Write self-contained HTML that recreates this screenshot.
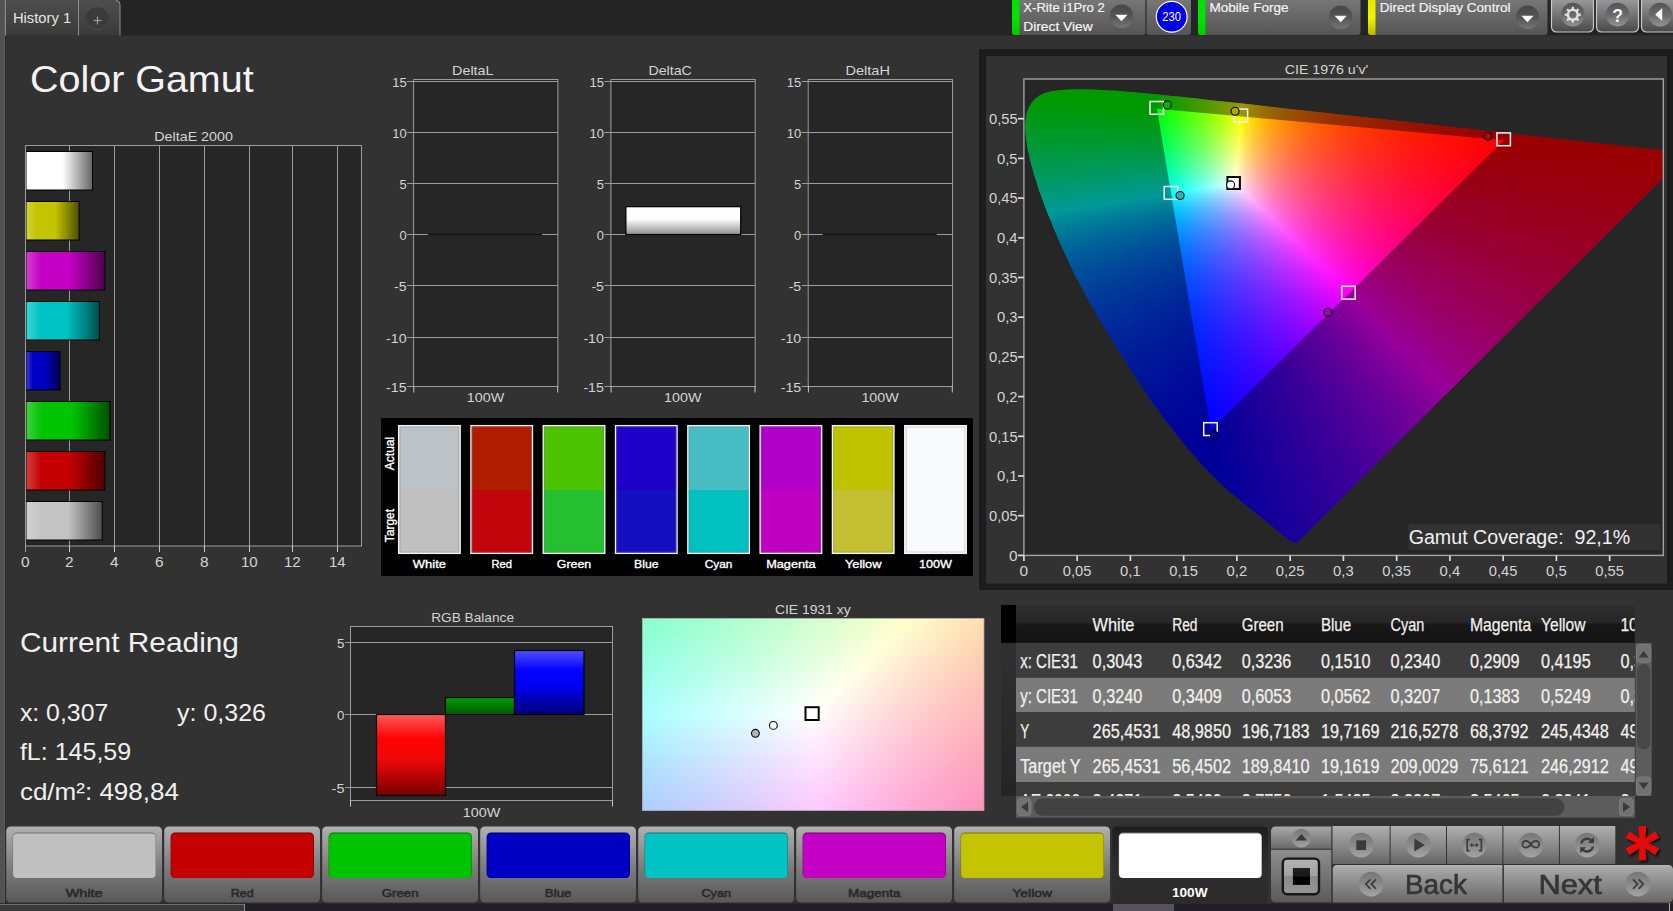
<!DOCTYPE html><html><head><meta charset="utf-8"><title>Color Gamut</title><style>html,body{margin:0;padding:0;background:#323232;overflow:hidden}svg{display:block}text{white-space:pre}</style></head><body><svg width="1673" height="911" viewBox="0 0 1673 911" font-family="'Liberation Sans', sans-serif"><defs><linearGradient id="gTab" x1="0" y1="0" x2="0" y2="1"><stop offset="0" stop-color="#4e4e4e"/><stop offset="1" stop-color="#3a3a3a"/></linearGradient><radialGradient id="gPlus" cx="0.5" cy="0.4" r="0.55"><stop offset="0" stop-color="#3c3c3c"/><stop offset="0.8" stop-color="#3a3a3a"/><stop offset="1" stop-color="#444"/></radialGradient><linearGradient id="gPan" x1="0" y1="0" x2="0" y2="1"><stop offset="0" stop-color="#767676"/><stop offset="1" stop-color="#555"/></linearGradient><linearGradient id="gGreen" x1="0" y1="0" x2="0" y2="1"><stop offset="0" stop-color="#04e004"/><stop offset="0.5" stop-color="#00e600"/><stop offset="1" stop-color="#00cc00"/></linearGradient><linearGradient id="gYel" x1="0" y1="0" x2="0" y2="1"><stop offset="0" stop-color="#e6e600"/><stop offset="0.5" stop-color="#f4f400"/><stop offset="1" stop-color="#b8b800"/></linearGradient><linearGradient id="gDD" x1="0" y1="0" x2="0" y2="1"><stop offset="0" stop-color="#464646"/><stop offset="0.5" stop-color="#555"/><stop offset="1" stop-color="#767676"/></linearGradient><linearGradient id="gBtn" x1="0" y1="0" x2="0" y2="1"><stop offset="0" stop-color="#9c9c9c"/><stop offset="0.5" stop-color="#747474"/><stop offset="1" stop-color="#484848"/></linearGradient><linearGradient id="gIc" x1="0" y1="0" x2="0" y2="1"><stop offset="0" stop-color="#545454"/><stop offset="0.5" stop-color="#6a6a6a"/><stop offset="1" stop-color="#929292"/></linearGradient><linearGradient id="gE0" x1="0" y1="0" x2="1" y2="0"><stop offset="0" stop-color="#ffffff"/><stop offset="0.2" stop-color="#ffffff"/><stop offset="0.55" stop-color="#ffffff"/><stop offset="1" stop-color="#666666"/></linearGradient><linearGradient id="gE1" x1="0" y1="0" x2="1" y2="0"><stop offset="0" stop-color="#d2d23f"/><stop offset="0.2" stop-color="#c4c400"/><stop offset="0.55" stop-color="#c4c400"/><stop offset="1" stop-color="#4e4e00"/></linearGradient><linearGradient id="gE2" x1="0" y1="0" x2="1" y2="0"><stop offset="0" stop-color="#d23fd2"/><stop offset="0.2" stop-color="#c400c4"/><stop offset="0.55" stop-color="#c400c4"/><stop offset="1" stop-color="#4e004e"/></linearGradient><linearGradient id="gE3" x1="0" y1="0" x2="1" y2="0"><stop offset="0" stop-color="#3fd2d2"/><stop offset="0.2" stop-color="#00c4c4"/><stop offset="0.55" stop-color="#00c4c4"/><stop offset="1" stop-color="#004e4e"/></linearGradient><linearGradient id="gE4" x1="0" y1="0" x2="1" y2="0"><stop offset="0" stop-color="#3f3fd2"/><stop offset="0.2" stop-color="#0000c4"/><stop offset="0.55" stop-color="#0000c4"/><stop offset="1" stop-color="#00004e"/></linearGradient><linearGradient id="gE5" x1="0" y1="0" x2="1" y2="0"><stop offset="0" stop-color="#3fd23f"/><stop offset="0.2" stop-color="#00c400"/><stop offset="0.55" stop-color="#00c400"/><stop offset="1" stop-color="#004e00"/></linearGradient><linearGradient id="gE6" x1="0" y1="0" x2="1" y2="0"><stop offset="0" stop-color="#d23f3f"/><stop offset="0.2" stop-color="#c40000"/><stop offset="0.55" stop-color="#c40000"/><stop offset="1" stop-color="#4e0000"/></linearGradient><linearGradient id="gE7" x1="0" y1="0" x2="1" y2="0"><stop offset="0" stop-color="#d2d2d2"/><stop offset="0.2" stop-color="#c4c4c4"/><stop offset="0.55" stop-color="#c4c4c4"/><stop offset="1" stop-color="#4e4e4e"/></linearGradient><linearGradient id="gDC" x1="0" y1="0" x2="0" y2="1"><stop offset="0" stop-color="#ffffff"/><stop offset="0.45" stop-color="#fdfdfd"/><stop offset="1" stop-color="#8e8e8e"/></linearGradient><linearGradient id="u0" gradientUnits="userSpaceOnUse" x1="1052" x2="1119"><stop offset="0" stop-color="#0f0"/><stop offset="1" stop-color="#0f0"/></linearGradient><linearGradient id="u1" gradientUnits="userSpaceOnUse" x1="1044" x2="1143"><stop offset="0" stop-color="#0f0"/><stop offset="1" stop-color="#0f0"/></linearGradient><linearGradient id="u2" gradientUnits="userSpaceOnUse" x1="1039" x2="1164"><stop offset="0" stop-color="#0f0"/><stop offset="0.92" stop-color="#0f0"/><stop offset="1" stop-color="#16ff00"/></linearGradient><linearGradient id="u3" gradientUnits="userSpaceOnUse" x1="1036" x2="1183"><stop offset="0" stop-color="#0f0"/><stop offset="0.8095" stop-color="#0f0"/><stop offset="1" stop-color="#4f0"/></linearGradient><linearGradient id="u4" gradientUnits="userSpaceOnUse" x1="1033" x2="1202"><stop offset="0" stop-color="#00ff01"/><stop offset="0.7219" stop-color="#0f0"/><stop offset="0.858" stop-color="#37ff00"/><stop offset="1" stop-color="#78ff00"/></linearGradient><linearGradient id="u5" gradientUnits="userSpaceOnUse" x1="1032" x2="1220"><stop offset="0" stop-color="#00ff04"/><stop offset="0.1543" stop-color="#0f0"/><stop offset="0.6543" stop-color="#0f0"/><stop offset="0.8298" stop-color="#50ff00"/><stop offset="1" stop-color="#afff00"/></linearGradient><linearGradient id="u6" gradientUnits="userSpaceOnUse" x1="1030" x2="1238"><stop offset="0" stop-color="#00ff08"/><stop offset="0.25" stop-color="#0f0"/><stop offset="0.6058" stop-color="#0f0"/><stop offset="0.7115" stop-color="#36ff00"/><stop offset="0.8125" stop-color="#6fff00"/><stop offset="0.9087" stop-color="#acff00"/><stop offset="1" stop-color="#ef0"/></linearGradient><linearGradient id="u7" gradientUnits="userSpaceOnUse" x1="1029" x2="1256"><stop offset="0" stop-color="#00ff0b"/><stop offset="0.3304" stop-color="#0f0"/><stop offset="0.5595" stop-color="#0f0"/><stop offset="0.6564" stop-color="#35ff00"/><stop offset="0.7577" stop-color="#75ff00"/><stop offset="0.8502" stop-color="#b6ff00"/><stop offset="0.9383" stop-color="#feff00"/><stop offset="1" stop-color="#ffd200"/></linearGradient><linearGradient id="u8" gradientUnits="userSpaceOnUse" x1="1028" x2="1274"><stop offset="0" stop-color="#00ff0f"/><stop offset="0.3984" stop-color="#0f0"/><stop offset="0.5244" stop-color="#01ff00"/><stop offset="0.6179" stop-color="#3aff00"/><stop offset="0.7073" stop-color="#7f0"/><stop offset="0.7927" stop-color="#baff00"/><stop offset="0.8699" stop-color="#ff0"/><stop offset="0.9309" stop-color="#ffce00"/><stop offset="1" stop-color="#ffa600"/></linearGradient><linearGradient id="u9" gradientUnits="userSpaceOnUse" x1="1027" x2="1292"><stop offset="0" stop-color="#00ff12"/><stop offset="0.4906" stop-color="#0f0"/><stop offset="0.5774" stop-color="#39ff00"/><stop offset="0.6604" stop-color="#7f0"/><stop offset="0.7358" stop-color="#b7ff00"/><stop offset="0.8113" stop-color="#ff0"/><stop offset="0.8491" stop-color="#ffdc00"/><stop offset="0.8943" stop-color="#fb0"/><stop offset="0.9434" stop-color="#ff9f00"/><stop offset="1" stop-color="#ff8500"/></linearGradient><linearGradient id="u10" gradientUnits="userSpaceOnUse" x1="1026" x2="1310"><stop offset="0" stop-color="#00ff16"/><stop offset="0.4613" stop-color="#00ff03"/><stop offset="0.5387" stop-color="#36ff00"/><stop offset="0.6162" stop-color="#74ff00"/><stop offset="0.6866" stop-color="#b4ff00"/><stop offset="0.7606" stop-color="#fffe00"/><stop offset="0.8063" stop-color="#ffd200"/><stop offset="0.8627" stop-color="#fa0"/><stop offset="0.9261" stop-color="#ff8900"/><stop offset="1" stop-color="#ff6c00"/></linearGradient><linearGradient id="u11" gradientUnits="userSpaceOnUse" x1="1025" x2="1328"><stop offset="0" stop-color="#00ff19"/><stop offset="0.4389" stop-color="#01ff07"/><stop offset="0.5149" stop-color="#3bff03"/><stop offset="0.5842" stop-color="#7f0"/><stop offset="0.6502" stop-color="#b7ff00"/><stop offset="0.7129" stop-color="#fdff00"/><stop offset="0.7723" stop-color="#ffc600"/><stop offset="0.835" stop-color="#ff9b00"/><stop offset="0.9109" stop-color="#f70"/><stop offset="1" stop-color="#ff5800"/></linearGradient><linearGradient id="u12" gradientUnits="userSpaceOnUse" x1="1025" x2="1346"><stop offset="0" stop-color="#00ff1d"/><stop offset="0.4143" stop-color="#00ff0c"/><stop offset="0.486" stop-color="#3aff07"/><stop offset="0.5514" stop-color="#77ff03"/><stop offset="0.6137" stop-color="#b8ff00"/><stop offset="0.6729" stop-color="#feff00"/><stop offset="0.704" stop-color="#fd0"/><stop offset="0.7321" stop-color="#ffc300"/><stop offset="0.7664" stop-color="#ffa900"/><stop offset="0.8037" stop-color="#ff9200"/><stop offset="0.891" stop-color="#ff6900"/><stop offset="1" stop-color="#ff4800"/></linearGradient><linearGradient id="u13" gradientUnits="userSpaceOnUse" x1="1025" x2="1364"><stop offset="0" stop-color="#00ff20"/><stop offset="0.3923" stop-color="#00ff10"/><stop offset="0.4572" stop-color="#37ff0d"/><stop offset="0.5221" stop-color="#76ff08"/><stop offset="0.5811" stop-color="#b8ff04"/><stop offset="0.6372" stop-color="#feff00"/><stop offset="0.6696" stop-color="#ffd900"/><stop offset="0.7021" stop-color="#ffba00"/><stop offset="0.7375" stop-color="#ffa000"/><stop offset="0.7788" stop-color="#ff8700"/><stop offset="0.8761" stop-color="#ff5d00"/><stop offset="1" stop-color="#ff3b00"/></linearGradient><linearGradient id="u14" gradientUnits="userSpaceOnUse" x1="1024" x2="1382"><stop offset="0" stop-color="#00ff24"/><stop offset="0.3771" stop-color="#01ff15"/><stop offset="0.4385" stop-color="#39ff11"/><stop offset="0.4972" stop-color="#76ff0d"/><stop offset="0.5531" stop-color="#b8ff09"/><stop offset="0.6061" stop-color="#ffff05"/><stop offset="0.6369" stop-color="#ffd802"/><stop offset="0.6704" stop-color="#ffb700"/><stop offset="0.7095" stop-color="#f90"/><stop offset="0.7542" stop-color="#ff7e00"/><stop offset="0.8045" stop-color="#ff6700"/><stop offset="0.8631" stop-color="#ff5200"/><stop offset="1" stop-color="#ff3000"/></linearGradient><linearGradient id="u15" gradientUnits="userSpaceOnUse" x1="1024" x2="1400"><stop offset="0" stop-color="#00ff28"/><stop offset="0.359" stop-color="#00ff1a"/><stop offset="0.4176" stop-color="#39ff16"/><stop offset="0.4734" stop-color="#76ff13"/><stop offset="0.5266" stop-color="#b8ff0f"/><stop offset="0.5745" stop-color="#fcff0b"/><stop offset="0.5771" stop-color="#fffe0b"/><stop offset="0.6117" stop-color="#ffd106"/><stop offset="0.6463" stop-color="#ffaf03"/><stop offset="0.6862" stop-color="#ff9100"/><stop offset="0.734" stop-color="#ff7500"/><stop offset="0.7872" stop-color="#ff5d00"/><stop offset="0.8484" stop-color="#ff4800"/><stop offset="1" stop-color="#ff2600"/></linearGradient><linearGradient id="u16" gradientUnits="userSpaceOnUse" x1="1024" x2="1418"><stop offset="0" stop-color="#00ff2b"/><stop offset="0.3426" stop-color="#00ff1e"/><stop offset="0.3959" stop-color="#36ff1c"/><stop offset="0.4518" stop-color="#76ff18"/><stop offset="0.5025" stop-color="#b9ff15"/><stop offset="0.5482" stop-color="#fdff11"/><stop offset="0.5863" stop-color="#ffcd0b"/><stop offset="0.6218" stop-color="#ffaa07"/><stop offset="0.665" stop-color="#ff8903"/><stop offset="0.7132" stop-color="#ff6e00"/><stop offset="0.769" stop-color="#ff5600"/><stop offset="0.835" stop-color="#ff4000"/><stop offset="0.9112" stop-color="#ff2e00"/><stop offset="1" stop-color="#ff1e00"/></linearGradient><linearGradient id="u17" gradientUnits="userSpaceOnUse" x1="1024" x2="1436"><stop offset="0" stop-color="#00ff2f"/><stop offset="0.3301" stop-color="#01ff23"/><stop offset="0.3835" stop-color="#3bff21"/><stop offset="0.4345" stop-color="#79ff1e"/><stop offset="0.4806" stop-color="#b9ff1b"/><stop offset="0.5243" stop-color="#feff17"/><stop offset="0.5607" stop-color="#ffcd10"/><stop offset="0.5971" stop-color="#ffa70b"/><stop offset="0.6408" stop-color="#ff8506"/><stop offset="0.6917" stop-color="#ff6802"/><stop offset="0.7524" stop-color="#ff4f00"/><stop offset="0.8228" stop-color="#ff3900"/><stop offset="0.9053" stop-color="#ff2600"/><stop offset="1" stop-color="#ff1600"/></linearGradient><linearGradient id="u18" gradientUnits="userSpaceOnUse" x1="1024" x2="1454"><stop offset="0" stop-color="#00ff32"/><stop offset="0.3163" stop-color="#00ff28"/><stop offset="0.3651" stop-color="#37ff26"/><stop offset="0.4116" stop-color="#72ff23"/><stop offset="0.4581" stop-color="#b6ff21"/><stop offset="0.5023" stop-color="#feff1e"/><stop offset="0.5047" stop-color="#fffc1d"/><stop offset="0.5372" stop-color="#ffcc15"/><stop offset="0.5767" stop-color="#ffa20f"/><stop offset="0.6209" stop-color="#ff8009"/><stop offset="0.6744" stop-color="#ff6205"/><stop offset="0.7372" stop-color="#ff4801"/><stop offset="0.8116" stop-color="#ff3200"/><stop offset="0.8977" stop-color="#ff2000"/><stop offset="1" stop-color="#ff1000"/></linearGradient><linearGradient id="u19" gradientUnits="userSpaceOnUse" x1="1024" x2="1472"><stop offset="0" stop-color="#00ff36"/><stop offset="0.3036" stop-color="#00ff2d"/><stop offset="0.3504" stop-color="#37ff2b"/><stop offset="0.3973" stop-color="#75ff29"/><stop offset="0.442" stop-color="#b9ff26"/><stop offset="0.4821" stop-color="#ffff24"/><stop offset="0.5156" stop-color="#ffcb1b"/><stop offset="0.5536" stop-color="#ffa113"/><stop offset="0.6004" stop-color="#ff7c0d"/><stop offset="0.6562" stop-color="#ff5c07"/><stop offset="0.721" stop-color="#ff4303"/><stop offset="0.7991" stop-color="#ff2d00"/><stop offset="0.8906" stop-color="#ff1a00"/><stop offset="1" stop-color="#ff0a00"/></linearGradient><linearGradient id="u20" gradientUnits="userSpaceOnUse" x1="1024" x2="1490"><stop offset="0" stop-color="#00ff3a"/><stop offset="0.294" stop-color="#01ff32"/><stop offset="0.3391" stop-color="#39ff30"/><stop offset="0.382" stop-color="#75ff2f"/><stop offset="0.4227" stop-color="#b6ff2d"/><stop offset="0.4635" stop-color="#fffe2a"/><stop offset="0.4957" stop-color="#ffca20"/><stop offset="0.5365" stop-color="#ff9c17"/><stop offset="0.5837" stop-color="#ff7710"/><stop offset="0.6395" stop-color="#ff580a"/><stop offset="0.706" stop-color="#ff3e04"/><stop offset="0.7876" stop-color="#ff2700"/><stop offset="0.8841" stop-color="#ff1500"/><stop offset="1" stop-color="#ff0500"/></linearGradient><linearGradient id="u21" gradientUnits="userSpaceOnUse" x1="1024" x2="1508"><stop offset="0" stop-color="#00ff3d"/><stop offset="0.2831" stop-color="#00ff37"/><stop offset="0.3264" stop-color="#38ff36"/><stop offset="0.3678" stop-color="#75ff34"/><stop offset="0.405" stop-color="#b3ff33"/><stop offset="0.4463" stop-color="#fffd31"/><stop offset="0.4628" stop-color="#ffdf2a"/><stop offset="0.4793" stop-color="#ffc625"/><stop offset="0.5207" stop-color="#ff971a"/><stop offset="0.5682" stop-color="#ff7212"/><stop offset="0.626" stop-color="#ff520c"/><stop offset="0.6963" stop-color="#ff3806"/><stop offset="0.7789" stop-color="#ff2201"/><stop offset="0.8802" stop-color="#ff1000"/><stop offset="1" stop-color="#ff0100"/></linearGradient><linearGradient id="u22" gradientUnits="userSpaceOnUse" x1="1024" x2="1526"><stop offset="0" stop-color="#00ff41"/><stop offset="0.2729" stop-color="#00ff3c"/><stop offset="0.3127" stop-color="#35ff3b"/><stop offset="0.3526" stop-color="#72ff3a"/><stop offset="0.3884" stop-color="#afff39"/><stop offset="0.4303" stop-color="#fffc37"/><stop offset="0.4462" stop-color="#ffde30"/><stop offset="0.4641" stop-color="#ffc329"/><stop offset="0.504" stop-color="#ff941e"/><stop offset="0.5538" stop-color="#ff6d15"/><stop offset="0.6135" stop-color="#ff4d0d"/><stop offset="0.6892" stop-color="#ff3107"/><stop offset="0.7809" stop-color="#ff1b02"/><stop offset="0.9143" stop-color="#ff0600"/><stop offset="1" stop-color="#f00"/></linearGradient><linearGradient id="u23" gradientUnits="userSpaceOnUse" x1="1024" x2="1544"><stop offset="0" stop-color="#00ff45"/><stop offset="0.2654" stop-color="#01ff42"/><stop offset="0.3038" stop-color="#37ff41"/><stop offset="0.3404" stop-color="#71ff40"/><stop offset="0.3731" stop-color="#acff3f"/><stop offset="0.4135" stop-color="#feff3e"/><stop offset="0.4154" stop-color="#fffc3e"/><stop offset="0.4327" stop-color="#ffda35"/><stop offset="0.45" stop-color="#ffbf2e"/><stop offset="0.4904" stop-color="#ff9022"/><stop offset="0.5404" stop-color="#ff6818"/><stop offset="0.6019" stop-color="#ff480f"/><stop offset="0.6846" stop-color="#ff2b08"/><stop offset="0.7865" stop-color="#ff1402"/><stop offset="0.9308" stop-color="#f00"/><stop offset="1" stop-color="#f00"/></linearGradient><linearGradient id="u24" gradientUnits="userSpaceOnUse" x1="1024" x2="1562"><stop offset="0" stop-color="#00ff49"/><stop offset="0.2565" stop-color="#00ff47"/><stop offset="0.2955" stop-color="#3aff47"/><stop offset="0.3327" stop-color="#78ff46"/><stop offset="0.368" stop-color="#bbff46"/><stop offset="0.3996" stop-color="#ffff45"/><stop offset="0.4164" stop-color="#ffdd3c"/><stop offset="0.4331" stop-color="#ffc134"/><stop offset="0.4517" stop-color="#ffa72d"/><stop offset="0.474" stop-color="#ff8f26"/><stop offset="0.526" stop-color="#ff651a"/><stop offset="0.5892" stop-color="#f41"/><stop offset="0.6784" stop-color="#ff2609"/><stop offset="0.79" stop-color="#ff0f02"/><stop offset="0.8959" stop-color="#f00"/><stop offset="1" stop-color="#f00"/></linearGradient><linearGradient id="u25" gradientUnits="userSpaceOnUse" x1="1025" x2="1579"><stop offset="0" stop-color="#00ff4d"/><stop offset="0.2473" stop-color="#00ff4c"/><stop offset="0.2834" stop-color="#36ff4c"/><stop offset="0.3195" stop-color="#74ff4c"/><stop offset="0.352" stop-color="#b4ff4c"/><stop offset="0.3863" stop-color="#fffe4c"/><stop offset="0.4025" stop-color="#ffdc42"/><stop offset="0.4206" stop-color="#ffbd38"/><stop offset="0.4404" stop-color="#ffa230"/><stop offset="0.4621" stop-color="#ff8a29"/><stop offset="0.5144" stop-color="#ff611d"/><stop offset="0.5794" stop-color="#ff3f13"/><stop offset="0.6751" stop-color="#ff210a"/><stop offset="0.796" stop-color="#ff0903"/><stop offset="0.8646" stop-color="#f00"/><stop offset="1" stop-color="#f00"/></linearGradient><linearGradient id="u26" gradientUnits="userSpaceOnUse" x1="1025" x2="1597"><stop offset="0" stop-color="#00ff50"/><stop offset="0.2413" stop-color="#01ff52"/><stop offset="0.2762" stop-color="#39ff52"/><stop offset="0.3094" stop-color="#74ff52"/><stop offset="0.3392" stop-color="#b0ff53"/><stop offset="0.3741" stop-color="#fffd53"/><stop offset="0.3899" stop-color="#ffdb48"/><stop offset="0.4073" stop-color="#ffbc3e"/><stop offset="0.4266" stop-color="#ffa135"/><stop offset="0.4493" stop-color="#ff882d"/><stop offset="0.5017" stop-color="#ff5e1f"/><stop offset="0.5682" stop-color="#ff3c15"/><stop offset="0.6696" stop-color="#ff1c0a"/><stop offset="0.8024" stop-color="#ff0403"/><stop offset="0.8339" stop-color="#ff0001"/><stop offset="1" stop-color="#f00"/></linearGradient><linearGradient id="u27" gradientUnits="userSpaceOnUse" x1="1025" x2="1615"><stop offset="0" stop-color="#00ff54"/><stop offset="0.2339" stop-color="#00ff57"/><stop offset="0.2678" stop-color="#38ff58"/><stop offset="0.3" stop-color="#74ff59"/><stop offset="0.3288" stop-color="#b0ff59"/><stop offset="0.3627" stop-color="#fffd59"/><stop offset="0.378" stop-color="#ffda4e"/><stop offset="0.3966" stop-color="#ffb942"/><stop offset="0.4169" stop-color="#ff9c38"/><stop offset="0.439" stop-color="#ff8330"/><stop offset="0.4915" stop-color="#ff5a22"/><stop offset="0.5593" stop-color="#ff3816"/><stop offset="0.6644" stop-color="#ff180b"/><stop offset="0.8051" stop-color="#ff0003"/><stop offset="1" stop-color="#f00"/></linearGradient><linearGradient id="u28" gradientUnits="userSpaceOnUse" x1="1026" x2="1633"><stop offset="0" stop-color="#00ff58"/><stop offset="0.2257" stop-color="#00ff5d"/><stop offset="0.257" stop-color="#34ff5e"/><stop offset="0.2883" stop-color="#70ff5f"/><stop offset="0.3147" stop-color="#a9ff60"/><stop offset="0.3493" stop-color="#feff62"/><stop offset="0.3509" stop-color="#fffc60"/><stop offset="0.3657" stop-color="#ffd954"/><stop offset="0.3839" stop-color="#ffb848"/><stop offset="0.4036" stop-color="#ff9b3d"/><stop offset="0.4267" stop-color="#ff8134"/><stop offset="0.453" stop-color="#ff692b"/><stop offset="0.4811" stop-color="#ff5624"/><stop offset="0.5502" stop-color="#ff3417"/><stop offset="0.6491" stop-color="#ff160d"/><stop offset="0.7776" stop-color="#ff0005"/><stop offset="1" stop-color="#f00"/></linearGradient><linearGradient id="u29" gradientUnits="userSpaceOnUse" x1="1026" x2="1651"><stop offset="0" stop-color="#00ff5c"/><stop offset="0.2208" stop-color="#01ff63"/><stop offset="0.2528" stop-color="#3aff64"/><stop offset="0.2832" stop-color="#7f6"/><stop offset="0.312" stop-color="#b8ff67"/><stop offset="0.3392" stop-color="#ffff69"/><stop offset="0.3552" stop-color="#ffd85a"/><stop offset="0.3728" stop-color="#ffb74d"/><stop offset="0.392" stop-color="#ff9a42"/><stop offset="0.4144" stop-color="#ff8038"/><stop offset="0.44" stop-color="#ff682f"/><stop offset="0.4688" stop-color="#ff5427"/><stop offset="0.5392" stop-color="#ff3119"/><stop offset="0.632" stop-color="#ff150f"/><stop offset="0.752" stop-color="#ff0006"/><stop offset="1" stop-color="#f00"/></linearGradient><linearGradient id="u30" gradientUnits="userSpaceOnUse" x1="1026" x2="1663"><stop offset="0" stop-color="#00ff60"/><stop offset="0.2166" stop-color="#00ff68"/><stop offset="0.248" stop-color="#39ff6a"/><stop offset="0.2779" stop-color="#77ff6c"/><stop offset="0.3046" stop-color="#b5ff6e"/><stop offset="0.3328" stop-color="#fffe70"/><stop offset="0.3485" stop-color="#ffd760"/><stop offset="0.3658" stop-color="#ffb652"/><stop offset="0.3862" stop-color="#ff9746"/><stop offset="0.4082" stop-color="#ff7d3b"/><stop offset="0.4333" stop-color="#ff6632"/><stop offset="0.4631" stop-color="#ff5129"/><stop offset="0.5322" stop-color="#ff2f1b"/><stop offset="0.6217" stop-color="#ff1510"/><stop offset="0.7347" stop-color="#ff0008"/><stop offset="1" stop-color="#f00"/></linearGradient><linearGradient id="u31" gradientUnits="userSpaceOnUse" x1="1027" x2="1663"><stop offset="0" stop-color="#00ff64"/><stop offset="0.2154" stop-color="#00ff6e"/><stop offset="0.2453" stop-color="#36ff70"/><stop offset="0.2752" stop-color="#73ff73"/><stop offset="0.3019" stop-color="#b1ff75"/><stop offset="0.3318" stop-color="#fffd77"/><stop offset="0.3475" stop-color="#ffd666"/><stop offset="0.3648" stop-color="#ffb558"/><stop offset="0.3852" stop-color="#ff964b"/><stop offset="0.4072" stop-color="#ff7d3f"/><stop offset="0.4324" stop-color="#ff6635"/><stop offset="0.4623" stop-color="#ff502c"/><stop offset="0.5314" stop-color="#ff2f1e"/><stop offset="0.6195" stop-color="#ff1412"/><stop offset="0.7311" stop-color="#ff000a"/><stop offset="1" stop-color="#f00"/></linearGradient><linearGradient id="u32" gradientUnits="userSpaceOnUse" x1="1027" x2="1663"><stop offset="0" stop-color="#00ff69"/><stop offset="0.217" stop-color="#01ff74"/><stop offset="0.2469" stop-color="#38ff77"/><stop offset="0.2752" stop-color="#73ff79"/><stop offset="0.3003" stop-color="#aeff7c"/><stop offset="0.3318" stop-color="#fffd7e"/><stop offset="0.3475" stop-color="#ffd56d"/><stop offset="0.3648" stop-color="#ffb45d"/><stop offset="0.3852" stop-color="#ff954f"/><stop offset="0.4072" stop-color="#ff7c44"/><stop offset="0.4324" stop-color="#ff6539"/><stop offset="0.4623" stop-color="#ff4f30"/><stop offset="0.5314" stop-color="#ff2e20"/><stop offset="0.6179" stop-color="#ff1415"/><stop offset="0.728" stop-color="#ff000b"/><stop offset="1" stop-color="#f00"/></linearGradient><linearGradient id="u33" gradientUnits="userSpaceOnUse" x1="1028" x2="1663"><stop offset="0" stop-color="#00ff6d"/><stop offset="0.2157" stop-color="#00ff7a"/><stop offset="0.2457" stop-color="#37ff7d"/><stop offset="0.274" stop-color="#73ff80"/><stop offset="0.2976" stop-color="#aaff83"/><stop offset="0.3291" stop-color="#feff87"/><stop offset="0.3307" stop-color="#fffc86"/><stop offset="0.3465" stop-color="#ffd573"/><stop offset="0.3638" stop-color="#ffb363"/><stop offset="0.3843" stop-color="#ff9454"/><stop offset="0.4063" stop-color="#ff7b48"/><stop offset="0.4315" stop-color="#ff643d"/><stop offset="0.4614" stop-color="#ff4f33"/><stop offset="0.5307" stop-color="#ff2d23"/><stop offset="0.6157" stop-color="#ff1417"/><stop offset="0.7244" stop-color="#ff000d"/><stop offset="1" stop-color="#ff0001"/></linearGradient><linearGradient id="u34" gradientUnits="userSpaceOnUse" x1="1028" x2="1663"><stop offset="0" stop-color="#00ff71"/><stop offset="0.2157" stop-color="#00ff80"/><stop offset="0.2457" stop-color="#37ff84"/><stop offset="0.2756" stop-color="#76ff87"/><stop offset="0.3039" stop-color="#baff8b"/><stop offset="0.3291" stop-color="#ffff8f"/><stop offset="0.3449" stop-color="#ffd77b"/><stop offset="0.3622" stop-color="#ffb56a"/><stop offset="0.3827" stop-color="#ff965a"/><stop offset="0.4047" stop-color="#ff7b4d"/><stop offset="0.4299" stop-color="#ff6441"/><stop offset="0.4598" stop-color="#ff4f37"/><stop offset="0.5291" stop-color="#ff2d26"/><stop offset="0.6142" stop-color="#ff1419"/><stop offset="0.7213" stop-color="#ff000f"/><stop offset="1" stop-color="#ff0002"/></linearGradient><linearGradient id="u35" gradientUnits="userSpaceOnUse" x1="1028" x2="1663"><stop offset="0" stop-color="#00ff75"/><stop offset="0.2173" stop-color="#01ff87"/><stop offset="0.2472" stop-color="#39ff8a"/><stop offset="0.2756" stop-color="#76ff8e"/><stop offset="0.3024" stop-color="#b6ff92"/><stop offset="0.3291" stop-color="#fffe97"/><stop offset="0.3449" stop-color="#ffd682"/><stop offset="0.3622" stop-color="#ffb470"/><stop offset="0.3827" stop-color="#ff955f"/><stop offset="0.4047" stop-color="#ff7b51"/><stop offset="0.4299" stop-color="#ff6345"/><stop offset="0.4598" stop-color="#ff4e3a"/><stop offset="0.5291" stop-color="#ff2c28"/><stop offset="0.6126" stop-color="#ff141b"/><stop offset="0.7181" stop-color="#f01"/><stop offset="1" stop-color="#ff0003"/></linearGradient><linearGradient id="u36" gradientUnits="userSpaceOnUse" x1="1029" x2="1663"><stop offset="0" stop-color="#00ff7a"/><stop offset="0.2161" stop-color="#00ff8d"/><stop offset="0.2461" stop-color="#39ff91"/><stop offset="0.2744" stop-color="#75ff95"/><stop offset="0.2997" stop-color="#b2ff9a"/><stop offset="0.3281" stop-color="#fffe9e"/><stop offset="0.3438" stop-color="#ffd588"/><stop offset="0.3612" stop-color="#ffb375"/><stop offset="0.3817" stop-color="#ff9464"/><stop offset="0.4038" stop-color="#ff7a56"/><stop offset="0.429" stop-color="#ff6349"/><stop offset="0.459" stop-color="#ff4d3d"/><stop offset="0.5284" stop-color="#ff2c2b"/><stop offset="0.6104" stop-color="#ff131d"/><stop offset="0.7145" stop-color="#ff0012"/><stop offset="1" stop-color="#ff0004"/></linearGradient><linearGradient id="u37" gradientUnits="userSpaceOnUse" x1="1029" x2="1663"><stop offset="0" stop-color="#00ff7e"/><stop offset="0.2161" stop-color="#00ff93"/><stop offset="0.2445" stop-color="#35ff97"/><stop offset="0.2729" stop-color="#72ff9c"/><stop offset="0.2981" stop-color="#afffa1"/><stop offset="0.3281" stop-color="#fffda6"/><stop offset="0.3438" stop-color="#ffd48f"/><stop offset="0.3612" stop-color="#ffb27b"/><stop offset="0.3817" stop-color="#ff9369"/><stop offset="0.4038" stop-color="#ff795a"/><stop offset="0.429" stop-color="#ff624d"/><stop offset="0.4574" stop-color="#ff4d41"/><stop offset="0.5284" stop-color="#ff2b2d"/><stop offset="0.6088" stop-color="#ff131f"/><stop offset="0.7114" stop-color="#ff0014"/><stop offset="1" stop-color="#ff0005"/></linearGradient><linearGradient id="u38" gradientUnits="userSpaceOnUse" x1="1030" x2="1663"><stop offset="0" stop-color="#00ff82"/><stop offset="0.2164" stop-color="#01ff9a"/><stop offset="0.2449" stop-color="#38ff9f"/><stop offset="0.2717" stop-color="#71ffa4"/><stop offset="0.2954" stop-color="#abffa9"/><stop offset="0.3254" stop-color="#feffb0"/><stop offset="0.327" stop-color="#fffcae"/><stop offset="0.3428" stop-color="#ffd396"/><stop offset="0.3602" stop-color="#ffb181"/><stop offset="0.3791" stop-color="#ff946f"/><stop offset="0.4013" stop-color="#ff795f"/><stop offset="0.4265" stop-color="#ff6251"/><stop offset="0.455" stop-color="#ff4e45"/><stop offset="0.5261" stop-color="#ff2b30"/><stop offset="0.6066" stop-color="#ff1322"/><stop offset="0.7077" stop-color="#ff0016"/><stop offset="1" stop-color="#ff0006"/></linearGradient><linearGradient id="u39" gradientUnits="userSpaceOnUse" x1="1030" x2="1663"><stop offset="0" stop-color="#00ff87"/><stop offset="0.2164" stop-color="#00ffa0"/><stop offset="0.2449" stop-color="#37ffa5"/><stop offset="0.2717" stop-color="#71ffab"/><stop offset="0.3002" stop-color="#b7ffb2"/><stop offset="0.3254" stop-color="#ffffb8"/><stop offset="0.327" stop-color="#fffbb6"/><stop offset="0.3428" stop-color="#ffd29c"/><stop offset="0.3602" stop-color="#ffb087"/><stop offset="0.3791" stop-color="#ff9374"/><stop offset="0.4013" stop-color="#ff7964"/><stop offset="0.4265" stop-color="#ff6155"/><stop offset="0.455" stop-color="#ff4d48"/><stop offset="0.5261" stop-color="#ff2a33"/><stop offset="0.6051" stop-color="#ff1324"/><stop offset="0.7046" stop-color="#ff0018"/><stop offset="1" stop-color="#ff0007"/></linearGradient><linearGradient id="u40" gradientUnits="userSpaceOnUse" x1="1031" x2="1663"><stop offset="0" stop-color="#00ff8b"/><stop offset="0.1171" stop-color="#00ff98"/><stop offset="0.2152" stop-color="#00ffa7"/><stop offset="0.2437" stop-color="#36ffad"/><stop offset="0.2722" stop-color="#75ffb3"/><stop offset="0.2991" stop-color="#b8ffba"/><stop offset="0.3244" stop-color="#ffffc1"/><stop offset="0.3386" stop-color="#ffd9a8"/><stop offset="0.356" stop-color="#ffb590"/><stop offset="0.3766" stop-color="#ff947b"/><stop offset="0.3987" stop-color="#ff7969"/><stop offset="0.4241" stop-color="#ff625a"/><stop offset="0.4525" stop-color="#ff4d4c"/><stop offset="0.5237" stop-color="#ff2a36"/><stop offset="0.6028" stop-color="#ff1326"/><stop offset="0.7009" stop-color="#ff001a"/><stop offset="1" stop-color="#ff0008"/></linearGradient><linearGradient id="u41" gradientUnits="userSpaceOnUse" x1="1032" x2="1663"><stop offset="0" stop-color="#00ff90"/><stop offset="0.1173" stop-color="#00ff9d"/><stop offset="0.2155" stop-color="#01ffae"/><stop offset="0.2441" stop-color="#39ffb4"/><stop offset="0.271" stop-color="#74ffbb"/><stop offset="0.2964" stop-color="#b4ffc1"/><stop offset="0.3233" stop-color="#fffec9"/><stop offset="0.3376" stop-color="#ffd8af"/><stop offset="0.355" stop-color="#ffb496"/><stop offset="0.3756" stop-color="#ff9380"/><stop offset="0.3978" stop-color="#ff786e"/><stop offset="0.4231" stop-color="#ff615e"/><stop offset="0.4517" stop-color="#ff4c50"/><stop offset="0.523" stop-color="#ff2a38"/><stop offset="0.6006" stop-color="#ff1228"/><stop offset="0.6973" stop-color="#ff001c"/><stop offset="1" stop-color="#ff0009"/></linearGradient><linearGradient id="u42" gradientUnits="userSpaceOnUse" x1="1032" x2="1663"><stop offset="0" stop-color="#00ff94"/><stop offset="0.1173" stop-color="#00ffa3"/><stop offset="0.2155" stop-color="#00ffb5"/><stop offset="0.2441" stop-color="#38ffbb"/><stop offset="0.271" stop-color="#74ffc2"/><stop offset="0.2948" stop-color="#b0ffc9"/><stop offset="0.3233" stop-color="#fffdd1"/><stop offset="0.3376" stop-color="#ffd7b6"/><stop offset="0.355" stop-color="#ffb39c"/><stop offset="0.3756" stop-color="#ff9285"/><stop offset="0.3978" stop-color="#ff7773"/><stop offset="0.4231" stop-color="#ff6062"/><stop offset="0.4517" stop-color="#ff4b53"/><stop offset="0.523" stop-color="#ff293b"/><stop offset="0.599" stop-color="#ff122b"/><stop offset="0.6941" stop-color="#ff001e"/><stop offset="1" stop-color="#ff000a"/></linearGradient><linearGradient id="u43" gradientUnits="userSpaceOnUse" x1="1033" x2="1663"><stop offset="0" stop-color="#0f9"/><stop offset="0.1175" stop-color="#00ffa9"/><stop offset="0.2143" stop-color="#00ffbc"/><stop offset="0.2413" stop-color="#34ffc2"/><stop offset="0.2683" stop-color="#70ffca"/><stop offset="0.2921" stop-color="#acffd1"/><stop offset="0.3206" stop-color="#fdffdb"/><stop offset="0.3222" stop-color="#fffcd9"/><stop offset="0.3365" stop-color="#ffd6bd"/><stop offset="0.354" stop-color="#ffb2a3"/><stop offset="0.3746" stop-color="#ff918b"/><stop offset="0.3968" stop-color="#ff7677"/><stop offset="0.4222" stop-color="#ff5f66"/><stop offset="0.4508" stop-color="#ff4b57"/><stop offset="0.5222" stop-color="#ff283e"/><stop offset="0.5968" stop-color="#ff122d"/><stop offset="0.6905" stop-color="#ff0020"/><stop offset="0.8254" stop-color="#ff0014"/><stop offset="1" stop-color="#ff000b"/></linearGradient><linearGradient id="u44" gradientUnits="userSpaceOnUse" x1="1033" x2="1663"><stop offset="0" stop-color="#00ff9e"/><stop offset="0.1175" stop-color="#00ffaf"/><stop offset="0.2159" stop-color="#01ffc3"/><stop offset="0.2429" stop-color="#37ffca"/><stop offset="0.2683" stop-color="#70ffd2"/><stop offset="0.2952" stop-color="#b5ffdb"/><stop offset="0.3206" stop-color="#feffe5"/><stop offset="0.3222" stop-color="#fffbe2"/><stop offset="0.3365" stop-color="#ffd5c4"/><stop offset="0.354" stop-color="#ffb1a9"/><stop offset="0.3746" stop-color="#ff9090"/><stop offset="0.3968" stop-color="#ff767c"/><stop offset="0.4222" stop-color="#ff5e6a"/><stop offset="0.4508" stop-color="#ff4a5a"/><stop offset="0.5222" stop-color="#ff2740"/><stop offset="0.5968" stop-color="#ff112f"/><stop offset="0.6873" stop-color="#f02"/><stop offset="0.8238" stop-color="#ff0015"/><stop offset="1" stop-color="#ff000c"/></linearGradient><linearGradient id="u45" gradientUnits="userSpaceOnUse" x1="1034" x2="1663"><stop offset="0" stop-color="#00ffa3"/><stop offset="0.1176" stop-color="#00ffb5"/><stop offset="0.2146" stop-color="#00ffca"/><stop offset="0.2432" stop-color="#3affd2"/><stop offset="0.2703" stop-color="#77ffdb"/><stop offset="0.2957" stop-color="#b9ffe4"/><stop offset="0.3196" stop-color="#ffe"/><stop offset="0.3339" stop-color="#ffd7cf"/><stop offset="0.3514" stop-color="#ffb2b1"/><stop offset="0.3704" stop-color="#ff9499"/><stop offset="0.3927" stop-color="#ff7883"/><stop offset="0.4181" stop-color="#ff6070"/><stop offset="0.4467" stop-color="#ff4b5f"/><stop offset="0.5183" stop-color="#ff2844"/><stop offset="0.593" stop-color="#ff1232"/><stop offset="0.6836" stop-color="#ff0024"/><stop offset="0.8219" stop-color="#ff0017"/><stop offset="1" stop-color="#ff000d"/></linearGradient><linearGradient id="u46" gradientUnits="userSpaceOnUse" x1="1035" x2="1661"><stop offset="0" stop-color="#00ffa8"/><stop offset="0.1166" stop-color="#00ffba"/><stop offset="0.2141" stop-color="#00ffd1"/><stop offset="0.2412" stop-color="#36ffd9"/><stop offset="0.2684" stop-color="#73ffe3"/><stop offset="0.2923" stop-color="#b1ffec"/><stop offset="0.3195" stop-color="#fffef7"/><stop offset="0.3339" stop-color="#ffd6d6"/><stop offset="0.3514" stop-color="#ffb1b8"/><stop offset="0.3706" stop-color="#ff939f"/><stop offset="0.393" stop-color="#f78"/><stop offset="0.4185" stop-color="#ff5f74"/><stop offset="0.4473" stop-color="#ff4a63"/><stop offset="0.5176" stop-color="#ff2847"/><stop offset="0.5911" stop-color="#ff1235"/><stop offset="0.6821" stop-color="#ff0026"/><stop offset="0.8211" stop-color="#ff0018"/><stop offset="1" stop-color="#ff000e"/></linearGradient><linearGradient id="u47" gradientUnits="userSpaceOnUse" x1="1035" x2="1659"><stop offset="0" stop-color="#00ffad"/><stop offset="0.1186" stop-color="#00ffc1"/><stop offset="0.2163" stop-color="#01ffd9"/><stop offset="0.2436" stop-color="#38ffe2"/><stop offset="0.2692" stop-color="#73ffeb"/><stop offset="0.2917" stop-color="#adfff4"/><stop offset="0.3205" stop-color="#fffcff"/><stop offset="0.3349" stop-color="#ffd5de"/><stop offset="0.3526" stop-color="#ffb0be"/><stop offset="0.3718" stop-color="#ff92a4"/><stop offset="0.3942" stop-color="#ff768d"/><stop offset="0.4199" stop-color="#ff5e78"/><stop offset="0.4487" stop-color="#ff4967"/><stop offset="0.5192" stop-color="#ff274a"/><stop offset="0.5913" stop-color="#ff1137"/><stop offset="0.6811" stop-color="#ff0028"/><stop offset="0.8205" stop-color="#ff001a"/><stop offset="1" stop-color="#ff000f"/></linearGradient><linearGradient id="u48" gradientUnits="userSpaceOnUse" x1="1036" x2="1657"><stop offset="0" stop-color="#00ffb2"/><stop offset="0.1176" stop-color="#00ffc7"/><stop offset="0.2158" stop-color="#00ffe0"/><stop offset="0.2576" stop-color="#58ffef"/><stop offset="0.2947" stop-color="#b6ffff"/><stop offset="0.3237" stop-color="#fef1ff"/><stop offset="0.3253" stop-color="#ffedfc"/><stop offset="0.3398" stop-color="#ffc9dc"/><stop offset="0.3575" stop-color="#ffa7bd"/><stop offset="0.3784" stop-color="#ff88a2"/><stop offset="0.401" stop-color="#ff6e8c"/><stop offset="0.4267" stop-color="#ff5878"/><stop offset="0.4557" stop-color="#ff4467"/><stop offset="0.5266" stop-color="#ff244a"/><stop offset="0.5958" stop-color="#ff1039"/><stop offset="0.6795" stop-color="#ff002a"/><stop offset="0.8196" stop-color="#ff001b"/><stop offset="1" stop-color="#ff0010"/></linearGradient><linearGradient id="u49" gradientUnits="userSpaceOnUse" x1="1037" x2="1655"><stop offset="0" stop-color="#00ffb7"/><stop offset="0.1181" stop-color="#00ffcd"/><stop offset="0.2152" stop-color="#00ffe8"/><stop offset="0.2443" stop-color="#3bfff2"/><stop offset="0.2751" stop-color="#83ffff"/><stop offset="0.3269" stop-color="#fee7ff"/><stop offset="0.3285" stop-color="#ffe4fc"/><stop offset="0.343" stop-color="#ffc1dd"/><stop offset="0.3608" stop-color="#ffa0bf"/><stop offset="0.3819" stop-color="#ff83a4"/><stop offset="0.4045" stop-color="#ff6a8e"/><stop offset="0.4304" stop-color="#ff557a"/><stop offset="0.4595" stop-color="#ff4269"/><stop offset="0.5324" stop-color="#ff224b"/><stop offset="0.5987" stop-color="#ff0f3b"/><stop offset="0.678" stop-color="#ff002d"/><stop offset="0.8172" stop-color="#ff001d"/><stop offset="1" stop-color="#f01"/></linearGradient><linearGradient id="u50" gradientUnits="userSpaceOnUse" x1="1037" x2="1653"><stop offset="0" stop-color="#00ffbc"/><stop offset="0.1185" stop-color="#00ffd3"/><stop offset="0.2175" stop-color="#01fff0"/><stop offset="0.2565" stop-color="#53ffff"/><stop offset="0.3312" stop-color="#feddff"/><stop offset="0.3328" stop-color="#ffdafc"/><stop offset="0.349" stop-color="#ffb6db"/><stop offset="0.3669" stop-color="#ff98be"/><stop offset="0.388" stop-color="#ff7ca4"/><stop offset="0.4107" stop-color="#ff658e"/><stop offset="0.4367" stop-color="#ff507b"/><stop offset="0.4675" stop-color="#ff3d69"/><stop offset="0.539" stop-color="#ff1f4d"/><stop offset="0.6023" stop-color="#ff0e3c"/><stop offset="0.6769" stop-color="#ff002f"/><stop offset="0.8166" stop-color="#ff001f"/><stop offset="1" stop-color="#ff0012"/></linearGradient><linearGradient id="u51" gradientUnits="userSpaceOnUse" x1="1038" x2="1651"><stop offset="0" stop-color="#00ffc1"/><stop offset="0.1191" stop-color="#00ffda"/><stop offset="0.217" stop-color="#00fff8"/><stop offset="0.2349" stop-color="#24ffff"/><stop offset="0.279" stop-color="#81edff"/><stop offset="0.3361" stop-color="#ffd1fd"/><stop offset="0.3524" stop-color="#ffafdc"/><stop offset="0.3703" stop-color="#ff92bf"/><stop offset="0.3915" stop-color="#ff77a5"/><stop offset="0.4144" stop-color="#ff6190"/><stop offset="0.4715" stop-color="#ff3b6a"/><stop offset="0.5432" stop-color="#ff1e4e"/><stop offset="0.6052" stop-color="#ff0d3e"/><stop offset="0.6754" stop-color="#ff0031"/><stop offset="0.8157" stop-color="#ff0020"/><stop offset="1" stop-color="#ff0014"/></linearGradient><linearGradient id="u52" gradientUnits="userSpaceOnUse" x1="1039" x2="1649"><stop offset="0" stop-color="#00ffc6"/><stop offset="0.1148" stop-color="#00ffdf"/><stop offset="0.2164" stop-color="#00feff"/><stop offset="0.2705" stop-color="#6be8ff"/><stop offset="0.3393" stop-color="#ffc8fd"/><stop offset="0.3557" stop-color="#ffa8dc"/><stop offset="0.3738" stop-color="#ff8cc1"/><stop offset="0.3951" stop-color="#ff73a7"/><stop offset="0.418" stop-color="#ff5d91"/><stop offset="0.4754" stop-color="#ff386c"/><stop offset="0.5492" stop-color="#ff1b4f"/><stop offset="0.6738" stop-color="#ff0034"/><stop offset="0.8148" stop-color="#f02"/><stop offset="1" stop-color="#ff0015"/></linearGradient><linearGradient id="u53" gradientUnits="userSpaceOnUse" x1="1039" x2="1647"><stop offset="0" stop-color="#0fc"/><stop offset="0.1053" stop-color="#00ffe3"/><stop offset="0.1941" stop-color="#0ff"/><stop offset="0.2188" stop-color="#01f6ff"/><stop offset="0.278" stop-color="#75deff"/><stop offset="0.3438" stop-color="#ffc0fd"/><stop offset="0.3602" stop-color="#ffa1dd"/><stop offset="0.3783" stop-color="#ff87c2"/><stop offset="0.3997" stop-color="#ff6ea8"/><stop offset="0.4243" stop-color="#ff5892"/><stop offset="0.4819" stop-color="#ff356d"/><stop offset="0.5559" stop-color="#ff1950"/><stop offset="0.6727" stop-color="#ff0036"/><stop offset="0.8141" stop-color="#ff0024"/><stop offset="1" stop-color="#ff0016"/></linearGradient><linearGradient id="u54" gradientUnits="userSpaceOnUse" x1="1040" x2="1645"><stop offset="0" stop-color="#00ffd1"/><stop offset="0.0926" stop-color="#00ffe6"/><stop offset="0.1719" stop-color="#0ff"/><stop offset="0.2182" stop-color="#0ef"/><stop offset="0.2793" stop-color="#74d6ff"/><stop offset="0.3471" stop-color="#ffb8fe"/><stop offset="0.3636" stop-color="#ff9bde"/><stop offset="0.3835" stop-color="#ff80c1"/><stop offset="0.405" stop-color="#ff68a8"/><stop offset="0.4281" stop-color="#ff5593"/><stop offset="0.4876" stop-color="#ff326e"/><stop offset="0.562" stop-color="#ff1751"/><stop offset="0.6711" stop-color="#ff0038"/><stop offset="0.8132" stop-color="#ff0026"/><stop offset="1" stop-color="#ff0017"/></linearGradient><linearGradient id="u55" gradientUnits="userSpaceOnUse" x1="1041" x2="1643"><stop offset="0" stop-color="#00ffd7"/><stop offset="0.0797" stop-color="#00ffe9"/><stop offset="0.1512" stop-color="#0ff"/><stop offset="0.2176" stop-color="#00e7ff"/><stop offset="0.2791" stop-color="#71d0ff"/><stop offset="0.3505" stop-color="#ffb1fe"/><stop offset="0.3671" stop-color="#ff95df"/><stop offset="0.387" stop-color="#ff7bc2"/><stop offset="0.4086" stop-color="#ff64aa"/><stop offset="0.4336" stop-color="#ff5093"/><stop offset="0.4917" stop-color="#ff306f"/><stop offset="0.5664" stop-color="#ff1653"/><stop offset="0.6694" stop-color="#ff003b"/><stop offset="0.8123" stop-color="#ff0027"/><stop offset="1" stop-color="#ff0019"/></linearGradient><linearGradient id="u56" gradientUnits="userSpaceOnUse" x1="1042" x2="1641"><stop offset="0" stop-color="#00ffdc"/><stop offset="0.1302" stop-color="#0ff"/><stop offset="0.2187" stop-color="#01e0ff"/><stop offset="0.2855" stop-color="#7ac6ff"/><stop offset="0.3539" stop-color="#ffa9fe"/><stop offset="0.3689" stop-color="#ff91e3"/><stop offset="0.3873" stop-color="#ff7ac8"/><stop offset="0.429" stop-color="#ff539c"/><stop offset="0.4808" stop-color="#ff3479"/><stop offset="0.5442" stop-color="#ff1c5d"/><stop offset="0.601" stop-color="#ff0d4c"/><stop offset="0.6678" stop-color="#ff003d"/><stop offset="0.8114" stop-color="#ff0029"/><stop offset="1" stop-color="#ff001a"/></linearGradient><linearGradient id="u57" gradientUnits="userSpaceOnUse" x1="1042" x2="1639"><stop offset="0" stop-color="#00ffe2"/><stop offset="0.1089" stop-color="#0ff"/><stop offset="0.2194" stop-color="#00daff"/><stop offset="0.2881" stop-color="#79c0ff"/><stop offset="0.3585" stop-color="#ffa2fe"/><stop offset="0.3735" stop-color="#ff8be3"/><stop offset="0.392" stop-color="#ff75c9"/><stop offset="0.4338" stop-color="#ff509d"/><stop offset="0.4858" stop-color="#ff327a"/><stop offset="0.5494" stop-color="#ff1a5e"/><stop offset="0.6667" stop-color="#ff0040"/><stop offset="0.8107" stop-color="#ff002b"/><stop offset="1" stop-color="#ff001b"/></linearGradient><linearGradient id="u58" gradientUnits="userSpaceOnUse" x1="1043" x2="1637"><stop offset="0" stop-color="#00ffe8"/><stop offset="0.0875" stop-color="#0ff"/><stop offset="0.2189" stop-color="#00d3ff"/><stop offset="0.2879" stop-color="#75baff"/><stop offset="0.362" stop-color="#ff9cff"/><stop offset="0.3771" stop-color="#ff86e4"/><stop offset="0.3956" stop-color="#ff70ca"/><stop offset="0.4377" stop-color="#ff4c9f"/><stop offset="0.4882" stop-color="#ff307d"/><stop offset="0.5522" stop-color="#ff1960"/><stop offset="0.665" stop-color="#ff0042"/><stop offset="0.8098" stop-color="#ff002d"/><stop offset="1" stop-color="#ff001c"/></linearGradient><linearGradient id="u59" gradientUnits="userSpaceOnUse" x1="1044" x2="1635"><stop offset="0" stop-color="#00ffed"/><stop offset="0.066" stop-color="#0ff"/><stop offset="0.22" stop-color="#01cdff"/><stop offset="0.2944" stop-color="#7eb2ff"/><stop offset="0.3655" stop-color="#ff95ff"/><stop offset="0.3807" stop-color="#ff80e5"/><stop offset="0.3993" stop-color="#ff6bcb"/><stop offset="0.4416" stop-color="#ff49a0"/><stop offset="0.4924" stop-color="#ff2e7e"/><stop offset="0.5567" stop-color="#ff1762"/><stop offset="0.6633" stop-color="#ff0045"/><stop offset="0.8088" stop-color="#ff002f"/><stop offset="1" stop-color="#ff001e"/></linearGradient><linearGradient id="u60" gradientUnits="userSpaceOnUse" x1="1045" x2="1633"><stop offset="0" stop-color="#00fff3"/><stop offset="0.0425" stop-color="#0ff"/><stop offset="0.2194" stop-color="#00c7ff"/><stop offset="0.2959" stop-color="#7dacff"/><stop offset="0.369" stop-color="#ff8fff"/><stop offset="0.3861" stop-color="#ff79e3"/><stop offset="0.4031" stop-color="#ff67cc"/><stop offset="0.4456" stop-color="#ff46a1"/><stop offset="0.4983" stop-color="#ff2b7f"/><stop offset="0.5612" stop-color="#ff1563"/><stop offset="0.6616" stop-color="#ff0048"/><stop offset="0.8061" stop-color="#ff0031"/><stop offset="1" stop-color="#ff001f"/></linearGradient><linearGradient id="u61" gradientUnits="userSpaceOnUse" x1="1045" x2="1631"><stop offset="0" stop-color="#00fff9"/><stop offset="0.0222" stop-color="#0ff"/><stop offset="0.2201" stop-color="#00c2ff"/><stop offset="0.2952" stop-color="#77a7ff"/><stop offset="0.3737" stop-color="#ff89ff"/><stop offset="0.4078" stop-color="#ff63cd"/><stop offset="0.4505" stop-color="#ff43a3"/><stop offset="0.5034" stop-color="#ff2980"/><stop offset="0.5666" stop-color="#ff1465"/><stop offset="0.6604" stop-color="#ff004a"/><stop offset="0.8055" stop-color="#ff0032"/><stop offset="1" stop-color="#ff0020"/></linearGradient><linearGradient id="u62" gradientUnits="userSpaceOnUse" x1="1046" x2="1629"><stop offset="0" stop-color="#0ff"/><stop offset="0.2213" stop-color="#01bcff"/><stop offset="0.2933" stop-color="#71a3ff"/><stop offset="0.3791" stop-color="#ff81fd"/><stop offset="0.4134" stop-color="#ff5dcc"/><stop offset="0.4563" stop-color="#ff3fa3"/><stop offset="0.5094" stop-color="#ff2681"/><stop offset="0.5729" stop-color="#ff1265"/><stop offset="0.6587" stop-color="#ff004d"/><stop offset="0.8045" stop-color="#ff0034"/><stop offset="1" stop-color="#f02"/></linearGradient><linearGradient id="u63" gradientUnits="userSpaceOnUse" x1="1047" x2="1627"><stop offset="0" stop-color="#00f9ff"/><stop offset="0.2207" stop-color="#00b7ff"/><stop offset="0.2948" stop-color="#709eff"/><stop offset="0.3828" stop-color="#ff7cfd"/><stop offset="0.4172" stop-color="#ff59cd"/><stop offset="0.4603" stop-color="#ff3ca4"/><stop offset="0.5121" stop-color="#ff2483"/><stop offset="0.5759" stop-color="#ff1167"/><stop offset="0.6569" stop-color="#ff0050"/><stop offset="0.8034" stop-color="#ff0036"/><stop offset="1" stop-color="#ff0023"/></linearGradient><linearGradient id="u64" gradientUnits="userSpaceOnUse" x1="1048" x2="1625"><stop offset="0" stop-color="#00f3ff"/><stop offset="0.2201" stop-color="#00b2ff"/><stop offset="0.2946" stop-color="#6d99ff"/><stop offset="0.3865" stop-color="#ff77fd"/><stop offset="0.4211" stop-color="#ff55ce"/><stop offset="0.4645" stop-color="#ff39a5"/><stop offset="0.5165" stop-color="#ff2284"/><stop offset="0.5806" stop-color="#ff0f69"/><stop offset="0.6534" stop-color="#ff0053"/><stop offset="0.7504" stop-color="#ff0040"/><stop offset="0.8631" stop-color="#ff0031"/><stop offset="1" stop-color="#ff0024"/></linearGradient><linearGradient id="u65" gradientUnits="userSpaceOnUse" x1="1048" x2="1623"><stop offset="0" stop-color="#00edff"/><stop offset="0.2226" stop-color="#01adff"/><stop offset="0.3026" stop-color="#7592ff"/><stop offset="0.3913" stop-color="#ff72fd"/><stop offset="0.4261" stop-color="#ff52ce"/><stop offset="0.4696" stop-color="#ff36a6"/><stop offset="0.5217" stop-color="#ff2085"/><stop offset="0.5843" stop-color="#ff0e6b"/><stop offset="0.6522" stop-color="#ff0056"/><stop offset="0.753" stop-color="#ff0042"/><stop offset="0.8643" stop-color="#ff0032"/><stop offset="1" stop-color="#ff0026"/></linearGradient><linearGradient id="u66" gradientUnits="userSpaceOnUse" x1="1049" x2="1621"><stop offset="0" stop-color="#00e8ff"/><stop offset="0.222" stop-color="#00a8ff"/><stop offset="0.3042" stop-color="#748eff"/><stop offset="0.3951" stop-color="#ff6dfe"/><stop offset="0.4301" stop-color="#ff4ecf"/><stop offset="0.4738" stop-color="#ff34a7"/><stop offset="0.5262" stop-color="#ff1e87"/><stop offset="0.5892" stop-color="#ff0c6c"/><stop offset="0.6503" stop-color="#ff0059"/><stop offset="0.757" stop-color="#ff0043"/><stop offset="0.8671" stop-color="#ff0034"/><stop offset="1" stop-color="#ff0027"/></linearGradient><linearGradient id="u67" gradientUnits="userSpaceOnUse" x1="1050" x2="1619"><stop offset="0" stop-color="#00e2ff"/><stop offset="0.2214" stop-color="#00a4ff"/><stop offset="0.304" stop-color="#718aff"/><stop offset="0.3989" stop-color="#ff68fe"/><stop offset="0.4341" stop-color="#ff4ad0"/><stop offset="0.478" stop-color="#ff31a9"/><stop offset="0.5308" stop-color="#ff1c88"/><stop offset="0.5923" stop-color="#ff0b6e"/><stop offset="0.6485" stop-color="#ff005c"/><stop offset="0.7592" stop-color="#ff0045"/><stop offset="0.8682" stop-color="#ff0035"/><stop offset="1" stop-color="#ff0029"/></linearGradient><linearGradient id="u68" gradientUnits="userSpaceOnUse" x1="1051" x2="1617"><stop offset="0" stop-color="#0df"/><stop offset="0.2226" stop-color="#019fff"/><stop offset="0.311" stop-color="#7983ff"/><stop offset="0.4028" stop-color="#ff63fe"/><stop offset="0.4382" stop-color="#ff47d1"/><stop offset="0.4823" stop-color="#ff2faa"/><stop offset="0.5353" stop-color="#ff1a89"/><stop offset="0.5972" stop-color="#ff0a6f"/><stop offset="0.6466" stop-color="#ff005f"/><stop offset="0.7615" stop-color="#ff0046"/><stop offset="0.8693" stop-color="#ff0037"/><stop offset="1" stop-color="#ff002a"/></linearGradient><linearGradient id="u69" gradientUnits="userSpaceOnUse" x1="1052" x2="1615"><stop offset="0" stop-color="#00d8ff"/><stop offset="0.222" stop-color="#009bff"/><stop offset="0.3126" stop-color="#787fff"/><stop offset="0.4067" stop-color="#ff5ffe"/><stop offset="0.4423" stop-color="#ff44d2"/><stop offset="0.4867" stop-color="#ff2cab"/><stop offset="0.5382" stop-color="#ff198b"/><stop offset="0.6004" stop-color="#ff0971"/><stop offset="0.6448" stop-color="#ff0063"/><stop offset="0.7638" stop-color="#ff0048"/><stop offset="0.8721" stop-color="#ff0038"/><stop offset="1" stop-color="#ff002b"/></linearGradient><linearGradient id="u70" gradientUnits="userSpaceOnUse" x1="1053" x2="1613"><stop offset="0" stop-color="#00d3ff"/><stop offset="0.2214" stop-color="#0097ff"/><stop offset="0.3125" stop-color="#757cff"/><stop offset="0.4107" stop-color="#ff5bfe"/><stop offset="0.4482" stop-color="#ff3fd1"/><stop offset="0.4911" stop-color="#ff2aac"/><stop offset="0.5429" stop-color="#ff178d"/><stop offset="0.6054" stop-color="#ff0772"/><stop offset="0.6429" stop-color="#f06"/><stop offset="0.7679" stop-color="#ff0049"/><stop offset="0.8732" stop-color="#ff003a"/><stop offset="1" stop-color="#ff002d"/></linearGradient><linearGradient id="u71" gradientUnits="userSpaceOnUse" x1="1053" x2="1611"><stop offset="0" stop-color="#00cfff"/><stop offset="0.224" stop-color="#0193ff"/><stop offset="0.3208" stop-color="#7c76ff"/><stop offset="0.4158" stop-color="#ff56ff"/><stop offset="0.4534" stop-color="#ff3cd1"/><stop offset="0.4964" stop-color="#ff27ad"/><stop offset="0.5484" stop-color="#ff158e"/><stop offset="0.6093" stop-color="#ff0674"/><stop offset="0.6416" stop-color="#ff0069"/><stop offset="0.7706" stop-color="#ff004b"/><stop offset="0.8746" stop-color="#ff003c"/><stop offset="1" stop-color="#ff002e"/></linearGradient><linearGradient id="u72" gradientUnits="userSpaceOnUse" x1="1054" x2="1609"><stop offset="0" stop-color="#00caff"/><stop offset="0.2234" stop-color="#0090ff"/><stop offset="0.3225" stop-color="#7b72ff"/><stop offset="0.4198" stop-color="#ff52ff"/><stop offset="0.4577" stop-color="#ff39d2"/><stop offset="0.5009" stop-color="#ff25ae"/><stop offset="0.5532" stop-color="#ff138f"/><stop offset="0.6144" stop-color="#ff0575"/><stop offset="0.6396" stop-color="#ff006d"/><stop offset="0.7748" stop-color="#ff004d"/><stop offset="1" stop-color="#ff0030"/></linearGradient><linearGradient id="u73" gradientUnits="userSpaceOnUse" x1="1055" x2="1607"><stop offset="0" stop-color="#00c6ff"/><stop offset="0.2228" stop-color="#008cff"/><stop offset="0.3225" stop-color="#796fff"/><stop offset="0.4239" stop-color="#ff4eff"/><stop offset="0.462" stop-color="#ff36d3"/><stop offset="0.5054" stop-color="#ff23af"/><stop offset="0.5562" stop-color="#ff1291"/><stop offset="0.6178" stop-color="#ff0477"/><stop offset="0.6377" stop-color="#ff0070"/><stop offset="0.6902" stop-color="#ff0061"/><stop offset="0.7772" stop-color="#ff004e"/><stop offset="1" stop-color="#ff0031"/></linearGradient><linearGradient id="u74" gradientUnits="userSpaceOnUse" x1="1056" x2="1605"><stop offset="0" stop-color="#00c1ff"/><stop offset="0.224" stop-color="#0188ff"/><stop offset="0.3279" stop-color="#7d6aff"/><stop offset="0.4281" stop-color="#ff4bff"/><stop offset="0.4663" stop-color="#ff33d4"/><stop offset="0.51" stop-color="#ff20b0"/><stop offset="0.561" stop-color="#ff1092"/><stop offset="0.623" stop-color="#ff0278"/><stop offset="0.694" stop-color="#ff0062"/><stop offset="0.7796" stop-color="#ff0050"/><stop offset="1" stop-color="#f03"/></linearGradient><linearGradient id="u75" gradientUnits="userSpaceOnUse" x1="1057" x2="1603"><stop offset="0" stop-color="#00bdff"/><stop offset="0.2234" stop-color="#0085ff"/><stop offset="0.3297" stop-color="#7c67ff"/><stop offset="0.4322" stop-color="#ff47ff"/><stop offset="0.4707" stop-color="#ff30d4"/><stop offset="0.5147" stop-color="#ff1eb1"/><stop offset="0.5659" stop-color="#ff0f93"/><stop offset="0.6264" stop-color="#ff017a"/><stop offset="0.6978" stop-color="#ff0064"/><stop offset="0.7821" stop-color="#ff0052"/><stop offset="1" stop-color="#ff0034"/></linearGradient><linearGradient id="u76" gradientUnits="userSpaceOnUse" x1="1058" x2="1601"><stop offset="0" stop-color="#00b9ff"/><stop offset="0.2228" stop-color="#0082ff"/><stop offset="0.3204" stop-color="#6f66ff"/><stop offset="0.4383" stop-color="#ff42fd"/><stop offset="0.4751" stop-color="#ff2ed5"/><stop offset="0.5193" stop-color="#ff1cb2"/><stop offset="0.5709" stop-color="#ff0d94"/><stop offset="0.6317" stop-color="#ff007b"/><stop offset="0.7035" stop-color="#ff0065"/><stop offset="0.7864" stop-color="#ff0053"/><stop offset="1" stop-color="#ff0036"/></linearGradient><linearGradient id="u77" gradientUnits="userSpaceOnUse" x1="1059" x2="1599"><stop offset="0" stop-color="#00b5ff"/><stop offset="0.2241" stop-color="#017eff"/><stop offset="0.3278" stop-color="#7561ff"/><stop offset="0.4426" stop-color="#ff3ffd"/><stop offset="0.4796" stop-color="#ff2bd6"/><stop offset="0.5241" stop-color="#ff1ab3"/><stop offset="0.5759" stop-color="#ff0b95"/><stop offset="0.6352" stop-color="#ff007d"/><stop offset="0.7056" stop-color="#ff0067"/><stop offset="0.7889" stop-color="#f05"/><stop offset="1" stop-color="#ff0038"/></linearGradient><linearGradient id="u78" gradientUnits="userSpaceOnUse" x1="1060" x2="1597"><stop offset="0" stop-color="#00b1ff"/><stop offset="0.2235" stop-color="#007bff"/><stop offset="0.3296" stop-color="#745eff"/><stop offset="0.4469" stop-color="#ff3bfe"/><stop offset="0.4842" stop-color="#ff28d6"/><stop offset="0.5289" stop-color="#ff18b4"/><stop offset="0.581" stop-color="#ff0a96"/><stop offset="0.6406" stop-color="#ff007e"/><stop offset="0.7114" stop-color="#ff0068"/><stop offset="0.7933" stop-color="#ff0056"/><stop offset="1" stop-color="#ff0039"/></linearGradient><linearGradient id="u79" gradientUnits="userSpaceOnUse" x1="1060" x2="1595"><stop offset="0" stop-color="#00adff"/><stop offset="0.2243" stop-color="#0078ff"/><stop offset="0.3308" stop-color="#725cff"/><stop offset="0.4523" stop-color="#ff38fe"/><stop offset="0.4897" stop-color="#ff26d7"/><stop offset="0.5346" stop-color="#ff16b5"/><stop offset="0.585" stop-color="#ff0898"/><stop offset="0.6262" stop-color="#ff0086"/><stop offset="0.6449" stop-color="#ff007f"/><stop offset="0.714" stop-color="#ff006a"/><stop offset="0.7963" stop-color="#ff0058"/><stop offset="1" stop-color="#ff003b"/></linearGradient><linearGradient id="u80" gradientUnits="userSpaceOnUse" x1="1061" x2="1593"><stop offset="0" stop-color="#0af"/><stop offset="0.2256" stop-color="#0175ff"/><stop offset="0.3383" stop-color="#7857ff"/><stop offset="0.4568" stop-color="#ff35fe"/><stop offset="0.4944" stop-color="#ff23d7"/><stop offset="0.5376" stop-color="#ff14b7"/><stop offset="0.5771" stop-color="#ff0aa0"/><stop offset="0.6222" stop-color="#ff008b"/><stop offset="0.6485" stop-color="#ff0081"/><stop offset="0.718" stop-color="#ff006c"/><stop offset="0.797" stop-color="#ff005a"/><stop offset="1" stop-color="#ff003c"/></linearGradient><linearGradient id="u81" gradientUnits="userSpaceOnUse" x1="1062" x2="1591"><stop offset="0" stop-color="#00a6ff"/><stop offset="0.225" stop-color="#0072ff"/><stop offset="0.3403" stop-color="#7854ff"/><stop offset="0.4612" stop-color="#ff32fe"/><stop offset="0.4991" stop-color="#ff21d8"/><stop offset="0.5425" stop-color="#ff12b7"/><stop offset="0.62" stop-color="#ff008f"/><stop offset="0.6522" stop-color="#ff0083"/><stop offset="0.7202" stop-color="#ff006e"/><stop offset="0.7996" stop-color="#ff005b"/><stop offset="1" stop-color="#ff003e"/></linearGradient><linearGradient id="u82" gradientUnits="userSpaceOnUse" x1="1063" x2="1589"><stop offset="0" stop-color="#00a2ff"/><stop offset="0.2243" stop-color="#006fff"/><stop offset="0.3403" stop-color="#7552ff"/><stop offset="0.4658" stop-color="#ff2ffe"/><stop offset="0.5038" stop-color="#ff1fd9"/><stop offset="0.5475" stop-color="#ff10b8"/><stop offset="0.6198" stop-color="#ff0092"/><stop offset="0.6578" stop-color="#ff0084"/><stop offset="0.7262" stop-color="#ff006f"/><stop offset="0.8042" stop-color="#ff005d"/><stop offset="1" stop-color="#ff0040"/></linearGradient><linearGradient id="u83" gradientUnits="userSpaceOnUse" x1="1064" x2="1587"><stop offset="0" stop-color="#009fff"/><stop offset="0.2256" stop-color="#016cff"/><stop offset="0.348" stop-color="#7b4dff"/><stop offset="0.4704" stop-color="#ff2cff"/><stop offset="0.5086" stop-color="#ff1cd9"/><stop offset="0.5526" stop-color="#ff0fb9"/><stop offset="0.6176" stop-color="#ff0097"/><stop offset="0.6616" stop-color="#ff0085"/><stop offset="0.7285" stop-color="#ff0071"/><stop offset="0.8069" stop-color="#ff005e"/><stop offset="1" stop-color="#ff0041"/></linearGradient><linearGradient id="u84" gradientUnits="userSpaceOnUse" x1="1065" x2="1585"><stop offset="0" stop-color="#009bff"/><stop offset="0.225" stop-color="#006aff"/><stop offset="0.35" stop-color="#7a4bff"/><stop offset="0.475" stop-color="#ff29ff"/><stop offset="0.5135" stop-color="#ff1ada"/><stop offset="0.5577" stop-color="#ff0dba"/><stop offset="0.6154" stop-color="#ff009b"/><stop offset="0.6654" stop-color="#ff0087"/><stop offset="0.7327" stop-color="#ff0072"/><stop offset="0.8096" stop-color="#ff0060"/><stop offset="1" stop-color="#ff0043"/></linearGradient><linearGradient id="u85" gradientUnits="userSpaceOnUse" x1="1066" x2="1583"><stop offset="0" stop-color="#0098ff"/><stop offset="0.2244" stop-color="#0067ff"/><stop offset="0.3501" stop-color="#7849ff"/><stop offset="0.4797" stop-color="#ff26ff"/><stop offset="0.5184" stop-color="#ff18da"/><stop offset="0.5609" stop-color="#ff0bbc"/><stop offset="0.6132" stop-color="#ff00a0"/><stop offset="0.6692" stop-color="#ff0089"/><stop offset="0.735" stop-color="#ff0074"/><stop offset="0.8124" stop-color="#ff0062"/><stop offset="1" stop-color="#ff0045"/></linearGradient><linearGradient id="u86" gradientUnits="userSpaceOnUse" x1="1067" x2="1581"><stop offset="0" stop-color="#0095ff"/><stop offset="0.2257" stop-color="#0164ff"/><stop offset="0.358" stop-color="#7d45ff"/><stop offset="0.4844" stop-color="#ff24ff"/><stop offset="0.5233" stop-color="#ff15db"/><stop offset="0.5661" stop-color="#ff0abd"/><stop offset="0.6109" stop-color="#ff00a4"/><stop offset="0.6732" stop-color="#ff008a"/><stop offset="0.7393" stop-color="#ff0076"/><stop offset="0.8152" stop-color="#ff0064"/><stop offset="1" stop-color="#ff0047"/></linearGradient><linearGradient id="u87" gradientUnits="userSpaceOnUse" x1="1068" x2="1579"><stop offset="0" stop-color="#0092ff"/><stop offset="0.225" stop-color="#0062ff"/><stop offset="0.3601" stop-color="#7d42ff"/><stop offset="0.4892" stop-color="#ff21ff"/><stop offset="0.5284" stop-color="#ff13db"/><stop offset="0.5714" stop-color="#ff08bd"/><stop offset="0.6086" stop-color="#ff00a9"/><stop offset="0.6771" stop-color="#ff008c"/><stop offset="0.7417" stop-color="#ff0078"/><stop offset="0.816" stop-color="#f06"/><stop offset="1" stop-color="#ff0048"/></linearGradient><linearGradient id="u88" gradientUnits="userSpaceOnUse" x1="1069" x2="1577"><stop offset="0" stop-color="#008fff"/><stop offset="0.2244" stop-color="#0060ff"/><stop offset="0.3583" stop-color="#7941ff"/><stop offset="0.4941" stop-color="#ff1eff"/><stop offset="0.5335" stop-color="#ff11dc"/><stop offset="0.5768" stop-color="#ff06be"/><stop offset="0.6063" stop-color="#ff00ae"/><stop offset="0.6811" stop-color="#ff008e"/><stop offset="0.7461" stop-color="#ff0079"/><stop offset="0.8189" stop-color="#ff0068"/><stop offset="1" stop-color="#ff004a"/></linearGradient><linearGradient id="u89" gradientUnits="userSpaceOnUse" x1="1070" x2="1575"><stop offset="0" stop-color="#008cff"/><stop offset="0.2257" stop-color="#015dff"/><stop offset="0.3644" stop-color="#7c3dff"/><stop offset="0.499" stop-color="#ff1cff"/><stop offset="0.5386" stop-color="#ff0fdc"/><stop offset="0.5822" stop-color="#ff04bf"/><stop offset="0.604" stop-color="#ff00b3"/><stop offset="0.6871" stop-color="#ff008e"/><stop offset="0.8238" stop-color="#ff0069"/><stop offset="1" stop-color="#ff004c"/></linearGradient><linearGradient id="u90" gradientUnits="userSpaceOnUse" x1="1071" x2="1573"><stop offset="0" stop-color="#0089ff"/><stop offset="0.2251" stop-color="#005bff"/><stop offset="0.3586" stop-color="#743dff"/><stop offset="0.506" stop-color="#ff19fe"/><stop offset="0.5438" stop-color="#ff0ddd"/><stop offset="0.5876" stop-color="#ff03bf"/><stop offset="0.6355" stop-color="#ff00a7"/><stop offset="0.6912" stop-color="#ff0090"/><stop offset="0.8267" stop-color="#ff006b"/><stop offset="1" stop-color="#ff004e"/></linearGradient><linearGradient id="u91" gradientUnits="userSpaceOnUse" x1="1072" x2="1571"><stop offset="0" stop-color="#0086ff"/><stop offset="0.2244" stop-color="#0059ff"/><stop offset="0.3587" stop-color="#723bff"/><stop offset="0.511" stop-color="#ff16fe"/><stop offset="0.5491" stop-color="#ff0bdd"/><stop offset="0.5912" stop-color="#ff01c1"/><stop offset="0.6393" stop-color="#ff00a8"/><stop offset="0.6954" stop-color="#ff0092"/><stop offset="0.8297" stop-color="#ff006c"/><stop offset="1" stop-color="#ff0050"/></linearGradient><linearGradient id="u92" gradientUnits="userSpaceOnUse" x1="1073" x2="1569"><stop offset="0" stop-color="#0083ff"/><stop offset="0.2258" stop-color="#0156ff"/><stop offset="0.3669" stop-color="#7738ff"/><stop offset="0.5161" stop-color="#ff14fe"/><stop offset="0.5544" stop-color="#ff09de"/><stop offset="0.5968" stop-color="#ff00c2"/><stop offset="0.6452" stop-color="#ff00a9"/><stop offset="0.6996" stop-color="#ff0093"/><stop offset="0.8306" stop-color="#ff006f"/><stop offset="1" stop-color="#ff0052"/></linearGradient><linearGradient id="u93" gradientUnits="userSpaceOnUse" x1="1074" x2="1567"><stop offset="0" stop-color="#0080ff"/><stop offset="0.2252" stop-color="#0054ff"/><stop offset="0.3692" stop-color="#7736ff"/><stop offset="0.5213" stop-color="#ff12fe"/><stop offset="0.5598" stop-color="#ff07de"/><stop offset="0.6024" stop-color="#ff00c3"/><stop offset="0.6511" stop-color="#f0a"/><stop offset="0.7039" stop-color="#ff0095"/><stop offset="0.8337" stop-color="#ff0070"/><stop offset="1" stop-color="#ff0053"/></linearGradient><linearGradient id="u94" gradientUnits="userSpaceOnUse" x1="1075" x2="1565"><stop offset="0" stop-color="#007eff"/><stop offset="0.2245" stop-color="#0053ff"/><stop offset="0.3694" stop-color="#7534ff"/><stop offset="0.5265" stop-color="#ff10fe"/><stop offset="0.5633" stop-color="#ff06e0"/><stop offset="0.6061" stop-color="#ff00c5"/><stop offset="0.6551" stop-color="#ff00ac"/><stop offset="0.7082" stop-color="#ff0096"/><stop offset="0.8367" stop-color="#ff0072"/><stop offset="1" stop-color="#f05"/></linearGradient><linearGradient id="u95" gradientUnits="userSpaceOnUse" x1="1076" x2="1563"><stop offset="0" stop-color="#007bff"/><stop offset="0.2259" stop-color="#0150ff"/><stop offset="0.3778" stop-color="#7a31ff"/><stop offset="0.5318" stop-color="#ff0efe"/><stop offset="0.5873" stop-color="#ff00d4"/><stop offset="0.6119" stop-color="#ff00c5"/><stop offset="0.6591" stop-color="#ff00ad"/><stop offset="0.7125" stop-color="#ff0098"/><stop offset="0.8398" stop-color="#ff0074"/><stop offset="1" stop-color="#ff0057"/></linearGradient><linearGradient id="u96" gradientUnits="userSpaceOnUse" x1="1077" x2="1561"><stop offset="0" stop-color="#0078ff"/><stop offset="0.2252" stop-color="#004eff"/><stop offset="0.3802" stop-color="#7a2fff"/><stop offset="0.5372" stop-color="#ff0bff"/><stop offset="0.5847" stop-color="#ff00da"/><stop offset="0.6178" stop-color="#ff00c6"/><stop offset="0.7169" stop-color="#f09"/><stop offset="0.843" stop-color="#ff0076"/><stop offset="1" stop-color="#ff0059"/></linearGradient><linearGradient id="u97" gradientUnits="userSpaceOnUse" x1="1078" x2="1559"><stop offset="0" stop-color="#0076ff"/><stop offset="0.2245" stop-color="#004dff"/><stop offset="0.3805" stop-color="#782dff"/><stop offset="0.5426" stop-color="#ff09ff"/><stop offset="0.5821" stop-color="#ff00e0"/><stop offset="0.6216" stop-color="#ff00c8"/><stop offset="0.7214" stop-color="#ff009b"/><stop offset="0.8462" stop-color="#f07"/><stop offset="1" stop-color="#ff005b"/></linearGradient><linearGradient id="u98" gradientUnits="userSpaceOnUse" x1="1079" x2="1557"><stop offset="0" stop-color="#0073ff"/><stop offset="0.2259" stop-color="#014aff"/><stop offset="0.3891" stop-color="#7c2aff"/><stop offset="0.5481" stop-color="#ff07ff"/><stop offset="0.5795" stop-color="#ff00e6"/><stop offset="0.6276" stop-color="#ff00c8"/><stop offset="0.7259" stop-color="#ff009c"/><stop offset="0.8473" stop-color="#ff007a"/><stop offset="1" stop-color="#ff005d"/></linearGradient><linearGradient id="u99" gradientUnits="userSpaceOnUse" x1="1080" x2="1555"><stop offset="0" stop-color="#0071ff"/><stop offset="0.2253" stop-color="#0049ff"/><stop offset="0.3937" stop-color="#7d28ff"/><stop offset="0.5537" stop-color="#ff05ff"/><stop offset="0.5789" stop-color="#ff00eb"/><stop offset="0.6316" stop-color="#ff00ca"/><stop offset="0.7305" stop-color="#ff009e"/><stop offset="0.8505" stop-color="#ff007b"/><stop offset="1" stop-color="#ff005f"/></linearGradient><linearGradient id="u100" gradientUnits="userSpaceOnUse" x1="1081" x2="1553"><stop offset="0" stop-color="#006fff"/><stop offset="0.2246" stop-color="#0047ff"/><stop offset="0.3919" stop-color="#7a27ff"/><stop offset="0.5593" stop-color="#ff03ff"/><stop offset="0.5975" stop-color="#ff00e3"/><stop offset="0.6377" stop-color="#ff00ca"/><stop offset="0.7352" stop-color="#ff009f"/><stop offset="0.8538" stop-color="#ff007d"/><stop offset="1" stop-color="#ff0061"/></linearGradient><linearGradient id="u101" gradientUnits="userSpaceOnUse" x1="1082" x2="1551"><stop offset="0" stop-color="#006cff"/><stop offset="0.226" stop-color="#0045ff"/><stop offset="0.3987" stop-color="#7d24ff"/><stop offset="0.565" stop-color="#ff02ff"/><stop offset="0.6034" stop-color="#ff00e3"/><stop offset="0.6439" stop-color="#ff00cb"/><stop offset="0.7377" stop-color="#ff00a2"/><stop offset="0.855" stop-color="#ff007f"/><stop offset="1" stop-color="#ff0063"/></linearGradient><linearGradient id="u102" gradientUnits="userSpaceOnUse" x1="1083" x2="1549"><stop offset="0" stop-color="#006aff"/><stop offset="0.2253" stop-color="#0043ff"/><stop offset="0.4013" stop-color="#7c22ff"/><stop offset="0.5708" stop-color="#f0f"/><stop offset="0.6481" stop-color="#ff00cd"/><stop offset="0.7425" stop-color="#ff00a3"/><stop offset="0.8584" stop-color="#ff0081"/><stop offset="1" stop-color="#f06"/></linearGradient><linearGradient id="u103" gradientUnits="userSpaceOnUse" x1="1084" x2="1547"><stop offset="0" stop-color="#0068ff"/><stop offset="0.2246" stop-color="#0042ff"/><stop offset="0.3996" stop-color="#7921ff"/><stop offset="0.5767" stop-color="#f0f"/><stop offset="0.6544" stop-color="#ff00cd"/><stop offset="0.7473" stop-color="#ff00a5"/><stop offset="0.8618" stop-color="#ff0083"/><stop offset="1" stop-color="#ff0068"/></linearGradient><linearGradient id="u104" gradientUnits="userSpaceOnUse" x1="1085" x2="1545"><stop offset="0" stop-color="#0065ff"/><stop offset="0.2261" stop-color="#0040ff"/><stop offset="0.4" stop-color="#7720ff"/><stop offset="0.563" stop-color="#ef00ff"/><stop offset="0.5848" stop-color="#ff00fe"/><stop offset="0.6609" stop-color="#ff00ce"/><stop offset="0.7522" stop-color="#ff00a6"/><stop offset="0.8652" stop-color="#ff0085"/><stop offset="1" stop-color="#ff006a"/></linearGradient><linearGradient id="u105" gradientUnits="userSpaceOnUse" x1="1086" x2="1543"><stop offset="0" stop-color="#0063ff"/><stop offset="0.2254" stop-color="#003eff"/><stop offset="0.3961" stop-color="#7220ff"/><stop offset="0.5602" stop-color="#e900ff"/><stop offset="0.5908" stop-color="#ff00fe"/><stop offset="0.6652" stop-color="#ff00cf"/><stop offset="0.7571" stop-color="#ff00a8"/><stop offset="0.8665" stop-color="#ff0087"/><stop offset="1" stop-color="#ff006c"/></linearGradient><linearGradient id="u106" gradientUnits="userSpaceOnUse" x1="1088" x2="1541"><stop offset="0" stop-color="#0061ff"/><stop offset="0.2252" stop-color="#013cff"/><stop offset="0.3929" stop-color="#6f1fff"/><stop offset="0.5563" stop-color="#e200ff"/><stop offset="0.596" stop-color="#ff00fe"/><stop offset="0.6711" stop-color="#ff00d0"/><stop offset="0.7616" stop-color="#ff00a9"/><stop offset="0.8698" stop-color="#ff0089"/><stop offset="1" stop-color="#ff006e"/></linearGradient><linearGradient id="u107" gradientUnits="userSpaceOnUse" x1="1089" x2="1539"><stop offset="0" stop-color="#005fff"/><stop offset="0.2244" stop-color="#003bff"/><stop offset="0.3911" stop-color="#6c1eff"/><stop offset="0.5533" stop-color="#dc00ff"/><stop offset="0.6022" stop-color="#ff00fe"/><stop offset="0.6778" stop-color="#ff00d0"/><stop offset="0.7667" stop-color="#ff00ab"/><stop offset="0.8733" stop-color="#ff008b"/><stop offset="1" stop-color="#ff0071"/></linearGradient><linearGradient id="u108" gradientUnits="userSpaceOnUse" x1="1090" x2="1537"><stop offset="0" stop-color="#005dff"/><stop offset="0.2237" stop-color="#003aff"/><stop offset="0.3893" stop-color="#691dff"/><stop offset="0.5503" stop-color="#d600ff"/><stop offset="0.6085" stop-color="#ff00fe"/><stop offset="0.6823" stop-color="#ff00d2"/><stop offset="0.7696" stop-color="#ff00ad"/><stop offset="0.8747" stop-color="#ff008d"/><stop offset="1" stop-color="#ff0073"/></linearGradient><linearGradient id="u109" gradientUnits="userSpaceOnUse" x1="1091" x2="1535"><stop offset="0" stop-color="#005bff"/><stop offset="0.2252" stop-color="#0138ff"/><stop offset="0.3896" stop-color="#671cff"/><stop offset="0.5473" stop-color="#d000ff"/><stop offset="0.6149" stop-color="#f0f"/><stop offset="0.6869" stop-color="#ff00d4"/><stop offset="0.7748" stop-color="#ff00ae"/><stop offset="0.8784" stop-color="#ff008f"/><stop offset="1" stop-color="#ff0075"/></linearGradient><linearGradient id="u110" gradientUnits="userSpaceOnUse" x1="1092" x2="1533"><stop offset="0" stop-color="#0059ff"/><stop offset="0.2245" stop-color="#0037ff"/><stop offset="0.3878" stop-color="#641cff"/><stop offset="0.5442" stop-color="#ca00ff"/><stop offset="0.6213" stop-color="#f0f"/><stop offset="0.6939" stop-color="#ff00d4"/><stop offset="0.78" stop-color="#ff00b0"/><stop offset="0.8798" stop-color="#ff0092"/><stop offset="1" stop-color="#ff0078"/></linearGradient><linearGradient id="u111" gradientUnits="userSpaceOnUse" x1="1093" x2="1531"><stop offset="0" stop-color="#0057ff"/><stop offset="0.2237" stop-color="#0035ff"/><stop offset="0.3858" stop-color="#611bff"/><stop offset="0.5411" stop-color="#c500ff"/><stop offset="0.6279" stop-color="#f0f"/><stop offset="0.6986" stop-color="#ff00d6"/><stop offset="0.7831" stop-color="#ff00b2"/><stop offset="0.8836" stop-color="#ff0093"/><stop offset="1" stop-color="#ff007a"/></linearGradient><linearGradient id="u112" gradientUnits="userSpaceOnUse" x1="1094" x2="1529"><stop offset="0" stop-color="#05f"/><stop offset="0.2253" stop-color="#0134ff"/><stop offset="0.3839" stop-color="#5e1aff"/><stop offset="0.5379" stop-color="#bf00ff"/><stop offset="0.6345" stop-color="#f0f"/><stop offset="0.7057" stop-color="#ff00d6"/><stop offset="0.7885" stop-color="#ff00b3"/><stop offset="0.8851" stop-color="#ff0096"/><stop offset="1" stop-color="#ff007c"/></linearGradient><linearGradient id="u113" gradientUnits="userSpaceOnUse" x1="1095" x2="1527"><stop offset="0" stop-color="#0053ff"/><stop offset="0.2245" stop-color="#0032ff"/><stop offset="0.3819" stop-color="#5c1aff"/><stop offset="0.5347" stop-color="#ba00ff"/><stop offset="0.6412" stop-color="#f0f"/><stop offset="0.713" stop-color="#ff00d6"/><stop offset="0.794" stop-color="#ff00b5"/><stop offset="0.8889" stop-color="#ff0098"/><stop offset="1" stop-color="#ff007f"/></linearGradient><linearGradient id="u114" gradientUnits="userSpaceOnUse" x1="1097" x2="1525"><stop offset="0" stop-color="#0051ff"/><stop offset="0.222" stop-color="#0031ff"/><stop offset="0.3785" stop-color="#5919ff"/><stop offset="0.5304" stop-color="#b500ff"/><stop offset="0.6472" stop-color="#f0f"/><stop offset="0.7173" stop-color="#ff00d8"/><stop offset="0.7967" stop-color="#ff00b7"/><stop offset="0.8902" stop-color="#ff009a"/><stop offset="1" stop-color="#ff0081"/></linearGradient><linearGradient id="u115" gradientUnits="userSpaceOnUse" x1="1098" x2="1523"><stop offset="0" stop-color="#004fff"/><stop offset="0.2235" stop-color="#0130ff"/><stop offset="0.3765" stop-color="#5618ff"/><stop offset="0.5271" stop-color="#af00ff"/><stop offset="0.6541" stop-color="#f0f"/><stop offset="0.7247" stop-color="#ff00d8"/><stop offset="0.8024" stop-color="#ff00b8"/><stop offset="0.8941" stop-color="#ff009c"/><stop offset="1" stop-color="#ff0084"/></linearGradient><linearGradient id="u116" gradientUnits="userSpaceOnUse" x1="1099" x2="1521"><stop offset="0" stop-color="#004dff"/><stop offset="0.2227" stop-color="#002eff"/><stop offset="0.5237" stop-color="#a0f"/><stop offset="0.6611" stop-color="#f0f"/><stop offset="0.7299" stop-color="#ff00da"/><stop offset="0.8081" stop-color="#ff00ba"/><stop offset="0.8981" stop-color="#ff009e"/><stop offset="1" stop-color="#ff0086"/></linearGradient><linearGradient id="u117" gradientUnits="userSpaceOnUse" x1="1100" x2="1519"><stop offset="0" stop-color="#004cff"/><stop offset="0.222" stop-color="#002dff"/><stop offset="0.5203" stop-color="#a500ff"/><stop offset="0.6683" stop-color="#f0f"/><stop offset="0.7375" stop-color="#ff00da"/><stop offset="0.8115" stop-color="#ff00bc"/><stop offset="0.8998" stop-color="#ff00a1"/><stop offset="1" stop-color="#ff0089"/></linearGradient><linearGradient id="u118" gradientUnits="userSpaceOnUse" x1="1101" x2="1517"><stop offset="0" stop-color="#004aff"/><stop offset="0.2236" stop-color="#012cff"/><stop offset="0.5168" stop-color="#a100ff"/><stop offset="0.6755" stop-color="#fe00ff"/><stop offset="0.7428" stop-color="#ff00dc"/><stop offset="0.8173" stop-color="#ff00bd"/><stop offset="0.9014" stop-color="#ff00a3"/><stop offset="1" stop-color="#ff008c"/></linearGradient><linearGradient id="u119" gradientUnits="userSpaceOnUse" x1="1103" x2="1515"><stop offset="0" stop-color="#0048ff"/><stop offset="0.2209" stop-color="#002bff"/><stop offset="0.5121" stop-color="#9c00ff"/><stop offset="0.6845" stop-color="#ff00fe"/><stop offset="0.75" stop-color="#ff00dc"/><stop offset="0.8228" stop-color="#ff00bf"/><stop offset="0.9053" stop-color="#ff00a5"/><stop offset="1" stop-color="#ff008e"/></linearGradient><linearGradient id="u120" gradientUnits="userSpaceOnUse" x1="1104" x2="1513"><stop offset="0" stop-color="#0046ff"/><stop offset="0.22" stop-color="#0029ff"/><stop offset="0.5086" stop-color="#9700ff"/><stop offset="0.6919" stop-color="#ff00fe"/><stop offset="0.7555" stop-color="#ff00de"/><stop offset="0.8264" stop-color="#ff00c1"/><stop offset="0.9071" stop-color="#ff00a8"/><stop offset="1" stop-color="#ff0091"/></linearGradient><linearGradient id="u121" gradientUnits="userSpaceOnUse" x1="1105" x2="1511"><stop offset="0" stop-color="#0045ff"/><stop offset="0.2217" stop-color="#0128ff"/><stop offset="0.5049" stop-color="#9300ff"/><stop offset="0.6995" stop-color="#ff00fe"/><stop offset="0.7611" stop-color="#ff00df"/><stop offset="0.8325" stop-color="#ff00c2"/><stop offset="0.9113" stop-color="#f0a"/><stop offset="1" stop-color="#ff0094"/></linearGradient><linearGradient id="u122" gradientUnits="userSpaceOnUse" x1="1106" x2="1509"><stop offset="0" stop-color="#0043ff"/><stop offset="0.2208" stop-color="#0027ff"/><stop offset="0.5012" stop-color="#8e00ff"/><stop offset="0.7072" stop-color="#f0f"/><stop offset="0.7667" stop-color="#ff00e0"/><stop offset="0.8362" stop-color="#ff00c5"/><stop offset="0.9132" stop-color="#ff00ac"/><stop offset="1" stop-color="#ff0097"/></linearGradient><linearGradient id="u123" gradientUnits="userSpaceOnUse" x1="1107" x2="1507"><stop offset="0" stop-color="#0042ff"/><stop offset="0.22" stop-color="#0026ff"/><stop offset="0.4975" stop-color="#8a00ff"/><stop offset="0.715" stop-color="#f0f"/><stop offset="0.775" stop-color="#ff00e1"/><stop offset="0.8425" stop-color="#ff00c6"/><stop offset="0.9175" stop-color="#ff00ae"/><stop offset="1" stop-color="#ff009a"/></linearGradient><linearGradient id="u124" gradientUnits="userSpaceOnUse" x1="1109" x2="1505"><stop offset="0" stop-color="#0040ff"/><stop offset="0.2197" stop-color="#0125ff"/><stop offset="0.4924" stop-color="#8600ff"/><stop offset="0.7222" stop-color="#f0f"/><stop offset="0.7803" stop-color="#ff00e2"/><stop offset="0.846" stop-color="#ff00c8"/><stop offset="1" stop-color="#ff009c"/></linearGradient><linearGradient id="u125" gradientUnits="userSpaceOnUse" x1="1110" x2="1503"><stop offset="0" stop-color="#003eff"/><stop offset="0.2188" stop-color="#0024ff"/><stop offset="0.4885" stop-color="#8100ff"/><stop offset="0.7303" stop-color="#f0f"/><stop offset="0.7863" stop-color="#ff00e4"/><stop offset="0.8499" stop-color="#ff00ca"/><stop offset="1" stop-color="#ff009f"/></linearGradient><linearGradient id="u126" gradientUnits="userSpaceOnUse" x1="1111" x2="1501"><stop offset="0" stop-color="#003dff"/><stop offset="0.2179" stop-color="#0023ff"/><stop offset="0.4846" stop-color="#7d00ff"/><stop offset="0.7385" stop-color="#f0f"/><stop offset="0.7949" stop-color="#ff00e4"/><stop offset="0.8564" stop-color="#f0c"/><stop offset="1" stop-color="#ff00a2"/></linearGradient><linearGradient id="u127" gradientUnits="userSpaceOnUse" x1="1112" x2="1499"><stop offset="0" stop-color="#003bff"/><stop offset="0.2196" stop-color="#0121ff"/><stop offset="0.4806" stop-color="#7900ff"/><stop offset="0.7468" stop-color="#f0f"/><stop offset="0.8605" stop-color="#ff00ce"/><stop offset="1" stop-color="#ff00a5"/></linearGradient><linearGradient id="u128" gradientUnits="userSpaceOnUse" x1="1113" x2="1497"><stop offset="0" stop-color="#003aff"/><stop offset="0.2188" stop-color="#0020ff"/><stop offset="0.4766" stop-color="#7500ff"/><stop offset="0.7552" stop-color="#f0f"/><stop offset="0.8672" stop-color="#ff00cf"/><stop offset="1" stop-color="#ff00a8"/></linearGradient><linearGradient id="u129" gradientUnits="userSpaceOnUse" x1="1115" x2="1495"><stop offset="0" stop-color="#0038ff"/><stop offset="0.2158" stop-color="#001fff"/><stop offset="0.4711" stop-color="#7100ff"/><stop offset="0.7632" stop-color="#f0f"/><stop offset="0.8711" stop-color="#ff00d2"/><stop offset="1" stop-color="#ff00ab"/></linearGradient><linearGradient id="u130" gradientUnits="userSpaceOnUse" x1="1116" x2="1493"><stop offset="0" stop-color="#0037ff"/><stop offset="0.2175" stop-color="#011eff"/><stop offset="0.4668" stop-color="#6e00ff"/><stop offset="0.7719" stop-color="#f0f"/><stop offset="0.878" stop-color="#ff00d3"/><stop offset="1" stop-color="#ff00af"/></linearGradient><linearGradient id="u131" gradientUnits="userSpaceOnUse" x1="1117" x2="1491"><stop offset="0" stop-color="#0036ff"/><stop offset="0.2166" stop-color="#001dff"/><stop offset="0.4626" stop-color="#6a00ff"/><stop offset="0.7807" stop-color="#fe00ff"/><stop offset="0.8824" stop-color="#ff00d5"/><stop offset="1" stop-color="#ff00b2"/></linearGradient><linearGradient id="u132" gradientUnits="userSpaceOnUse" x1="1118" x2="1489"><stop offset="0" stop-color="#0034ff"/><stop offset="0.2156" stop-color="#001cff"/><stop offset="0.4582" stop-color="#60f"/><stop offset="0.7898" stop-color="#fe00ff"/><stop offset="0.8895" stop-color="#ff00d6"/><stop offset="1" stop-color="#ff00b5"/></linearGradient><linearGradient id="u133" gradientUnits="userSpaceOnUse" x1="1120" x2="1487"><stop offset="0" stop-color="#03f"/><stop offset="0.2153" stop-color="#011bff"/><stop offset="0.4523" stop-color="#6300ff"/><stop offset="0.7984" stop-color="#fe00ff"/><stop offset="0.8937" stop-color="#ff00d9"/><stop offset="1" stop-color="#ff00b8"/></linearGradient><linearGradient id="u134" gradientUnits="userSpaceOnUse" x1="1121" x2="1485"><stop offset="0" stop-color="#0031ff"/><stop offset="0.2143" stop-color="#001aff"/><stop offset="0.4478" stop-color="#5f00ff"/><stop offset="0.8077" stop-color="#fe00ff"/><stop offset="0.9011" stop-color="#ff00da"/><stop offset="1" stop-color="#ff00bc"/></linearGradient><linearGradient id="u135" gradientUnits="userSpaceOnUse" x1="1122" x2="1483"><stop offset="0" stop-color="#0030ff"/><stop offset="0.2133" stop-color="#001aff"/><stop offset="0.4432" stop-color="#5c00ff"/><stop offset="0.8172" stop-color="#fe00ff"/><stop offset="0.9086" stop-color="#ff00db"/><stop offset="1" stop-color="#ff00bf"/></linearGradient><linearGradient id="u136" gradientUnits="userSpaceOnUse" x1="1123" x2="1481"><stop offset="0" stop-color="#002fff"/><stop offset="0.2151" stop-color="#0118ff"/><stop offset="0.4385" stop-color="#5800ff"/><stop offset="0.8296" stop-color="#f0f"/><stop offset="0.9106" stop-color="#ff00df"/><stop offset="1" stop-color="#ff00c3"/></linearGradient><linearGradient id="u137" gradientUnits="userSpaceOnUse" x1="1125" x2="1479"><stop offset="0" stop-color="#002dff"/><stop offset="0.2119" stop-color="#0018ff"/><stop offset="0.4322" stop-color="#50f"/><stop offset="0.839" stop-color="#f0f"/><stop offset="0.9153" stop-color="#ff00e1"/><stop offset="1" stop-color="#ff00c6"/></linearGradient><linearGradient id="u138" gradientUnits="userSpaceOnUse" x1="1126" x2="1477"><stop offset="0" stop-color="#002cff"/><stop offset="0.2108" stop-color="#0017ff"/><stop offset="0.4274" stop-color="#5200ff"/><stop offset="0.849" stop-color="#f0f"/><stop offset="0.9202" stop-color="#ff00e3"/><stop offset="1" stop-color="#ff00ca"/></linearGradient><linearGradient id="u139" gradientUnits="userSpaceOnUse" x1="1127" x2="1475"><stop offset="0" stop-color="#002bff"/><stop offset="0.2126" stop-color="#0116ff"/><stop offset="0.4224" stop-color="#4f00ff"/><stop offset="0.6437" stop-color="#a500ff"/><stop offset="0.8592" stop-color="#f0f"/><stop offset="1" stop-color="#ff00ce"/></linearGradient><linearGradient id="u140" gradientUnits="userSpaceOnUse" x1="1129" x2="1473"><stop offset="0" stop-color="#0029ff"/><stop offset="0.2093" stop-color="#0015ff"/><stop offset="0.4157" stop-color="#4b00ff"/><stop offset="0.6453" stop-color="#a400ff"/><stop offset="0.8692" stop-color="#f0f"/><stop offset="1" stop-color="#ff00d1"/></linearGradient><linearGradient id="u141" gradientUnits="userSpaceOnUse" x1="1130" x2="1471"><stop offset="0" stop-color="#0028ff"/><stop offset="0.2082" stop-color="#0014ff"/><stop offset="0.4106" stop-color="#4800ff"/><stop offset="0.6481" stop-color="#a200ff"/><stop offset="0.8798" stop-color="#f0f"/><stop offset="1" stop-color="#ff00d5"/></linearGradient><linearGradient id="u142" gradientUnits="userSpaceOnUse" x1="1131" x2="1469"><stop offset="0" stop-color="#0027ff"/><stop offset="0.2101" stop-color="#0113ff"/><stop offset="0.4053" stop-color="#4500ff"/><stop offset="0.6509" stop-color="#a000ff"/><stop offset="0.8905" stop-color="#f0f"/><stop offset="1" stop-color="#ff00d9"/></linearGradient><linearGradient id="u143" gradientUnits="userSpaceOnUse" x1="1132" x2="1467"><stop offset="0" stop-color="#0026ff"/><stop offset="0.209" stop-color="#0012ff"/><stop offset="0.4" stop-color="#4200ff"/><stop offset="0.6537" stop-color="#9f00ff"/><stop offset="0.9015" stop-color="#f0f"/><stop offset="1" stop-color="#f0d"/></linearGradient><linearGradient id="u144" gradientUnits="userSpaceOnUse" x1="1134" x2="1465"><stop offset="0" stop-color="#0025ff"/><stop offset="0.2054" stop-color="#0012ff"/><stop offset="0.3927" stop-color="#3f00ff"/><stop offset="0.6556" stop-color="#9d00ff"/><stop offset="0.9124" stop-color="#f0f"/><stop offset="1" stop-color="#ff00e1"/></linearGradient><linearGradient id="u145" gradientUnits="userSpaceOnUse" x1="1135" x2="1463"><stop offset="0" stop-color="#0023ff"/><stop offset="0.2073" stop-color="#0111ff"/><stop offset="0.3872" stop-color="#3c00ff"/><stop offset="0.6585" stop-color="#9c00ff"/><stop offset="0.9238" stop-color="#fe00ff"/><stop offset="1" stop-color="#ff00e5"/></linearGradient><linearGradient id="u146" gradientUnits="userSpaceOnUse" x1="1136" x2="1461"><stop offset="0" stop-color="#02f"/><stop offset="0.2062" stop-color="#0010ff"/><stop offset="0.3815" stop-color="#3a00ff"/><stop offset="0.6615" stop-color="#9a00ff"/><stop offset="0.9354" stop-color="#fe00ff"/><stop offset="1" stop-color="#ff00e9"/></linearGradient><linearGradient id="u147" gradientUnits="userSpaceOnUse" x1="1138" x2="1459"><stop offset="0" stop-color="#0021ff"/><stop offset="0.2025" stop-color="#000fff"/><stop offset="0.3738" stop-color="#3700ff"/><stop offset="0.6636" stop-color="#9800ff"/><stop offset="0.947" stop-color="#fe00ff"/><stop offset="1" stop-color="#ff00ed"/></linearGradient><linearGradient id="u148" gradientUnits="userSpaceOnUse" x1="1139" x2="1457"><stop offset="0" stop-color="#0020ff"/><stop offset="0.2044" stop-color="#010eff"/><stop offset="0.3679" stop-color="#3400ff"/><stop offset="0.6698" stop-color="#9800ff"/><stop offset="0.9591" stop-color="#fe00ff"/><stop offset="1" stop-color="#ff00f2"/></linearGradient><linearGradient id="u149" gradientUnits="userSpaceOnUse" x1="1140" x2="1455"><stop offset="0" stop-color="#001fff"/><stop offset="0.2032" stop-color="#000eff"/><stop offset="0.3619" stop-color="#3100ff"/><stop offset="0.673" stop-color="#9600ff"/><stop offset="0.9714" stop-color="#fe00ff"/><stop offset="1" stop-color="#ff00f6"/></linearGradient><linearGradient id="u150" gradientUnits="userSpaceOnUse" x1="1142" x2="1453"><stop offset="0" stop-color="#001eff"/><stop offset="0.1994" stop-color="#000dff"/><stop offset="0.3537" stop-color="#2f00ff"/><stop offset="0.6752" stop-color="#9500ff"/><stop offset="0.9839" stop-color="#fe00ff"/><stop offset="1" stop-color="#ff00fa"/></linearGradient><linearGradient id="u151" gradientUnits="userSpaceOnUse" x1="1143" x2="1451"><stop offset="0" stop-color="#001dff"/><stop offset="0.2013" stop-color="#010cff"/><stop offset="0.3474" stop-color="#2c00ff"/><stop offset="0.6753" stop-color="#9200ff"/><stop offset="1" stop-color="#f0f"/></linearGradient><linearGradient id="u152" gradientUnits="userSpaceOnUse" x1="1144" x2="1449"><stop offset="0" stop-color="#001cff"/><stop offset="0.2" stop-color="#000cff"/><stop offset="0.341" stop-color="#2900ff"/><stop offset="0.6754" stop-color="#9000ff"/><stop offset="1" stop-color="#fb00ff"/></linearGradient><linearGradient id="u153" gradientUnits="userSpaceOnUse" x1="1146" x2="1447"><stop offset="0" stop-color="#001aff"/><stop offset="0.196" stop-color="#000bff"/><stop offset="0.3322" stop-color="#2700ff"/><stop offset="0.6711" stop-color="#8d00ff"/><stop offset="1" stop-color="#f600ff"/></linearGradient><linearGradient id="u154" gradientUnits="userSpaceOnUse" x1="1147" x2="1445"><stop offset="0" stop-color="#0019ff"/><stop offset="0.198" stop-color="#010aff"/><stop offset="0.3221" stop-color="#2300ff"/><stop offset="0.6678" stop-color="#8900ff"/><stop offset="1" stop-color="#f200ff"/></linearGradient><linearGradient id="u155" gradientUnits="userSpaceOnUse" x1="1149" x2="1443"><stop offset="0" stop-color="#0018ff"/><stop offset="0.1939" stop-color="#0009ff"/><stop offset="0.3129" stop-color="#2100ff"/><stop offset="0.6633" stop-color="#8600ff"/><stop offset="1" stop-color="#ed00ff"/></linearGradient><linearGradient id="u156" gradientUnits="userSpaceOnUse" x1="1150" x2="1441"><stop offset="0" stop-color="#0017ff"/><stop offset="0.1924" stop-color="#0009ff"/><stop offset="0.3058" stop-color="#1f00ff"/><stop offset="0.6598" stop-color="#8300ff"/><stop offset="1" stop-color="#e900ff"/></linearGradient><linearGradient id="u157" gradientUnits="userSpaceOnUse" x1="1151" x2="1439"><stop offset="0" stop-color="#0016ff"/><stop offset="0.1944" stop-color="#0108ff"/><stop offset="0.2986" stop-color="#1c00ff"/><stop offset="0.6562" stop-color="#7f00ff"/><stop offset="1" stop-color="#e500ff"/></linearGradient><linearGradient id="u158" gradientUnits="userSpaceOnUse" x1="1153" x2="1437"><stop offset="0" stop-color="#0015ff"/><stop offset="0.1901" stop-color="#0007ff"/><stop offset="0.2887" stop-color="#1a00ff"/><stop offset="0.6514" stop-color="#7c00ff"/><stop offset="1" stop-color="#e100ff"/></linearGradient><linearGradient id="u159" gradientUnits="userSpaceOnUse" x1="1154" x2="1435"><stop offset="0" stop-color="#0014ff"/><stop offset="0.1886" stop-color="#0007ff"/><stop offset="0.2811" stop-color="#1800ff"/><stop offset="0.6477" stop-color="#7900ff"/><stop offset="1" stop-color="#d0f"/></linearGradient><linearGradient id="u160" gradientUnits="userSpaceOnUse" x1="1156" x2="1433"><stop offset="0" stop-color="#0013ff"/><stop offset="0.1877" stop-color="#0106ff"/><stop offset="0.2708" stop-color="#1500ff"/><stop offset="0.6426" stop-color="#7600ff"/><stop offset="1" stop-color="#d900ff"/></linearGradient><linearGradient id="u161" gradientUnits="userSpaceOnUse" x1="1157" x2="1431"><stop offset="0" stop-color="#0012ff"/><stop offset="0.1861" stop-color="#0005ff"/><stop offset="0.2628" stop-color="#1300ff"/><stop offset="0.6387" stop-color="#7300ff"/><stop offset="1" stop-color="#d500ff"/></linearGradient><linearGradient id="u162" gradientUnits="userSpaceOnUse" x1="1159" x2="1429"><stop offset="0" stop-color="#01f"/><stop offset="0.1815" stop-color="#0005ff"/><stop offset="0.2519" stop-color="#10f"/><stop offset="0.6333" stop-color="#7000ff"/><stop offset="1" stop-color="#d100ff"/></linearGradient><linearGradient id="u163" gradientUnits="userSpaceOnUse" x1="1160" x2="1427"><stop offset="0" stop-color="#0010ff"/><stop offset="0.1835" stop-color="#0104ff"/><stop offset="0.2434" stop-color="#0f00ff"/><stop offset="0.6292" stop-color="#6d00ff"/><stop offset="1" stop-color="#cd00ff"/></linearGradient><linearGradient id="u164" gradientUnits="userSpaceOnUse" x1="1162" x2="1425"><stop offset="0" stop-color="#000fff"/><stop offset="0.1787" stop-color="#0003ff"/><stop offset="0.2319" stop-color="#0c00ff"/><stop offset="0.597" stop-color="#6300ff"/><stop offset="1" stop-color="#c900ff"/></linearGradient><linearGradient id="u165" gradientUnits="userSpaceOnUse" x1="1163" x2="1423"><stop offset="0" stop-color="#000eff"/><stop offset="0.1769" stop-color="#0003ff"/><stop offset="0.2231" stop-color="#0a00ff"/><stop offset="0.5923" stop-color="#6100ff"/><stop offset="1" stop-color="#c600ff"/></linearGradient><linearGradient id="u166" gradientUnits="userSpaceOnUse" x1="1165" x2="1421"><stop offset="0" stop-color="#000dff"/><stop offset="0.1758" stop-color="#0102ff"/><stop offset="0.5938" stop-color="#6000ff"/><stop offset="1" stop-color="#c200ff"/></linearGradient><linearGradient id="u167" gradientUnits="userSpaceOnUse" x1="1166" x2="1419"><stop offset="0" stop-color="#000cff"/><stop offset="0.1739" stop-color="#0002ff"/><stop offset="0.5929" stop-color="#5e00ff"/><stop offset="1" stop-color="#bf00ff"/></linearGradient><linearGradient id="u168" gradientUnits="userSpaceOnUse" x1="1168" x2="1417"><stop offset="0" stop-color="#000bff"/><stop offset="0.1687" stop-color="#0001ff"/><stop offset="0.5904" stop-color="#5c00ff"/><stop offset="1" stop-color="#b0f"/></linearGradient><linearGradient id="u169" gradientUnits="userSpaceOnUse" x1="1169" x2="1415"><stop offset="0" stop-color="#000bff"/><stop offset="0.1707" stop-color="#0100ff"/><stop offset="0.5935" stop-color="#5b00ff"/><stop offset="1" stop-color="#b800ff"/></linearGradient><linearGradient id="u170" gradientUnits="userSpaceOnUse" x1="1171" x2="1413"><stop offset="0" stop-color="#000aff"/><stop offset="0.1653" stop-color="#00f"/><stop offset="0.5909" stop-color="#5900ff"/><stop offset="1" stop-color="#b400ff"/></linearGradient><linearGradient id="u171" gradientUnits="userSpaceOnUse" x1="1172" x2="1411"><stop offset="0" stop-color="#0009ff"/><stop offset="0.1632" stop-color="#00f"/><stop offset="0.5858" stop-color="#5700ff"/><stop offset="1" stop-color="#b100ff"/></linearGradient><linearGradient id="u172" gradientUnits="userSpaceOnUse" x1="1174" x2="1409"><stop offset="0" stop-color="#0008ff"/><stop offset="0.1617" stop-color="#00f"/><stop offset="1" stop-color="#ad00ff"/></linearGradient><linearGradient id="u173" gradientUnits="userSpaceOnUse" x1="1175" x2="1407"><stop offset="0" stop-color="#0007ff"/><stop offset="0.1595" stop-color="#00f"/><stop offset="1" stop-color="#a0f"/></linearGradient><linearGradient id="u174" gradientUnits="userSpaceOnUse" x1="1177" x2="1405"><stop offset="0" stop-color="#0006ff"/><stop offset="0.1535" stop-color="#00f"/><stop offset="1" stop-color="#a700ff"/></linearGradient><linearGradient id="u175" gradientUnits="userSpaceOnUse" x1="1179" x2="1403"><stop offset="0" stop-color="#0005ff"/><stop offset="0.1518" stop-color="#00f"/><stop offset="1" stop-color="#a400ff"/></linearGradient><linearGradient id="u176" gradientUnits="userSpaceOnUse" x1="1180" x2="1401"><stop offset="0" stop-color="#0004ff"/><stop offset="0.1493" stop-color="#00f"/><stop offset="1" stop-color="#a100ff"/></linearGradient><linearGradient id="u177" gradientUnits="userSpaceOnUse" x1="1182" x2="1399"><stop offset="0" stop-color="#0003ff"/><stop offset="0.1429" stop-color="#00f"/><stop offset="1" stop-color="#9e00ff"/></linearGradient><linearGradient id="u178" gradientUnits="userSpaceOnUse" x1="1184" x2="1397"><stop offset="0" stop-color="#0002ff"/><stop offset="0.1408" stop-color="#00f"/><stop offset="1" stop-color="#9a00ff"/></linearGradient><linearGradient id="u179" gradientUnits="userSpaceOnUse" x1="1185" x2="1395"><stop offset="0" stop-color="#0002ff"/><stop offset="0.1381" stop-color="#00f"/><stop offset="1" stop-color="#9700ff"/></linearGradient><linearGradient id="u180" gradientUnits="userSpaceOnUse" x1="1187" x2="1393"><stop offset="0" stop-color="#0001ff"/><stop offset="0.1311" stop-color="#00f"/><stop offset="1" stop-color="#9400ff"/></linearGradient><linearGradient id="u181" gradientUnits="userSpaceOnUse" x1="1189" x2="1391"><stop offset="0" stop-color="#00f"/><stop offset="0.1287" stop-color="#00f"/><stop offset="1" stop-color="#9200ff"/></linearGradient><linearGradient id="u182" gradientUnits="userSpaceOnUse" x1="1190" x2="1389"><stop offset="0" stop-color="#00f"/><stop offset="0.1256" stop-color="#00f"/><stop offset="1" stop-color="#8f00ff"/></linearGradient><linearGradient id="u183" gradientUnits="userSpaceOnUse" x1="1192" x2="1387"><stop offset="0" stop-color="#00f"/><stop offset="0.1231" stop-color="#0100ff"/><stop offset="1" stop-color="#8c00ff"/></linearGradient><linearGradient id="u184" gradientUnits="userSpaceOnUse" x1="1194" x2="1385"><stop offset="0" stop-color="#00f"/><stop offset="0.1152" stop-color="#00f"/><stop offset="1" stop-color="#8900ff"/></linearGradient><linearGradient id="u185" gradientUnits="userSpaceOnUse" x1="1196" x2="1383"><stop offset="0" stop-color="#00f"/><stop offset="0.107" stop-color="#00f"/><stop offset="1" stop-color="#8600ff"/></linearGradient><linearGradient id="u186" gradientUnits="userSpaceOnUse" x1="1197" x2="1381"><stop offset="0" stop-color="#00f"/><stop offset="0.1087" stop-color="#0100ff"/><stop offset="1" stop-color="#8300ff"/></linearGradient><linearGradient id="u187" gradientUnits="userSpaceOnUse" x1="1199" x2="1379"><stop offset="0" stop-color="#00f"/><stop offset="0.1" stop-color="#00f"/><stop offset="1" stop-color="#8100ff"/></linearGradient><linearGradient id="u188" gradientUnits="userSpaceOnUse" x1="1201" x2="1377"><stop offset="0" stop-color="#00f"/><stop offset="0.0909" stop-color="#00f"/><stop offset="1" stop-color="#7e00ff"/></linearGradient><linearGradient id="u189" gradientUnits="userSpaceOnUse" x1="1203" x2="1375"><stop offset="0" stop-color="#00f"/><stop offset="0.0872" stop-color="#0100ff"/><stop offset="1" stop-color="#7b00ff"/></linearGradient><linearGradient id="u190" gradientUnits="userSpaceOnUse" x1="1205" x2="1373"><stop offset="0" stop-color="#00f"/><stop offset="0.0774" stop-color="#00f"/><stop offset="1" stop-color="#7900ff"/></linearGradient><linearGradient id="u191" gradientUnits="userSpaceOnUse" x1="1207" x2="1371"><stop offset="0" stop-color="#00f"/><stop offset="0.0671" stop-color="#00f"/><stop offset="1" stop-color="#7600ff"/></linearGradient><linearGradient id="u192" gradientUnits="userSpaceOnUse" x1="1209" x2="1369"><stop offset="0" stop-color="#00f"/><stop offset="0.0625" stop-color="#0100ff"/><stop offset="1" stop-color="#7400ff"/></linearGradient><linearGradient id="u193" gradientUnits="userSpaceOnUse" x1="1211" x2="1366"><stop offset="0" stop-color="#00f"/><stop offset="0.0516" stop-color="#00f"/><stop offset="1" stop-color="#7000ff"/></linearGradient><linearGradient id="u194" gradientUnits="userSpaceOnUse" x1="1213" x2="1364"><stop offset="0" stop-color="#00f"/><stop offset="0.0397" stop-color="#00f"/><stop offset="1" stop-color="#6e00ff"/></linearGradient><linearGradient id="u195" gradientUnits="userSpaceOnUse" x1="1215" x2="1362"><stop offset="0" stop-color="#00f"/><stop offset="0.1361" stop-color="#0c00ff"/><stop offset="1" stop-color="#6c00ff"/></linearGradient><linearGradient id="u196" gradientUnits="userSpaceOnUse" x1="1217" x2="1360"><stop offset="0" stop-color="#00f"/><stop offset="1" stop-color="#6900ff"/></linearGradient><linearGradient id="u197" gradientUnits="userSpaceOnUse" x1="1219" x2="1358"><stop offset="0" stop-color="#00f"/><stop offset="1" stop-color="#6700ff"/></linearGradient><linearGradient id="u198" gradientUnits="userSpaceOnUse" x1="1221" x2="1356"><stop offset="0" stop-color="#0100ff"/><stop offset="1" stop-color="#6400ff"/></linearGradient><linearGradient id="u199" gradientUnits="userSpaceOnUse" x1="1223" x2="1354"><stop offset="0" stop-color="#0200ff"/><stop offset="1" stop-color="#6200ff"/></linearGradient><linearGradient id="u200" gradientUnits="userSpaceOnUse" x1="1225" x2="1352"><stop offset="0" stop-color="#0300ff"/><stop offset="1" stop-color="#6000ff"/></linearGradient><linearGradient id="u201" gradientUnits="userSpaceOnUse" x1="1228" x2="1350"><stop offset="0" stop-color="#0500ff"/><stop offset="1" stop-color="#5e00ff"/></linearGradient><linearGradient id="u202" gradientUnits="userSpaceOnUse" x1="1230" x2="1348"><stop offset="0" stop-color="#0600ff"/><stop offset="1" stop-color="#5b00ff"/></linearGradient><linearGradient id="u203" gradientUnits="userSpaceOnUse" x1="1232" x2="1346"><stop offset="0" stop-color="#0700ff"/><stop offset="1" stop-color="#5900ff"/></linearGradient><linearGradient id="u204" gradientUnits="userSpaceOnUse" x1="1234" x2="1344"><stop offset="0" stop-color="#0800ff"/><stop offset="1" stop-color="#5700ff"/></linearGradient><linearGradient id="u205" gradientUnits="userSpaceOnUse" x1="1237" x2="1342"><stop offset="0" stop-color="#0a00ff"/><stop offset="1" stop-color="#50f"/></linearGradient><linearGradient id="u206" gradientUnits="userSpaceOnUse" x1="1239" x2="1340"><stop offset="0" stop-color="#0b00ff"/><stop offset="1" stop-color="#5300ff"/></linearGradient><linearGradient id="u207" gradientUnits="userSpaceOnUse" x1="1242" x2="1338"><stop offset="0" stop-color="#0d00ff"/><stop offset="1" stop-color="#5000ff"/></linearGradient><linearGradient id="u208" gradientUnits="userSpaceOnUse" x1="1244" x2="1336"><stop offset="0" stop-color="#0e00ff"/><stop offset="1" stop-color="#4e00ff"/></linearGradient><linearGradient id="u209" gradientUnits="userSpaceOnUse" x1="1247" x2="1334"><stop offset="0" stop-color="#1000ff"/><stop offset="1" stop-color="#4c00ff"/></linearGradient><linearGradient id="u210" gradientUnits="userSpaceOnUse" x1="1249" x2="1332"><stop offset="0" stop-color="#10f"/><stop offset="1" stop-color="#4a00ff"/></linearGradient><linearGradient id="u211" gradientUnits="userSpaceOnUse" x1="1252" x2="1330"><stop offset="0" stop-color="#1300ff"/><stop offset="1" stop-color="#4800ff"/></linearGradient><linearGradient id="u212" gradientUnits="userSpaceOnUse" x1="1254" x2="1328"><stop offset="0" stop-color="#1400ff"/><stop offset="1" stop-color="#4600ff"/></linearGradient><linearGradient id="u213" gradientUnits="userSpaceOnUse" x1="1257" x2="1326"><stop offset="0" stop-color="#1500ff"/><stop offset="1" stop-color="#40f"/></linearGradient><linearGradient id="u214" gradientUnits="userSpaceOnUse" x1="1259" x2="1324"><stop offset="0" stop-color="#1600ff"/><stop offset="1" stop-color="#4200ff"/></linearGradient><linearGradient id="u215" gradientUnits="userSpaceOnUse" x1="1262" x2="1322"><stop offset="0" stop-color="#1800ff"/><stop offset="1" stop-color="#4000ff"/></linearGradient><linearGradient id="u216" gradientUnits="userSpaceOnUse" x1="1264" x2="1320"><stop offset="0" stop-color="#1900ff"/><stop offset="1" stop-color="#3f00ff"/></linearGradient><linearGradient id="u217" gradientUnits="userSpaceOnUse" x1="1267" x2="1318"><stop offset="0" stop-color="#1b00ff"/><stop offset="1" stop-color="#3d00ff"/></linearGradient><linearGradient id="u218" gradientUnits="userSpaceOnUse" x1="1269" x2="1316"><stop offset="0" stop-color="#1c00ff"/><stop offset="1" stop-color="#3b00ff"/></linearGradient><linearGradient id="u219" gradientUnits="userSpaceOnUse" x1="1272" x2="1314"><stop offset="0" stop-color="#1d00ff"/><stop offset="1" stop-color="#3900ff"/></linearGradient><linearGradient id="u220" gradientUnits="userSpaceOnUse" x1="1274" x2="1312"><stop offset="0" stop-color="#1e00ff"/><stop offset="1" stop-color="#3700ff"/></linearGradient><linearGradient id="u221" gradientUnits="userSpaceOnUse" x1="1276" x2="1310"><stop offset="0" stop-color="#1f00ff"/><stop offset="1" stop-color="#3500ff"/></linearGradient><linearGradient id="u222" gradientUnits="userSpaceOnUse" x1="1279" x2="1308"><stop offset="0" stop-color="#2100ff"/><stop offset="1" stop-color="#3400ff"/></linearGradient><linearGradient id="u223" gradientUnits="userSpaceOnUse" x1="1281" x2="1306"><stop offset="0" stop-color="#20f"/><stop offset="1" stop-color="#3200ff"/></linearGradient><linearGradient id="u224" gradientUnits="userSpaceOnUse" x1="1284" x2="1304"><stop offset="0" stop-color="#2300ff"/><stop offset="1" stop-color="#3000ff"/></linearGradient><linearGradient id="u225" gradientUnits="userSpaceOnUse" x1="1287" x2="1302"><stop offset="0" stop-color="#2500ff"/><stop offset="1" stop-color="#2e00ff"/></linearGradient><linearGradient id="u226" gradientUnits="userSpaceOnUse" x1="1289" x2="1300"><stop offset="0" stop-color="#2600ff"/><stop offset="1" stop-color="#2d00ff"/></linearGradient><clipPath id="cpPlot"><rect x="1024.4" y="79.5" width="638.4" height="475.4"/></clipPath><clipPath id="cpLocus"><path d="M1297.5 542.3L1297.4 542.3L1297.3 542.3L1297.2 542.3L1297.1 542.4L1297.0 542.4L1296.8 542.4L1296.6 542.4L1296.5 542.5L1296.4 542.7L1296.3 542.8L1296.1 542.8L1295.9 542.8L1295.6 542.8L1295.2 542.8L1294.9 542.8L1294.6 542.8L1294.2 542.7L1293.8 542.6L1293.3 542.4L1292.5 542.0L1291.5 541.4L1290.4 540.7L1289.1 539.8L1287.7 538.7L1286.0 537.4L1284.0 536.0L1281.8 534.3L1279.4 532.3L1276.8 530.1L1273.9 527.7L1270.7 525.1L1267.2 522.3L1263.2 519.1L1258.9 515.6L1254.1 511.8L1248.9 507.6L1243.4 503.1L1237.3 498.1L1230.8 492.5L1223.8 486.2L1216.3 479.3L1208.3 471.2L1199.2 461.4L1188.8 449.4L1177.4 435.5L1165.3 419.9L1152.6 402.5L1139.3 383.2L1125.8 362.3L1112.1 340.4L1098.6 317.8L1085.6 294.8L1073.6 271.9L1063.1 249.7L1053.9 228.5L1045.9 208.7L1039.3 190.7L1034.1 174.5L1030.3 160.4L1027.6 148.0L1026.0 137.3L1025.4 128.2L1025.7 120.3L1026.8 113.5L1028.8 107.7L1031.6 102.9L1035.0 98.9L1039.1 95.9L1043.6 93.6L1048.5 92.0L1053.8 90.9L1059.4 90.2L1065.2 89.8L1071.2 89.6L1077.2 89.5L1083.3 89.5L1089.3 89.6L1095.5 89.8L1101.8 90.1L1108.3 90.4L1114.9 90.8L1121.8 91.3L1128.9 91.9L1136.3 92.5L1143.9 93.2L1151.9 94.0L1160.1 94.8L1168.7 95.7L1177.6 96.6L1187.0 97.6L1196.7 98.6L1206.8 99.7L1217.3 100.9L1228.2 102.1L1239.6 103.3L1251.5 104.6L1263.8 106.0L1276.5 107.4L1289.7 108.9L1303.3 110.4L1317.3 112.0L1331.7 113.6L1346.5 115.2L1361.6 116.9L1376.9 118.6L1392.5 120.3L1408.2 122.1L1423.6 123.8L1438.7 125.5L1453.6 127.2L1468.6 128.8L1483.2 130.5L1497.3 132.0L1510.7 133.5L1523.5 134.9L1535.8 136.3L1547.3 137.6L1558.2 138.8L1568.4 139.9L1577.9 141.0L1586.8 142.0L1595.0 142.9L1602.7 143.7L1609.8 144.5L1616.6 145.3L1623.0 146.0L1629.0 146.7L1634.7 147.3L1639.9 147.9L1644.8 148.4L1649.3 149.0L1653.5 149.4L1657.2 149.8L1660.5 150.2L1663.4 150.5L1666.1 150.8L1668.6 151.1L1670.7 151.3L1672.7 151.6L1674.4 151.7L1675.8 151.9L1677.0 152.0L1678.1 152.2L1679.1 152.3L1680.1 152.4L1681.0 152.5L1681.8 152.6L1682.5 152.7L1683.4 152.7L1684.1 152.8L1684.9 152.9L1685.6 153.0L1686.2 153.1L1686.6 153.1L1686.9 153.1L1687.2 153.2L1687.4 153.2L1687.6 153.2L1687.7 153.2L1687.8 153.2Z"/></clipPath><linearGradient id="gR" x1="0" y1="0" x2="0" y2="1"><stop offset="0" stop-color="#ff5a5a"/><stop offset="0.3" stop-color="#ff0202"/><stop offset="0.55" stop-color="#f00808"/><stop offset="1" stop-color="#780000"/></linearGradient><linearGradient id="gG" x1="0" y1="0" x2="0" y2="1"><stop offset="0" stop-color="#0a980a"/><stop offset="0.4" stop-color="#008200"/><stop offset="1" stop-color="#005c00"/></linearGradient><linearGradient id="gB" x1="0" y1="0" x2="0" y2="1"><stop offset="0" stop-color="#5050ff"/><stop offset="0.3" stop-color="#0404ff"/><stop offset="0.55" stop-color="#0000f0"/><stop offset="1" stop-color="#000078"/></linearGradient><linearGradient id="x0" gradientUnits="userSpaceOnUse" x1="642" x2="984"><stop offset="0" stop-color="#86ffcf"/><stop offset="0.4035" stop-color="#c1ffcd"/><stop offset="0.7836" stop-color="#ffffca"/><stop offset="1" stop-color="#ffdeaf"/></linearGradient><linearGradient id="x1" gradientUnits="userSpaceOnUse" x1="642" x2="984"><stop offset="0" stop-color="#87ffd0"/><stop offset="0.4006" stop-color="#c2ffce"/><stop offset="0.7778" stop-color="#ffffcb"/><stop offset="1" stop-color="#ffddaf"/></linearGradient><linearGradient id="x2" gradientUnits="userSpaceOnUse" x1="642" x2="984"><stop offset="0" stop-color="#88ffd1"/><stop offset="0.3947" stop-color="#c1ffcf"/><stop offset="0.7719" stop-color="#ffc"/><stop offset="1" stop-color="#ffdcaf"/></linearGradient><linearGradient id="x3" gradientUnits="userSpaceOnUse" x1="642" x2="984"><stop offset="0" stop-color="#88ffd2"/><stop offset="0.3918" stop-color="#c2ffd0"/><stop offset="0.7661" stop-color="#ffffcd"/><stop offset="1" stop-color="#ffdbaf"/></linearGradient><linearGradient id="x4" gradientUnits="userSpaceOnUse" x1="642" x2="984"><stop offset="0" stop-color="#89ffd3"/><stop offset="0.3889" stop-color="#c2ffd1"/><stop offset="0.7602" stop-color="#ffffce"/><stop offset="1" stop-color="#ffdaaf"/></linearGradient><linearGradient id="x5" gradientUnits="userSpaceOnUse" x1="642" x2="984"><stop offset="0" stop-color="#8affd4"/><stop offset="0.386" stop-color="#c3ffd2"/><stop offset="0.7544" stop-color="#ffffcf"/><stop offset="1" stop-color="#ffd9af"/></linearGradient><linearGradient id="x6" gradientUnits="userSpaceOnUse" x1="642" x2="984"><stop offset="0" stop-color="#8affd5"/><stop offset="0.3801" stop-color="#c3ffd3"/><stop offset="0.7485" stop-color="#ffffd0"/><stop offset="1" stop-color="#ffd9b0"/></linearGradient><linearGradient id="x7" gradientUnits="userSpaceOnUse" x1="642" x2="984"><stop offset="0" stop-color="#8bffd6"/><stop offset="0.3772" stop-color="#c3ffd4"/><stop offset="0.7427" stop-color="#ffffd1"/><stop offset="1" stop-color="#ffd8b0"/></linearGradient><linearGradient id="x8" gradientUnits="userSpaceOnUse" x1="642" x2="984"><stop offset="0" stop-color="#8cffd7"/><stop offset="0.3772" stop-color="#c4ffd5"/><stop offset="0.7339" stop-color="#ffffd3"/><stop offset="1" stop-color="#ffd7b0"/></linearGradient><linearGradient id="x9" gradientUnits="userSpaceOnUse" x1="642" x2="984"><stop offset="0" stop-color="#8cffd8"/><stop offset="0.3743" stop-color="#c4ffd6"/><stop offset="0.7281" stop-color="#ffffd4"/><stop offset="1" stop-color="#ffd6b0"/></linearGradient><linearGradient id="x10" gradientUnits="userSpaceOnUse" x1="642" x2="984"><stop offset="0" stop-color="#8dffd8"/><stop offset="0.3713" stop-color="#c5ffd7"/><stop offset="0.7222" stop-color="#ffffd5"/><stop offset="1" stop-color="#ffd5b0"/></linearGradient><linearGradient id="x11" gradientUnits="userSpaceOnUse" x1="642" x2="984"><stop offset="0" stop-color="#8effd9"/><stop offset="0.3684" stop-color="#c5ffd8"/><stop offset="0.7164" stop-color="#ffffd6"/><stop offset="1" stop-color="#ffd4b0"/></linearGradient><linearGradient id="x12" gradientUnits="userSpaceOnUse" x1="642" x2="984"><stop offset="0" stop-color="#8effda"/><stop offset="0.3626" stop-color="#c5ffd9"/><stop offset="0.7105" stop-color="#ffffd7"/><stop offset="1" stop-color="#ffd3b1"/></linearGradient><linearGradient id="x13" gradientUnits="userSpaceOnUse" x1="642" x2="984"><stop offset="0" stop-color="#8fffdb"/><stop offset="0.3596" stop-color="#c5ffda"/><stop offset="0.7047" stop-color="#ffffd8"/><stop offset="1" stop-color="#ffd2b1"/></linearGradient><linearGradient id="x14" gradientUnits="userSpaceOnUse" x1="642" x2="984"><stop offset="0" stop-color="#90ffdc"/><stop offset="0.3567" stop-color="#c6ffdb"/><stop offset="0.6988" stop-color="#ffffd9"/><stop offset="1" stop-color="#ffd2b1"/></linearGradient><linearGradient id="x15" gradientUnits="userSpaceOnUse" x1="642" x2="984"><stop offset="0" stop-color="#90ffdd"/><stop offset="0.3538" stop-color="#c6ffdc"/><stop offset="0.693" stop-color="#ffffda"/><stop offset="1" stop-color="#ffd1b1"/></linearGradient><linearGradient id="x16" gradientUnits="userSpaceOnUse" x1="642" x2="984"><stop offset="0" stop-color="#91ffde"/><stop offset="0.3509" stop-color="#c7ffdd"/><stop offset="0.6871" stop-color="#ffffdb"/><stop offset="1" stop-color="#ffd0b1"/></linearGradient><linearGradient id="x17" gradientUnits="userSpaceOnUse" x1="642" x2="984"><stop offset="0" stop-color="#92ffdf"/><stop offset="0.348" stop-color="#c7ffde"/><stop offset="0.6813" stop-color="#ffffdc"/><stop offset="1" stop-color="#ffcfb2"/></linearGradient><linearGradient id="x18" gradientUnits="userSpaceOnUse" x1="642" x2="984"><stop offset="0" stop-color="#92ffe0"/><stop offset="0.345" stop-color="#c7ffdf"/><stop offset="0.6754" stop-color="#ffd"/><stop offset="1" stop-color="#ffceb2"/></linearGradient><linearGradient id="x19" gradientUnits="userSpaceOnUse" x1="642" x2="984"><stop offset="0" stop-color="#93ffe1"/><stop offset="0.3392" stop-color="#c7ffe0"/><stop offset="0.6696" stop-color="#ffffde"/><stop offset="0.8275" stop-color="#ffe5c7"/><stop offset="1" stop-color="#ffcdb2"/></linearGradient><linearGradient id="x20" gradientUnits="userSpaceOnUse" x1="642" x2="984"><stop offset="0" stop-color="#94ffe2"/><stop offset="0.3363" stop-color="#c8ffe1"/><stop offset="0.6637" stop-color="#ffffdf"/><stop offset="0.8246" stop-color="#ffe5c8"/><stop offset="1" stop-color="#ffcdb2"/></linearGradient><linearGradient id="x21" gradientUnits="userSpaceOnUse" x1="642" x2="984"><stop offset="0" stop-color="#95ffe3"/><stop offset="0.3304" stop-color="#c8ffe2"/><stop offset="0.6579" stop-color="#ffffe0"/><stop offset="0.8216" stop-color="#ffe4c8"/><stop offset="1" stop-color="#ffccb2"/></linearGradient><linearGradient id="x22" gradientUnits="userSpaceOnUse" x1="642" x2="984"><stop offset="0" stop-color="#95ffe4"/><stop offset="0.3275" stop-color="#c8ffe3"/><stop offset="0.652" stop-color="#ffffe2"/><stop offset="0.8187" stop-color="#ffe4c9"/><stop offset="1" stop-color="#ffcbb2"/></linearGradient><linearGradient id="x23" gradientUnits="userSpaceOnUse" x1="642" x2="984"><stop offset="0" stop-color="#96ffe5"/><stop offset="0.3304" stop-color="#c9ffe4"/><stop offset="0.6433" stop-color="#ffffe3"/><stop offset="0.8187" stop-color="#ffe3c9"/><stop offset="1" stop-color="#ffcab3"/></linearGradient><linearGradient id="x24" gradientUnits="userSpaceOnUse" x1="642" x2="984"><stop offset="0" stop-color="#97ffe6"/><stop offset="0.3246" stop-color="#c9ffe5"/><stop offset="0.6374" stop-color="#ffffe4"/><stop offset="0.8158" stop-color="#ffe2ca"/><stop offset="1" stop-color="#ffc9b3"/></linearGradient><linearGradient id="x25" gradientUnits="userSpaceOnUse" x1="642" x2="984"><stop offset="0" stop-color="#98ffe7"/><stop offset="0.3216" stop-color="#caffe6"/><stop offset="0.6316" stop-color="#ffffe5"/><stop offset="0.8099" stop-color="#ffe2cb"/><stop offset="1" stop-color="#ffc8b3"/></linearGradient><linearGradient id="x26" gradientUnits="userSpaceOnUse" x1="642" x2="984"><stop offset="0" stop-color="#98ffe8"/><stop offset="0.3187" stop-color="#caffe7"/><stop offset="0.6257" stop-color="#ffffe6"/><stop offset="0.807" stop-color="#ffe2cb"/><stop offset="1" stop-color="#ffc8b3"/></linearGradient><linearGradient id="x27" gradientUnits="userSpaceOnUse" x1="642" x2="984"><stop offset="0" stop-color="#99ffe9"/><stop offset="0.3158" stop-color="#cbffe8"/><stop offset="0.6199" stop-color="#ffffe7"/><stop offset="0.8041" stop-color="#ffe1cc"/><stop offset="1" stop-color="#ffc7b3"/></linearGradient><linearGradient id="x28" gradientUnits="userSpaceOnUse" x1="642" x2="984"><stop offset="0" stop-color="#9affea"/><stop offset="0.3129" stop-color="#cbffe9"/><stop offset="0.614" stop-color="#ffffe8"/><stop offset="0.7982" stop-color="#ffe1cd"/><stop offset="1" stop-color="#ffc6b3"/></linearGradient><linearGradient id="x29" gradientUnits="userSpaceOnUse" x1="642" x2="984"><stop offset="0" stop-color="#9affeb"/><stop offset="0.3099" stop-color="#cbffea"/><stop offset="0.6082" stop-color="#ffffea"/><stop offset="0.7953" stop-color="#ffe0cd"/><stop offset="1" stop-color="#ffc5b4"/></linearGradient><linearGradient id="x30" gradientUnits="userSpaceOnUse" x1="642" x2="984"><stop offset="0" stop-color="#9bffec"/><stop offset="0.307" stop-color="#ccffeb"/><stop offset="0.6023" stop-color="#ffffeb"/><stop offset="0.7924" stop-color="#ffe0ce"/><stop offset="1" stop-color="#ffc4b4"/></linearGradient><linearGradient id="x31" gradientUnits="userSpaceOnUse" x1="642" x2="984"><stop offset="0" stop-color="#9cffed"/><stop offset="0.3041" stop-color="#ccffed"/><stop offset="0.5965" stop-color="#ffffec"/><stop offset="0.7865" stop-color="#ffe0cf"/><stop offset="1" stop-color="#ffc3b4"/></linearGradient><linearGradient id="x32" gradientUnits="userSpaceOnUse" x1="642" x2="984"><stop offset="0" stop-color="#9dffee"/><stop offset="0.2982" stop-color="#cfe"/><stop offset="0.5906" stop-color="#ffffed"/><stop offset="0.7836" stop-color="#ffdfcf"/><stop offset="1" stop-color="#ffc3b4"/></linearGradient><linearGradient id="x33" gradientUnits="userSpaceOnUse" x1="642" x2="984"><stop offset="0" stop-color="#9effef"/><stop offset="0.2953" stop-color="#cdffef"/><stop offset="0.5848" stop-color="#ffe"/><stop offset="0.7807" stop-color="#ffdfd0"/><stop offset="1" stop-color="#ffc2b4"/></linearGradient><linearGradient id="x34" gradientUnits="userSpaceOnUse" x1="642" x2="984"><stop offset="0" stop-color="#9efff0"/><stop offset="0.5789" stop-color="#ffffef"/><stop offset="0.7778" stop-color="#ffded0"/><stop offset="1" stop-color="#ffc1b4"/></linearGradient><linearGradient id="x35" gradientUnits="userSpaceOnUse" x1="642" x2="984"><stop offset="0" stop-color="#9ffff1"/><stop offset="0.5731" stop-color="#fffff0"/><stop offset="0.7749" stop-color="#ffded1"/><stop offset="1" stop-color="#ffc0b5"/></linearGradient><linearGradient id="x36" gradientUnits="userSpaceOnUse" x1="642" x2="984"><stop offset="0" stop-color="#a0fff2"/><stop offset="0.5673" stop-color="#fffff1"/><stop offset="0.7719" stop-color="#ffddd1"/><stop offset="1" stop-color="#ffbfb5"/></linearGradient><linearGradient id="x37" gradientUnits="userSpaceOnUse" x1="642" x2="984"><stop offset="0" stop-color="#a1fff4"/><stop offset="0.5614" stop-color="#fffff3"/><stop offset="0.769" stop-color="#ffddd2"/><stop offset="1" stop-color="#ffbfb5"/></linearGradient><linearGradient id="x38" gradientUnits="userSpaceOnUse" x1="642" x2="984"><stop offset="0" stop-color="#a1fff5"/><stop offset="0.5526" stop-color="#fffff4"/><stop offset="0.7661" stop-color="#ffdcd2"/><stop offset="1" stop-color="#ffbeb5"/></linearGradient><linearGradient id="x39" gradientUnits="userSpaceOnUse" x1="642" x2="984"><stop offset="0" stop-color="#a2fff6"/><stop offset="0.5468" stop-color="#fffff5"/><stop offset="0.7632" stop-color="#ffdcd3"/><stop offset="1" stop-color="#ffbdb5"/></linearGradient><linearGradient id="x40" gradientUnits="userSpaceOnUse" x1="642" x2="984"><stop offset="0" stop-color="#a3fff7"/><stop offset="0.5409" stop-color="#fffff6"/><stop offset="0.7602" stop-color="#ffdbd4"/><stop offset="1" stop-color="#ffbcb5"/></linearGradient><linearGradient id="x41" gradientUnits="userSpaceOnUse" x1="642" x2="984"><stop offset="0" stop-color="#a4fff8"/><stop offset="0.5351" stop-color="#fffff7"/><stop offset="0.7544" stop-color="#ffdbd5"/><stop offset="1" stop-color="#ffbbb5"/></linearGradient><linearGradient id="x42" gradientUnits="userSpaceOnUse" x1="642" x2="984"><stop offset="0" stop-color="#a5fff9"/><stop offset="0.5292" stop-color="#fffff9"/><stop offset="0.7515" stop-color="#ffdbd5"/><stop offset="1" stop-color="#ffbbb6"/></linearGradient><linearGradient id="x43" gradientUnits="userSpaceOnUse" x1="642" x2="984"><stop offset="0" stop-color="#a5fffa"/><stop offset="0.5234" stop-color="#fffffa"/><stop offset="0.7485" stop-color="#ffdad6"/><stop offset="1" stop-color="#ffbab6"/></linearGradient><linearGradient id="x44" gradientUnits="userSpaceOnUse" x1="642" x2="984"><stop offset="0" stop-color="#a6fffb"/><stop offset="0.5175" stop-color="#fffffb"/><stop offset="0.7456" stop-color="#ffdad6"/><stop offset="1" stop-color="#ffb9b6"/></linearGradient><linearGradient id="x45" gradientUnits="userSpaceOnUse" x1="642" x2="984"><stop offset="0" stop-color="#a7fffc"/><stop offset="0.5117" stop-color="#fffffc"/><stop offset="0.7398" stop-color="#ffdad7"/><stop offset="1" stop-color="#ffb8b6"/></linearGradient><linearGradient id="x46" gradientUnits="userSpaceOnUse" x1="642" x2="984"><stop offset="0" stop-color="#a8fffd"/><stop offset="0.5058" stop-color="#fffffd"/><stop offset="0.7368" stop-color="#ffd9d8"/><stop offset="1" stop-color="#ffb7b6"/></linearGradient><linearGradient id="x47" gradientUnits="userSpaceOnUse" x1="642" x2="984"><stop offset="0" stop-color="#a9ffff"/><stop offset="0.5" stop-color="#fff"/><stop offset="0.7339" stop-color="#ffd8d8"/><stop offset="1" stop-color="#ffb7b6"/></linearGradient><linearGradient id="x48" gradientUnits="userSpaceOnUse" x1="642" x2="984"><stop offset="0" stop-color="#a9feff"/><stop offset="0.4971" stop-color="#fffeff"/><stop offset="0.7368" stop-color="#ffd7d8"/><stop offset="1" stop-color="#ffb6b7"/></linearGradient><linearGradient id="x49" gradientUnits="userSpaceOnUse" x1="642" x2="984"><stop offset="0" stop-color="#a9fdff"/><stop offset="0.5" stop-color="#fffdff"/><stop offset="0.7339" stop-color="#ffd7d9"/><stop offset="1" stop-color="#ffb5b7"/></linearGradient><linearGradient id="x50" gradientUnits="userSpaceOnUse" x1="642" x2="984"><stop offset="0" stop-color="#a9fcff"/><stop offset="0.5" stop-color="#fffcff"/><stop offset="0.7339" stop-color="#ffd6d9"/><stop offset="1" stop-color="#ffb4b7"/></linearGradient><linearGradient id="x51" gradientUnits="userSpaceOnUse" x1="642" x2="984"><stop offset="0" stop-color="#a9fbff"/><stop offset="0.5" stop-color="#fffaff"/><stop offset="0.7339" stop-color="#ffd5d9"/><stop offset="1" stop-color="#ffb3b7"/></linearGradient><linearGradient id="x52" gradientUnits="userSpaceOnUse" x1="642" x2="984"><stop offset="0" stop-color="#a9faff"/><stop offset="0.5" stop-color="#fff9ff"/><stop offset="0.7339" stop-color="#ffd4d9"/><stop offset="1" stop-color="#ffb3b7"/></linearGradient><linearGradient id="x53" gradientUnits="userSpaceOnUse" x1="642" x2="984"><stop offset="0" stop-color="#a9f9ff"/><stop offset="0.5" stop-color="#fff8ff"/><stop offset="0.7368" stop-color="#ffd2d9"/><stop offset="1" stop-color="#ffb2b7"/></linearGradient><linearGradient id="x54" gradientUnits="userSpaceOnUse" x1="642" x2="984"><stop offset="0" stop-color="#a9f8ff"/><stop offset="0.5" stop-color="#fff7ff"/><stop offset="0.7368" stop-color="#ffd2d9"/><stop offset="1" stop-color="#ffb1b8"/></linearGradient><linearGradient id="x55" gradientUnits="userSpaceOnUse" x1="642" x2="984"><stop offset="0" stop-color="#a9f7ff"/><stop offset="0.5029" stop-color="#fff5ff"/><stop offset="0.7368" stop-color="#ffd1d9"/><stop offset="1" stop-color="#ffb0b8"/></linearGradient><linearGradient id="x56" gradientUnits="userSpaceOnUse" x1="642" x2="984"><stop offset="0" stop-color="#aaf5ff"/><stop offset="0.5029" stop-color="#fff4ff"/><stop offset="0.7368" stop-color="#ffd0d9"/><stop offset="1" stop-color="#ffb0b8"/></linearGradient><linearGradient id="x57" gradientUnits="userSpaceOnUse" x1="642" x2="984"><stop offset="0" stop-color="#aaf4ff"/><stop offset="0.5029" stop-color="#fff3ff"/><stop offset="0.7368" stop-color="#ffcfd9"/><stop offset="1" stop-color="#ffafb8"/></linearGradient><linearGradient id="x58" gradientUnits="userSpaceOnUse" x1="642" x2="984"><stop offset="0" stop-color="#aaf3ff"/><stop offset="0.5029" stop-color="#fff2ff"/><stop offset="0.7368" stop-color="#ffced9"/><stop offset="1" stop-color="#ffaeb8"/></linearGradient><linearGradient id="x59" gradientUnits="userSpaceOnUse" x1="642" x2="984"><stop offset="0" stop-color="#aaf2ff"/><stop offset="0.5029" stop-color="#fff1ff"/><stop offset="0.7368" stop-color="#ffcdd9"/><stop offset="1" stop-color="#ffadb8"/></linearGradient><linearGradient id="x60" gradientUnits="userSpaceOnUse" x1="642" x2="984"><stop offset="0" stop-color="#aaf1ff"/><stop offset="0.5029" stop-color="#fff0ff"/><stop offset="0.7398" stop-color="#ffccd9"/><stop offset="1" stop-color="#ffacb8"/></linearGradient><linearGradient id="x61" gradientUnits="userSpaceOnUse" x1="642" x2="984"><stop offset="0" stop-color="#aaf0ff"/><stop offset="0.5058" stop-color="#fef"/><stop offset="0.7368" stop-color="#ffcbda"/><stop offset="1" stop-color="#ffacb9"/></linearGradient><linearGradient id="x62" gradientUnits="userSpaceOnUse" x1="642" x2="984"><stop offset="0" stop-color="#aaefff"/><stop offset="0.5058" stop-color="#ffedff"/><stop offset="0.7368" stop-color="#ffcada"/><stop offset="1" stop-color="#ffabb9"/></linearGradient><linearGradient id="x63" gradientUnits="userSpaceOnUse" x1="642" x2="984"><stop offset="0" stop-color="#aef"/><stop offset="0.5058" stop-color="#ffecff"/><stop offset="0.7368" stop-color="#ffc9da"/><stop offset="1" stop-color="#ffaab9"/></linearGradient><linearGradient id="x64" gradientUnits="userSpaceOnUse" x1="642" x2="984"><stop offset="0" stop-color="#aaedff"/><stop offset="0.5058" stop-color="#ffebff"/><stop offset="0.7368" stop-color="#ffc8da"/><stop offset="1" stop-color="#ffa9b9"/></linearGradient><linearGradient id="x65" gradientUnits="userSpaceOnUse" x1="642" x2="984"><stop offset="0" stop-color="#aaecff"/><stop offset="0.5058" stop-color="#ffeaff"/><stop offset="0.7398" stop-color="#ffc7da"/><stop offset="1" stop-color="#ffa9b9"/></linearGradient><linearGradient id="x66" gradientUnits="userSpaceOnUse" x1="642" x2="984"><stop offset="0" stop-color="#aaebff"/><stop offset="0.5058" stop-color="#ffe9ff"/><stop offset="0.7398" stop-color="#ffc6da"/><stop offset="1" stop-color="#ffa8b9"/></linearGradient><linearGradient id="x67" gradientUnits="userSpaceOnUse" x1="642" x2="984"><stop offset="0" stop-color="#aaeaff"/><stop offset="0.5058" stop-color="#ffe8ff"/><stop offset="0.7427" stop-color="#ffc5da"/><stop offset="1" stop-color="#ffa7ba"/></linearGradient><linearGradient id="x68" gradientUnits="userSpaceOnUse" x1="642" x2="984"><stop offset="0" stop-color="#aae9ff"/><stop offset="0.5088" stop-color="#ffe6ff"/><stop offset="0.7398" stop-color="#ffc5da"/><stop offset="1" stop-color="#ffa6ba"/></linearGradient><linearGradient id="x69" gradientUnits="userSpaceOnUse" x1="642" x2="984"><stop offset="0" stop-color="#aae7ff"/><stop offset="0.5088" stop-color="#ffe5ff"/><stop offset="0.7398" stop-color="#ffc4da"/><stop offset="1" stop-color="#ffa6ba"/></linearGradient><linearGradient id="x70" gradientUnits="userSpaceOnUse" x1="642" x2="984"><stop offset="0" stop-color="#abe6ff"/><stop offset="0.5088" stop-color="#ffe4ff"/><stop offset="0.7398" stop-color="#ffc3da"/><stop offset="1" stop-color="#ffa5ba"/></linearGradient><linearGradient id="x71" gradientUnits="userSpaceOnUse" x1="642" x2="984"><stop offset="0" stop-color="#abe5ff"/><stop offset="0.5088" stop-color="#ffe3ff"/><stop offset="0.7398" stop-color="#ffc2db"/><stop offset="1" stop-color="#ffa4ba"/></linearGradient><linearGradient id="x72" gradientUnits="userSpaceOnUse" x1="642" x2="984"><stop offset="0" stop-color="#abe4ff"/><stop offset="0.5088" stop-color="#ffe2ff"/><stop offset="0.7427" stop-color="#ffc1da"/><stop offset="1" stop-color="#ffa3ba"/></linearGradient><linearGradient id="x73" gradientUnits="userSpaceOnUse" x1="642" x2="984"><stop offset="0" stop-color="#abe3ff"/><stop offset="0.5088" stop-color="#ffe1ff"/><stop offset="0.7427" stop-color="#ffc0da"/><stop offset="1" stop-color="#ffa3ba"/></linearGradient><linearGradient id="x74" gradientUnits="userSpaceOnUse" x1="642" x2="984"><stop offset="0" stop-color="#abe2ff"/><stop offset="0.5117" stop-color="#ffe0ff"/><stop offset="0.7427" stop-color="#ffbfda"/><stop offset="1" stop-color="#ffa2bb"/></linearGradient><linearGradient id="x75" gradientUnits="userSpaceOnUse" x1="642" x2="984"><stop offset="0" stop-color="#abe1ff"/><stop offset="0.5117" stop-color="#ffdfff"/><stop offset="0.7427" stop-color="#ffbedb"/><stop offset="1" stop-color="#ffa1bb"/></linearGradient><linearGradient id="x76" gradientUnits="userSpaceOnUse" x1="642" x2="984"><stop offset="0" stop-color="#abe0ff"/><stop offset="0.5117" stop-color="#ffdeff"/><stop offset="0.7427" stop-color="#ffbddb"/><stop offset="1" stop-color="#ffa1bb"/></linearGradient><linearGradient id="x77" gradientUnits="userSpaceOnUse" x1="642" x2="984"><stop offset="0" stop-color="#abdfff"/><stop offset="0.5117" stop-color="#fdf"/><stop offset="0.7427" stop-color="#ffbcdb"/><stop offset="1" stop-color="#ffa0bb"/></linearGradient><linearGradient id="x78" gradientUnits="userSpaceOnUse" x1="642" x2="984"><stop offset="0" stop-color="#abdeff"/><stop offset="0.5117" stop-color="#ffdcff"/><stop offset="0.7427" stop-color="#ffbbdb"/><stop offset="1" stop-color="#ff9fbb"/></linearGradient><linearGradient id="x79" gradientUnits="userSpaceOnUse" x1="642" x2="984"><stop offset="0" stop-color="#abddff"/><stop offset="0.5117" stop-color="#ffdbff"/><stop offset="0.7456" stop-color="#ffbadb"/><stop offset="1" stop-color="#ff9ebb"/></linearGradient><linearGradient id="x80" gradientUnits="userSpaceOnUse" x1="642" x2="984"><stop offset="0" stop-color="#abdcff"/><stop offset="0.5146" stop-color="#ffd9ff"/><stop offset="0.7427" stop-color="#ffbadb"/><stop offset="1" stop-color="#ff9ebb"/></linearGradient><linearGradient id="x81" gradientUnits="userSpaceOnUse" x1="642" x2="984"><stop offset="0" stop-color="#abdbff"/><stop offset="0.5146" stop-color="#ffd8ff"/><stop offset="0.7427" stop-color="#ffb9db"/><stop offset="1" stop-color="#ff9dbc"/></linearGradient><linearGradient id="x82" gradientUnits="userSpaceOnUse" x1="642" x2="984"><stop offset="0" stop-color="#abdaff"/><stop offset="0.5146" stop-color="#ffd7ff"/><stop offset="0.7427" stop-color="#ffb8db"/><stop offset="1" stop-color="#ff9cbc"/></linearGradient><linearGradient id="x83" gradientUnits="userSpaceOnUse" x1="642" x2="984"><stop offset="0" stop-color="#abd9ff"/><stop offset="0.5146" stop-color="#ffd6ff"/><stop offset="0.7427" stop-color="#ffb7dc"/><stop offset="1" stop-color="#ff9bbc"/></linearGradient><linearGradient id="x84" gradientUnits="userSpaceOnUse" x1="642" x2="984"><stop offset="0" stop-color="#abd8ff"/><stop offset="0.5146" stop-color="#ffd5ff"/><stop offset="0.7456" stop-color="#ffb6db"/><stop offset="1" stop-color="#ff9bbc"/></linearGradient><linearGradient id="x85" gradientUnits="userSpaceOnUse" x1="642" x2="984"><stop offset="0" stop-color="#acd7ff"/><stop offset="0.5146" stop-color="#ffd4ff"/><stop offset="0.7456" stop-color="#ffb5db"/><stop offset="1" stop-color="#ff9abc"/></linearGradient><linearGradient id="x86" gradientUnits="userSpaceOnUse" x1="642" x2="984"><stop offset="0" stop-color="#acd6ff"/><stop offset="0.5175" stop-color="#ffd3ff"/><stop offset="0.7456" stop-color="#ffb4dc"/><stop offset="1" stop-color="#ff99bc"/></linearGradient><linearGradient id="x87" gradientUnits="userSpaceOnUse" x1="642" x2="984"><stop offset="0" stop-color="#acd5ff"/><stop offset="0.5175" stop-color="#ffd2ff"/><stop offset="0.7456" stop-color="#ffb3dc"/><stop offset="1" stop-color="#ff99bc"/></linearGradient><linearGradient id="x88" gradientUnits="userSpaceOnUse" x1="642" x2="984"><stop offset="0" stop-color="#acd4ff"/><stop offset="0.5175" stop-color="#ffd1ff"/><stop offset="0.7456" stop-color="#ffb3dc"/><stop offset="1" stop-color="#ff98bd"/></linearGradient><linearGradient id="x89" gradientUnits="userSpaceOnUse" x1="642" x2="984"><stop offset="0" stop-color="#acd3ff"/><stop offset="0.5175" stop-color="#ffd0ff"/><stop offset="0.7456" stop-color="#ffb2dc"/><stop offset="1" stop-color="#ff97bd"/></linearGradient><linearGradient id="x90" gradientUnits="userSpaceOnUse" x1="642" x2="984"><stop offset="0" stop-color="#acd2ff"/><stop offset="0.5175" stop-color="#ffcfff"/><stop offset="0.7456" stop-color="#ffb1dc"/><stop offset="1" stop-color="#ff96bd"/></linearGradient><linearGradient id="x91" gradientUnits="userSpaceOnUse" x1="642" x2="984"><stop offset="0" stop-color="#acd1ff"/><stop offset="0.5175" stop-color="#ffceff"/><stop offset="0.7485" stop-color="#ffb0dc"/><stop offset="1" stop-color="#ff96bd"/></linearGradient><linearGradient id="x92" gradientUnits="userSpaceOnUse" x1="642" x2="984"><stop offset="0" stop-color="#acd0ff"/><stop offset="0.5175" stop-color="#ffcdff"/><stop offset="0.7485" stop-color="#ffafdc"/><stop offset="1" stop-color="#ff95bd"/></linearGradient><linearGradient id="x93" gradientUnits="userSpaceOnUse" x1="642" x2="984"><stop offset="0" stop-color="#accfff"/><stop offset="0.5205" stop-color="#fcf"/><stop offset="0.7456" stop-color="#ffaedc"/><stop offset="1" stop-color="#ff94bd"/></linearGradient><linearGradient id="x94" gradientUnits="userSpaceOnUse" x1="642" x2="984"><stop offset="0" stop-color="#acceff"/><stop offset="0.5205" stop-color="#ffcbff"/><stop offset="0.7456" stop-color="#ffaedc"/><stop offset="1" stop-color="#ff94bd"/></linearGradient><linearGradient id="x95" gradientUnits="userSpaceOnUse" x1="642" x2="984"><stop offset="0" stop-color="#accdff"/><stop offset="0.5205" stop-color="#ffcaff"/><stop offset="0.7456" stop-color="#ffaddd"/><stop offset="1" stop-color="#ff93be"/></linearGradient><linearGradient id="x96" gradientUnits="userSpaceOnUse" x1="642" x2="984"><stop offset="0" stop-color="#accdff"/><stop offset="0.5205" stop-color="#ffc9ff"/><stop offset="0.7485" stop-color="#ffacdc"/><stop offset="1" stop-color="#ff92be"/></linearGradient><clipPath id="cpXY"><rect x="642" y="618" width="342" height="193"/></clipPath><clipPath id="cpTab"><rect x="1001" y="605" width="633.8" height="191"/></clipPath><linearGradient id="gTH" x1="0" y1="0" x2="0" y2="1"><stop offset="0" stop-color="#2e2e2e"/><stop offset="0.47" stop-color="#262626"/><stop offset="0.5" stop-color="#181818"/><stop offset="1" stop-color="#121212"/></linearGradient><linearGradient id="gTL" x1="0" y1="0" x2="0" y2="1"><stop offset="0" stop-color="#303030"/><stop offset="1" stop-color="#242424"/></linearGradient><linearGradient id="gBB" x1="0" y1="0" x2="0" y2="1"><stop offset="0" stop-color="#b2b2b2"/><stop offset="0.12" stop-color="#a4a4a4"/><stop offset="0.55" stop-color="#7c7c7c"/><stop offset="1" stop-color="#585858"/></linearGradient><linearGradient id="gBS" x1="0" y1="0" x2="0" y2="1"><stop offset="0" stop-color="#1e1e1e"/><stop offset="0.12" stop-color="#222"/><stop offset="0.6" stop-color="#2e2e2e"/><stop offset="1" stop-color="#2a2a2a"/></linearGradient><linearGradient id="gCB" x1="0" y1="0" x2="0" y2="1"><stop offset="0" stop-color="#a8a8a8"/><stop offset="1" stop-color="#6a6a6a"/></linearGradient><linearGradient id="gCB2" x1="0" y1="0" x2="0" y2="1"><stop offset="0" stop-color="#8e8e8e"/><stop offset="1" stop-color="#5a5a5a"/></linearGradient><radialGradient id="gKn" cx="0.5" cy="0.3" r="0.65"><stop offset="0" stop-color="#808080"/><stop offset="0.6" stop-color="#8c8c8c"/><stop offset="1" stop-color="#a2a2a2"/></radialGradient><linearGradient id="gKn2" x1="0" y1="0" x2="0" y2="1"><stop offset="0" stop-color="#767676"/><stop offset="0.5" stop-color="#8a8a8a"/><stop offset="1" stop-color="#a4a4a4"/></linearGradient><linearGradient id="gSq" x1="0" y1="0" x2="0" y2="1"><stop offset="0" stop-color="#b4b4b4"/><stop offset="0.49" stop-color="#a0a0a0"/><stop offset="0.5" stop-color="#8a8a8a"/><stop offset="1" stop-color="#969696"/></linearGradient><linearGradient id="gSq2" x1="0" y1="0" x2="0" y2="1"><stop offset="0" stop-color="#202020"/><stop offset="0.5" stop-color="#181818"/><stop offset="0.52" stop-color="#000"/><stop offset="1" stop-color="#000"/></linearGradient><linearGradient id="gCT" x1="0" y1="0" x2="0" y2="1"><stop offset="0" stop-color="#b0b0b0"/><stop offset="1" stop-color="#666"/></linearGradient><linearGradient id="gBN" x1="0" y1="0" x2="0" y2="1"><stop offset="0" stop-color="#b4b4b4"/><stop offset="0.1" stop-color="#a6a6a6"/><stop offset="1" stop-color="#686868"/></linearGradient><filter id="fSoft" x="-10%" y="-20%" width="120%" height="140%"><feGaussianBlur stdDeviation="0.45"/></filter><filter id="fSh" x="-30%" y="-30%" width="170%" height="170%"><feGaussianBlur stdDeviation="1.3"/></filter></defs><rect x="0" y="0" width="1673" height="911" fill="#323232" />
<rect x="0" y="0" width="1673" height="35.5" fill="#242424" />
<rect x="0" y="35" width="1673" height="1" fill="#2c2c2c" />
<rect x="0" y="0" width="5" height="903.5" fill="#525252" />
<rect x="4" y="0" width="1" height="903.5" fill="#5a5a5a" />
<rect x="5" y="36" width="1" height="867.5" fill="#292929" />
<rect x="0" y="903.5" width="1673" height="8" fill="#241f26" />
<rect x="0" y="904.5" width="245" height="7" fill="#3a3a3a" />
<line x1="0" y1="904.5" x2="245" y2="904.5" stroke="#6e6e6e" stroke-width="1" />
<line x1="244.5" y1="904" x2="244.5" y2="911" stroke="#8c8c8c" stroke-width="1" />
<rect x="1113" y="904" width="61" height="7" fill="#58525e" />
<rect x="5" y="0" width="73.5" height="35.5" fill="url(#gTab)" />
<path d="M79 0H116a4 4 0 0 1 4 4V35.5H79Z" fill="url(#gTab)"/>
<line x1="5.5" y1="0" x2="5.5" y2="35.5" stroke="#8c8c8c" stroke-width="1" />
<line x1="78.5" y1="0" x2="78.5" y2="35.5" stroke="#8c8c8c" stroke-width="1" />
<path d="M116 0.5a4 4 0 0 1 4 4V35.5" fill="none" stroke="#8c8c8c"/>
<circle cx="97.4" cy="19" r="11.8" fill="url(#gPlus)"/>
<line x1="93.5" y1="20.5" x2="101.5" y2="20.5" stroke="#9a9a9a" stroke-width="1.2" />
<line x1="97.5" y1="16.5" x2="97.5" y2="24.5" stroke="#9a9a9a" stroke-width="1.2" />
<text x="12.9" y="23" font-size="14" fill="#e4e4e4" textLength="58.2" lengthAdjust="spacingAndGlyphs" >History 1</text>
<path d="M1012 0H1145.5V32a3 3 0 0 1 -3 3H1015a3 3 0 0 1 -3 -3Z" fill="url(#gPan)"/>
<path d="M1012 0H1019.5V35H1015a3 3 0 0 1 -3 -3Z" fill="url(#gGreen)"/>
<text x="1023.3" y="11.8" font-size="13.3" fill="#f4f4f4" textLength="81.5" lengthAdjust="spacingAndGlyphs" stroke="#f4f4f4" stroke-width="0.2">X-Rite i1Pro 2</text>
<text x="1023.3" y="30.5" font-size="13.3" fill="#f4f4f4" textLength="69.3" lengthAdjust="spacingAndGlyphs" stroke="#f4f4f4" stroke-width="0.2">Direct View</text>
<circle cx="1121.5" cy="16.3" r="11.8" fill="url(#gDD)"/>
<path d="M1115.4 14.8h12.2l-6.1 6.5Z" fill="#fff"/>
<path d="M1146.5 0H1191V32a3 3 0 0 1 -3 3H1149.5a3 3 0 0 1 -3 -3Z" fill="url(#gPan)"/>
<line x1="1146" y1="2" x2="1146" y2="35" stroke="#3e3e3e" stroke-width="1" />
<circle cx="1171.7" cy="16.7" r="15.4" fill="#0000e6" stroke="#fff" stroke-width="1.2"/>
<text x="1162.3" y="21" font-size="12" fill="#fff" textLength="18.8" lengthAdjust="spacingAndGlyphs" >230</text>
<path d="M1198 0H1360.5V32a3 3 0 0 1 -3 3H1201a3 3 0 0 1 -3 -3Z" fill="url(#gPan)"/>
<path d="M1198 0H1205.5V35H1201a3 3 0 0 1 -3 -3Z" fill="url(#gGreen)"/>
<text x="1209.4" y="11.8" font-size="13.3" fill="#f4f4f4" textLength="79.2" lengthAdjust="spacingAndGlyphs" stroke="#f4f4f4" stroke-width="0.2">Mobile Forge</text>
<circle cx="1340.7" cy="17.3" r="11.8" fill="url(#gDD)"/>
<path d="M1334.6 15.8h12.2l-6.1 6.5Z" fill="#fff"/>
<path d="M1368 0H1547.5V32a3 3 0 0 1 -3 3H1371a3 3 0 0 1 -3 -3Z" fill="url(#gPan)"/>
<path d="M1368 0H1375.5V35H1371a3 3 0 0 1 -3 -3Z" fill="url(#gYel)"/>
<text x="1379.8" y="11.8" font-size="13.3" fill="#f4f4f4" textLength="130.6" lengthAdjust="spacingAndGlyphs" stroke="#f4f4f4" stroke-width="0.2">Direct Display Control</text>
<circle cx="1527.5" cy="17.3" r="11.8" fill="url(#gDD)"/>
<path d="M1521.4 15.8h12.2l-6.1 6.5Z" fill="#fff"/>
<path d="M1551.5 -2H1593.5V27a5 5 0 0 1 -5 5H1556.5a5 5 0 0 1 -5 -5Z" fill="url(#gBtn)" stroke="#c8c8c8" stroke-width="1.2"/>
<path d="M1596.5 -2H1638.5V27a5 5 0 0 1 -5 5H1601.5a5 5 0 0 1 -5 -5Z" fill="url(#gBtn)" stroke="#c8c8c8" stroke-width="1.2"/>
<path d="M1641.5 -2H1690V27a5 5 0 0 1 -5 5H1646.5a5 5 0 0 1 -5 -5Z" fill="url(#gBtn)" stroke="#c8c8c8" stroke-width="1.2"/>
<circle cx="1572.8" cy="14.6" r="11.8" fill="url(#gIc)"/>
<circle cx="1617.6" cy="14.6" r="11.8" fill="url(#gIc)"/>
<circle cx="1660.2" cy="14.6" r="11.8" fill="url(#gIc)"/>
<path d="M1580.84 13.78L1580.84 15.82L1578.77 16.04L1577.90 18.15L1579.20 19.76L1577.76 21.20L1576.15 19.90L1574.04 20.77L1573.82 22.84L1571.78 22.84L1571.56 20.77L1569.45 19.90L1567.84 21.20L1566.40 19.76L1567.70 18.15L1566.83 16.04L1564.76 15.82L1564.76 13.78L1566.83 13.56L1567.70 11.45L1566.40 9.84L1567.84 8.40L1569.45 9.70L1571.56 8.83L1571.78 6.76L1573.82 6.76L1574.04 8.83L1576.15 9.70L1577.76 8.40L1579.20 9.84L1577.90 11.45L1578.77 13.56ZM1569.10 14.80a3.7 3.7 0 1 0 7.4 0a3.7 3.7 0 1 0 -7.4 0Z" fill="#e2e2e2" fill-rule="evenodd"/>
<text x="1612.3" y="21.6" font-size="18.5" fill="#f4f4f4" textLength="10.8" lengthAdjust="spacingAndGlyphs" font-weight="bold" >?</text>
<path d="M1662.2 8V21L1655.2 14.5Z" fill="#f8f8f8"/>
<text x="30.1" y="91.6" font-size="37.5" fill="#f4f4f4" textLength="223.5" lengthAdjust="spacingAndGlyphs" >Color Gamut</text>
<text x="154.3" y="140.8" font-size="13.5" fill="#d4d4d4" textLength="78.6" lengthAdjust="spacingAndGlyphs" >DeltaE 2000</text>
<rect x="25.5" y="145.5" width="336" height="400.5" fill="#262626" />
<line x1="69.5" y1="146" x2="69.5" y2="546" stroke="#9c9c9c" stroke-width="1" />
<line x1="114.5" y1="146" x2="114.5" y2="546" stroke="#9c9c9c" stroke-width="1" />
<line x1="159.5" y1="146" x2="159.5" y2="546" stroke="#9c9c9c" stroke-width="1" />
<line x1="204.5" y1="146" x2="204.5" y2="546" stroke="#9c9c9c" stroke-width="1" />
<line x1="249.5" y1="146" x2="249.5" y2="546" stroke="#9c9c9c" stroke-width="1" />
<line x1="292.5" y1="146" x2="292.5" y2="546" stroke="#9c9c9c" stroke-width="1" />
<line x1="337.5" y1="146" x2="337.5" y2="546" stroke="#9c9c9c" stroke-width="1" />
<rect x="25.5" y="145.5" width="336" height="400.5" fill="none" stroke="#9c9c9c"/>
<line x1="25.5" y1="546" x2="25.5" y2="552" stroke="#c8c8c8" stroke-width="1" />
<text x="21" y="567" font-size="14" fill="#d4d4d4" textLength="8.6" lengthAdjust="spacingAndGlyphs" >0</text>
<line x1="69.5" y1="546" x2="69.5" y2="552" stroke="#c8c8c8" stroke-width="1" />
<text x="65" y="567" font-size="14" fill="#d4d4d4" textLength="8.6" lengthAdjust="spacingAndGlyphs" >2</text>
<line x1="114.5" y1="546" x2="114.5" y2="552" stroke="#c8c8c8" stroke-width="1" />
<text x="110" y="567" font-size="14" fill="#d4d4d4" textLength="8.6" lengthAdjust="spacingAndGlyphs" >4</text>
<line x1="159.5" y1="546" x2="159.5" y2="552" stroke="#c8c8c8" stroke-width="1" />
<text x="155" y="567" font-size="14" fill="#d4d4d4" textLength="8.6" lengthAdjust="spacingAndGlyphs" >6</text>
<line x1="204.5" y1="546" x2="204.5" y2="552" stroke="#c8c8c8" stroke-width="1" />
<text x="200" y="567" font-size="14" fill="#d4d4d4" textLength="8.6" lengthAdjust="spacingAndGlyphs" >8</text>
<line x1="249.5" y1="546" x2="249.5" y2="552" stroke="#c8c8c8" stroke-width="1" />
<text x="240.95" y="567" font-size="14" fill="#d4d4d4" textLength="16.7" lengthAdjust="spacingAndGlyphs" >10</text>
<line x1="292.5" y1="546" x2="292.5" y2="552" stroke="#c8c8c8" stroke-width="1" />
<text x="283.95" y="567" font-size="14" fill="#d4d4d4" textLength="16.7" lengthAdjust="spacingAndGlyphs" >12</text>
<line x1="337.5" y1="546" x2="337.5" y2="552" stroke="#c8c8c8" stroke-width="1" />
<text x="328.95" y="567" font-size="14" fill="#d4d4d4" textLength="16.7" lengthAdjust="spacingAndGlyphs" >14</text>
<rect x="26" y="151.5" width="66.476" height="38.5" fill="url(#gE0)" stroke="#000" stroke-width="1"/>
<rect x="26" y="201.5" width="53.1278" height="38.5" fill="url(#gE1)" stroke="#000" stroke-width="1"/>
<rect x="26" y="251.5" width="78.9416" height="38.5" fill="url(#gE2)" stroke="#000" stroke-width="1"/>
<rect x="26" y="301.5" width="73.42" height="38.5" fill="url(#gE3)" stroke="#000" stroke-width="1"/>
<rect x="26" y="351.5" width="34.0744" height="38.5" fill="url(#gE4)" stroke="#000" stroke-width="1"/>
<rect x="26" y="401.5" width="84.0734" height="38.5" fill="url(#gE5)" stroke="#000" stroke-width="1"/>
<rect x="26" y="451.5" width="78.8834" height="38.5" fill="url(#gE6)" stroke="#000" stroke-width="1"/>
<rect x="26" y="501.5" width="76.267" height="38.5" fill="url(#gE7)" stroke="#000" stroke-width="1"/>
<line x1="25.5" y1="146" x2="25.5" y2="552" stroke="#9c9c9c" stroke-width="1" />
<rect x="413.6" y="79.5" width="144.3" height="307" fill="#262626" />
<line x1="407.1" y1="81.5" x2="557.9" y2="81.5" stroke="#9c9c9c" stroke-width="1" />
<text x="392.2" y="86.7" font-size="13.2" fill="#d4d4d4" textLength="14.4" lengthAdjust="spacingAndGlyphs" >15</text>
<line x1="407.1" y1="132.5" x2="557.9" y2="132.5" stroke="#9c9c9c" stroke-width="1" />
<text x="392.2" y="137.7" font-size="13.2" fill="#d4d4d4" textLength="14.4" lengthAdjust="spacingAndGlyphs" >10</text>
<line x1="407.1" y1="183.5" x2="557.9" y2="183.5" stroke="#9c9c9c" stroke-width="1" />
<text x="399.4" y="188.7" font-size="13.2" fill="#d4d4d4" textLength="7.2" lengthAdjust="spacingAndGlyphs" >5</text>
<line x1="407.1" y1="234.5" x2="557.9" y2="234.5" stroke="#9c9c9c" stroke-width="1" />
<text x="399.4" y="239.7" font-size="13.2" fill="#d4d4d4" textLength="7.2" lengthAdjust="spacingAndGlyphs" >0</text>
<line x1="407.1" y1="285.5" x2="557.9" y2="285.5" stroke="#9c9c9c" stroke-width="1" />
<text x="394.1" y="290.7" font-size="13.2" fill="#d4d4d4" textLength="12.5" lengthAdjust="spacingAndGlyphs" >-5</text>
<line x1="407.1" y1="337.5" x2="557.9" y2="337.5" stroke="#9c9c9c" stroke-width="1" />
<text x="386.1" y="342.7" font-size="13.2" fill="#d4d4d4" textLength="20.5" lengthAdjust="spacingAndGlyphs" >-10</text>
<line x1="407.1" y1="386.5" x2="557.9" y2="386.5" stroke="#9c9c9c" stroke-width="1" />
<text x="386.1" y="391.7" font-size="13.2" fill="#d4d4d4" textLength="20.5" lengthAdjust="spacingAndGlyphs" >-15</text>
<rect x="413.6" y="79.5" width="144.3" height="307" fill="none" stroke="#9c9c9c"/>
<line x1="413.8" y1="386" x2="413.8" y2="392.5" stroke="#c8c8c8" stroke-width="1" />
<line x1="557.7" y1="386" x2="557.7" y2="392.5" stroke="#c8c8c8" stroke-width="1" />
<text x="452.1" y="74.9" font-size="13.5" fill="#d4d4d4" textLength="41.4" lengthAdjust="spacingAndGlyphs" >DeltaL</text>
<text x="466.8" y="401.9" font-size="13.2" fill="#d4d4d4" textLength="37.4" lengthAdjust="spacingAndGlyphs" >100W</text>
<line x1="428.1" y1="234.5" x2="542.1" y2="234.5" stroke="#151515" stroke-width="1.4" />
<rect x="610.9" y="79.5" width="144.3" height="307" fill="#262626" />
<line x1="604.4" y1="81.5" x2="755.2" y2="81.5" stroke="#9c9c9c" stroke-width="1" />
<text x="589.5" y="86.7" font-size="13.2" fill="#d4d4d4" textLength="14.4" lengthAdjust="spacingAndGlyphs" >15</text>
<line x1="604.4" y1="132.5" x2="755.2" y2="132.5" stroke="#9c9c9c" stroke-width="1" />
<text x="589.5" y="137.7" font-size="13.2" fill="#d4d4d4" textLength="14.4" lengthAdjust="spacingAndGlyphs" >10</text>
<line x1="604.4" y1="183.5" x2="755.2" y2="183.5" stroke="#9c9c9c" stroke-width="1" />
<text x="596.7" y="188.7" font-size="13.2" fill="#d4d4d4" textLength="7.2" lengthAdjust="spacingAndGlyphs" >5</text>
<line x1="604.4" y1="234.5" x2="755.2" y2="234.5" stroke="#9c9c9c" stroke-width="1" />
<text x="596.7" y="239.7" font-size="13.2" fill="#d4d4d4" textLength="7.2" lengthAdjust="spacingAndGlyphs" >0</text>
<line x1="604.4" y1="285.5" x2="755.2" y2="285.5" stroke="#9c9c9c" stroke-width="1" />
<text x="591.4" y="290.7" font-size="13.2" fill="#d4d4d4" textLength="12.5" lengthAdjust="spacingAndGlyphs" >-5</text>
<line x1="604.4" y1="337.5" x2="755.2" y2="337.5" stroke="#9c9c9c" stroke-width="1" />
<text x="583.4" y="342.7" font-size="13.2" fill="#d4d4d4" textLength="20.5" lengthAdjust="spacingAndGlyphs" >-10</text>
<line x1="604.4" y1="386.5" x2="755.2" y2="386.5" stroke="#9c9c9c" stroke-width="1" />
<text x="583.4" y="391.7" font-size="13.2" fill="#d4d4d4" textLength="20.5" lengthAdjust="spacingAndGlyphs" >-15</text>
<rect x="610.9" y="79.5" width="144.3" height="307" fill="none" stroke="#9c9c9c"/>
<line x1="611.1" y1="386" x2="611.1" y2="392.5" stroke="#c8c8c8" stroke-width="1" />
<line x1="755" y1="386" x2="755" y2="392.5" stroke="#c8c8c8" stroke-width="1" />
<text x="648.4" y="74.9" font-size="13.5" fill="#d4d4d4" textLength="43.5" lengthAdjust="spacingAndGlyphs" >DeltaC</text>
<text x="664.1" y="401.9" font-size="13.2" fill="#d4d4d4" textLength="37.4" lengthAdjust="spacingAndGlyphs" >100W</text>
<rect x="625.9" y="206.7" width="114.8" height="27.8" fill="url(#gDC)" stroke="#000" stroke-width="1.2"/>
<rect x="808.2" y="79.5" width="144.3" height="307" fill="#262626" />
<line x1="801.7" y1="81.5" x2="952.5" y2="81.5" stroke="#9c9c9c" stroke-width="1" />
<text x="786.8" y="86.7" font-size="13.2" fill="#d4d4d4" textLength="14.4" lengthAdjust="spacingAndGlyphs" >15</text>
<line x1="801.7" y1="132.5" x2="952.5" y2="132.5" stroke="#9c9c9c" stroke-width="1" />
<text x="786.8" y="137.7" font-size="13.2" fill="#d4d4d4" textLength="14.4" lengthAdjust="spacingAndGlyphs" >10</text>
<line x1="801.7" y1="183.5" x2="952.5" y2="183.5" stroke="#9c9c9c" stroke-width="1" />
<text x="794" y="188.7" font-size="13.2" fill="#d4d4d4" textLength="7.2" lengthAdjust="spacingAndGlyphs" >5</text>
<line x1="801.7" y1="234.5" x2="952.5" y2="234.5" stroke="#9c9c9c" stroke-width="1" />
<text x="794" y="239.7" font-size="13.2" fill="#d4d4d4" textLength="7.2" lengthAdjust="spacingAndGlyphs" >0</text>
<line x1="801.7" y1="285.5" x2="952.5" y2="285.5" stroke="#9c9c9c" stroke-width="1" />
<text x="788.7" y="290.7" font-size="13.2" fill="#d4d4d4" textLength="12.5" lengthAdjust="spacingAndGlyphs" >-5</text>
<line x1="801.7" y1="337.5" x2="952.5" y2="337.5" stroke="#9c9c9c" stroke-width="1" />
<text x="780.7" y="342.7" font-size="13.2" fill="#d4d4d4" textLength="20.5" lengthAdjust="spacingAndGlyphs" >-10</text>
<line x1="801.7" y1="386.5" x2="952.5" y2="386.5" stroke="#9c9c9c" stroke-width="1" />
<text x="780.7" y="391.7" font-size="13.2" fill="#d4d4d4" textLength="20.5" lengthAdjust="spacingAndGlyphs" >-15</text>
<rect x="808.2" y="79.5" width="144.3" height="307" fill="none" stroke="#9c9c9c"/>
<line x1="808.4" y1="386" x2="808.4" y2="392.5" stroke="#c8c8c8" stroke-width="1" />
<line x1="952.3" y1="386" x2="952.3" y2="392.5" stroke="#c8c8c8" stroke-width="1" />
<text x="845.4" y="74.9" font-size="13.5" fill="#d4d4d4" textLength="44.5" lengthAdjust="spacingAndGlyphs" >DeltaH</text>
<text x="861.4" y="401.9" font-size="13.2" fill="#d4d4d4" textLength="37.4" lengthAdjust="spacingAndGlyphs" >100W</text>
<line x1="822.7" y1="234.5" x2="936.7" y2="234.5" stroke="#151515" stroke-width="1.4" />
<rect x="381" y="418" width="592" height="158" fill="#000" />
<rect x="398.6" y="425.6" width="61.6" height="64.4" fill="#bcc2c5" />
<rect x="398.6" y="490" width="61.6" height="63.4" fill="#c0c0c0" />
<rect x="400" y="427" width="58.8" height="125" fill="none" stroke="#707880" stroke-opacity="0.4" stroke-width="0.8"/>
<rect x="398.6" y="425.6" width="61.6" height="127.8" fill="none" stroke="#f4f4f4" stroke-width="1.3"/>
<text x="412.8" y="567.9" font-size="11.6" fill="#fff" textLength="33.2" lengthAdjust="spacingAndGlyphs" stroke="#fff" stroke-width="0.35">White</text>
<rect x="470.9" y="425.6" width="61.6" height="64.4" fill="#b01c00" />
<rect x="470.9" y="490" width="61.6" height="63.4" fill="#c0060a" />
<rect x="472.3" y="427" width="58.8" height="125" fill="none" stroke="#707880" stroke-opacity="0.4" stroke-width="0.8"/>
<rect x="470.9" y="425.6" width="61.6" height="127.8" fill="none" stroke="#f4f4f4" stroke-width="1.3"/>
<text x="491.4" y="567.9" font-size="11.6" fill="#fff" textLength="20.6" lengthAdjust="spacingAndGlyphs" stroke="#fff" stroke-width="0.35">Red</text>
<rect x="543.2" y="425.6" width="61.6" height="64.4" fill="#4cc200" />
<rect x="543.2" y="490" width="61.6" height="63.4" fill="#24c030" />
<rect x="544.6" y="427" width="58.8" height="125" fill="none" stroke="#707880" stroke-opacity="0.4" stroke-width="0.8"/>
<rect x="543.2" y="425.6" width="61.6" height="127.8" fill="none" stroke="#f4f4f4" stroke-width="1.3"/>
<text x="556.75" y="567.9" font-size="11.6" fill="#fff" textLength="34.5" lengthAdjust="spacingAndGlyphs" stroke="#fff" stroke-width="0.35">Green</text>
<rect x="615.5" y="425.6" width="61.6" height="64.4" fill="#1e00c8" />
<rect x="615.5" y="490" width="61.6" height="63.4" fill="#1410c0" />
<rect x="616.9" y="427" width="58.8" height="125" fill="none" stroke="#707880" stroke-opacity="0.4" stroke-width="0.8"/>
<rect x="615.5" y="425.6" width="61.6" height="127.8" fill="none" stroke="#f4f4f4" stroke-width="1.3"/>
<text x="634.05" y="567.9" font-size="11.6" fill="#fff" textLength="24.5" lengthAdjust="spacingAndGlyphs" stroke="#fff" stroke-width="0.35">Blue</text>
<rect x="687.8" y="425.6" width="61.6" height="64.4" fill="#48bec4" />
<rect x="687.8" y="490" width="61.6" height="63.4" fill="#00c0c0" />
<rect x="689.2" y="427" width="58.8" height="125" fill="none" stroke="#707880" stroke-opacity="0.4" stroke-width="0.8"/>
<rect x="687.8" y="425.6" width="61.6" height="127.8" fill="none" stroke="#f4f4f4" stroke-width="1.3"/>
<text x="704.85" y="567.9" font-size="11.6" fill="#fff" textLength="27.5" lengthAdjust="spacingAndGlyphs" stroke="#fff" stroke-width="0.35">Cyan</text>
<rect x="760.1" y="425.6" width="61.6" height="64.4" fill="#b000c8" />
<rect x="760.1" y="490" width="61.6" height="63.4" fill="#c000c0" />
<rect x="761.5" y="427" width="58.8" height="125" fill="none" stroke="#707880" stroke-opacity="0.4" stroke-width="0.8"/>
<rect x="760.1" y="425.6" width="61.6" height="127.8" fill="none" stroke="#f4f4f4" stroke-width="1.3"/>
<text x="766.15" y="567.9" font-size="11.6" fill="#fff" textLength="49.5" lengthAdjust="spacingAndGlyphs" stroke="#fff" stroke-width="0.35">Magenta</text>
<rect x="832.4" y="425.6" width="61.6" height="64.4" fill="#c0c400" />
<rect x="832.4" y="490" width="61.6" height="63.4" fill="#c4c034" />
<rect x="833.8" y="427" width="58.8" height="125" fill="none" stroke="#707880" stroke-opacity="0.4" stroke-width="0.8"/>
<rect x="832.4" y="425.6" width="61.6" height="127.8" fill="none" stroke="#f4f4f4" stroke-width="1.3"/>
<text x="844.95" y="567.9" font-size="11.6" fill="#fff" textLength="36.5" lengthAdjust="spacingAndGlyphs" stroke="#fff" stroke-width="0.35">Yellow</text>
<rect x="904.7" y="425.6" width="61.6" height="64.4" fill="#f8fafd" />
<rect x="904.7" y="490" width="61.6" height="63.4" fill="#f8fafd" />
<rect x="906.1" y="427" width="58.8" height="125" fill="none" stroke="#707880" stroke-opacity="0.4" stroke-width="0.8"/>
<rect x="904.7" y="425.6" width="61.6" height="127.8" fill="none" stroke="#f4f4f4" stroke-width="1.3"/>
<text x="919" y="567.9" font-size="11.6" fill="#fff" textLength="33" lengthAdjust="spacingAndGlyphs" stroke="#fff" stroke-width="0.35">100W</text>
<text transform="translate(394.1 470.2) rotate(-90)" font-size="13" fill="#fff" stroke="#fff" stroke-width="0.35" textLength="33.4" lengthAdjust="spacingAndGlyphs">Actual</text>
<text transform="translate(394.1 542.2) rotate(-90)" font-size="13" fill="#fff" stroke="#fff" stroke-width="0.35" textLength="33.2" lengthAdjust="spacingAndGlyphs">Target</text>
<rect x="979" y="49" width="700" height="541" fill="#1c1c1c" />
<rect x="986" y="56" width="681" height="527.5" fill="#323232" />
<text x="1284.7" y="73.6" font-size="13.5" fill="#d4d4d4" textLength="83.6" lengthAdjust="spacingAndGlyphs" >CIE 1976 u'v'</text>
<rect x="1023.9" y="79" width="639.4" height="476.4" fill="#262626" />
<g clip-path="url(#cpPlot)"><g clip-path="url(#cpLocus)"><rect x="1052" y="89" width="67" height="2.5" fill="url(#u0)"/><rect x="1044" y="91" width="99" height="2.5" fill="url(#u1)"/><rect x="1039" y="93" width="125" height="2.5" fill="url(#u2)"/><rect x="1036" y="95" width="147" height="2.5" fill="url(#u3)"/><rect x="1033" y="97" width="169" height="2.5" fill="url(#u4)"/><rect x="1032" y="99" width="188" height="2.5" fill="url(#u5)"/><rect x="1030" y="101" width="208" height="2.5" fill="url(#u6)"/><rect x="1029" y="103" width="227" height="2.5" fill="url(#u7)"/><rect x="1028" y="105" width="246" height="2.5" fill="url(#u8)"/><rect x="1027" y="107" width="265" height="2.5" fill="url(#u9)"/><rect x="1026" y="109" width="284" height="2.5" fill="url(#u10)"/><rect x="1025" y="111" width="303" height="2.5" fill="url(#u11)"/><rect x="1025" y="113" width="321" height="2.5" fill="url(#u12)"/><rect x="1025" y="115" width="339" height="2.5" fill="url(#u13)"/><rect x="1024" y="117" width="358" height="2.5" fill="url(#u14)"/><rect x="1024" y="119" width="376" height="2.5" fill="url(#u15)"/><rect x="1024" y="121" width="394" height="2.5" fill="url(#u16)"/><rect x="1024" y="123" width="412" height="2.5" fill="url(#u17)"/><rect x="1024" y="125" width="430" height="2.5" fill="url(#u18)"/><rect x="1024" y="127" width="448" height="2.5" fill="url(#u19)"/><rect x="1024" y="129" width="466" height="2.5" fill="url(#u20)"/><rect x="1024" y="131" width="484" height="2.5" fill="url(#u21)"/><rect x="1024" y="133" width="502" height="2.5" fill="url(#u22)"/><rect x="1024" y="135" width="520" height="2.5" fill="url(#u23)"/><rect x="1024" y="137" width="538" height="2.5" fill="url(#u24)"/><rect x="1025" y="139" width="554" height="2.5" fill="url(#u25)"/><rect x="1025" y="141" width="572" height="2.5" fill="url(#u26)"/><rect x="1025" y="143" width="590" height="2.5" fill="url(#u27)"/><rect x="1026" y="145" width="607" height="2.5" fill="url(#u28)"/><rect x="1026" y="147" width="625" height="2.5" fill="url(#u29)"/><rect x="1026" y="149" width="637" height="2.5" fill="url(#u30)"/><rect x="1027" y="151" width="636" height="2.5" fill="url(#u31)"/><rect x="1027" y="153" width="636" height="2.5" fill="url(#u32)"/><rect x="1028" y="155" width="635" height="2.5" fill="url(#u33)"/><rect x="1028" y="157" width="635" height="2.5" fill="url(#u34)"/><rect x="1028" y="159" width="635" height="2.5" fill="url(#u35)"/><rect x="1029" y="161" width="634" height="2.5" fill="url(#u36)"/><rect x="1029" y="163" width="634" height="2.5" fill="url(#u37)"/><rect x="1030" y="165" width="633" height="2.5" fill="url(#u38)"/><rect x="1030" y="167" width="633" height="2.5" fill="url(#u39)"/><rect x="1031" y="169" width="632" height="2.5" fill="url(#u40)"/><rect x="1032" y="171" width="631" height="2.5" fill="url(#u41)"/><rect x="1032" y="173" width="631" height="2.5" fill="url(#u42)"/><rect x="1033" y="175" width="630" height="2.5" fill="url(#u43)"/><rect x="1033" y="177" width="630" height="2.5" fill="url(#u44)"/><rect x="1034" y="179" width="629" height="2.5" fill="url(#u45)"/><rect x="1035" y="181" width="626" height="2.5" fill="url(#u46)"/><rect x="1035" y="183" width="624" height="2.5" fill="url(#u47)"/><rect x="1036" y="185" width="621" height="2.5" fill="url(#u48)"/><rect x="1037" y="187" width="618" height="2.5" fill="url(#u49)"/><rect x="1037" y="189" width="616" height="2.5" fill="url(#u50)"/><rect x="1038" y="191" width="613" height="2.5" fill="url(#u51)"/><rect x="1039" y="193" width="610" height="2.5" fill="url(#u52)"/><rect x="1039" y="195" width="608" height="2.5" fill="url(#u53)"/><rect x="1040" y="197" width="605" height="2.5" fill="url(#u54)"/><rect x="1041" y="199" width="602" height="2.5" fill="url(#u55)"/><rect x="1042" y="201" width="599" height="2.5" fill="url(#u56)"/><rect x="1042" y="203" width="597" height="2.5" fill="url(#u57)"/><rect x="1043" y="205" width="594" height="2.5" fill="url(#u58)"/><rect x="1044" y="207" width="591" height="2.5" fill="url(#u59)"/><rect x="1045" y="209" width="588" height="2.5" fill="url(#u60)"/><rect x="1045" y="211" width="586" height="2.5" fill="url(#u61)"/><rect x="1046" y="213" width="583" height="2.5" fill="url(#u62)"/><rect x="1047" y="215" width="580" height="2.5" fill="url(#u63)"/><rect x="1048" y="217" width="577" height="2.5" fill="url(#u64)"/><rect x="1048" y="219" width="575" height="2.5" fill="url(#u65)"/><rect x="1049" y="221" width="572" height="2.5" fill="url(#u66)"/><rect x="1050" y="223" width="569" height="2.5" fill="url(#u67)"/><rect x="1051" y="225" width="566" height="2.5" fill="url(#u68)"/><rect x="1052" y="227" width="563" height="2.5" fill="url(#u69)"/><rect x="1053" y="229" width="560" height="2.5" fill="url(#u70)"/><rect x="1053" y="231" width="558" height="2.5" fill="url(#u71)"/><rect x="1054" y="233" width="555" height="2.5" fill="url(#u72)"/><rect x="1055" y="235" width="552" height="2.5" fill="url(#u73)"/><rect x="1056" y="237" width="549" height="2.5" fill="url(#u74)"/><rect x="1057" y="239" width="546" height="2.5" fill="url(#u75)"/><rect x="1058" y="241" width="543" height="2.5" fill="url(#u76)"/><rect x="1059" y="243" width="540" height="2.5" fill="url(#u77)"/><rect x="1060" y="245" width="537" height="2.5" fill="url(#u78)"/><rect x="1060" y="247" width="535" height="2.5" fill="url(#u79)"/><rect x="1061" y="249" width="532" height="2.5" fill="url(#u80)"/><rect x="1062" y="251" width="529" height="2.5" fill="url(#u81)"/><rect x="1063" y="253" width="526" height="2.5" fill="url(#u82)"/><rect x="1064" y="255" width="523" height="2.5" fill="url(#u83)"/><rect x="1065" y="257" width="520" height="2.5" fill="url(#u84)"/><rect x="1066" y="259" width="517" height="2.5" fill="url(#u85)"/><rect x="1067" y="261" width="514" height="2.5" fill="url(#u86)"/><rect x="1068" y="263" width="511" height="2.5" fill="url(#u87)"/><rect x="1069" y="265" width="508" height="2.5" fill="url(#u88)"/><rect x="1070" y="267" width="505" height="2.5" fill="url(#u89)"/><rect x="1071" y="269" width="502" height="2.5" fill="url(#u90)"/><rect x="1072" y="271" width="499" height="2.5" fill="url(#u91)"/><rect x="1073" y="273" width="496" height="2.5" fill="url(#u92)"/><rect x="1074" y="275" width="493" height="2.5" fill="url(#u93)"/><rect x="1075" y="277" width="490" height="2.5" fill="url(#u94)"/><rect x="1076" y="279" width="487" height="2.5" fill="url(#u95)"/><rect x="1077" y="281" width="484" height="2.5" fill="url(#u96)"/><rect x="1078" y="283" width="481" height="2.5" fill="url(#u97)"/><rect x="1079" y="285" width="478" height="2.5" fill="url(#u98)"/><rect x="1080" y="287" width="475" height="2.5" fill="url(#u99)"/><rect x="1081" y="289" width="472" height="2.5" fill="url(#u100)"/><rect x="1082" y="291" width="469" height="2.5" fill="url(#u101)"/><rect x="1083" y="293" width="466" height="2.5" fill="url(#u102)"/><rect x="1084" y="295" width="463" height="2.5" fill="url(#u103)"/><rect x="1085" y="297" width="460" height="2.5" fill="url(#u104)"/><rect x="1086" y="299" width="457" height="2.5" fill="url(#u105)"/><rect x="1088" y="301" width="453" height="2.5" fill="url(#u106)"/><rect x="1089" y="303" width="450" height="2.5" fill="url(#u107)"/><rect x="1090" y="305" width="447" height="2.5" fill="url(#u108)"/><rect x="1091" y="307" width="444" height="2.5" fill="url(#u109)"/><rect x="1092" y="309" width="441" height="2.5" fill="url(#u110)"/><rect x="1093" y="311" width="438" height="2.5" fill="url(#u111)"/><rect x="1094" y="313" width="435" height="2.5" fill="url(#u112)"/><rect x="1095" y="315" width="432" height="2.5" fill="url(#u113)"/><rect x="1097" y="317" width="428" height="2.5" fill="url(#u114)"/><rect x="1098" y="319" width="425" height="2.5" fill="url(#u115)"/><rect x="1099" y="321" width="422" height="2.5" fill="url(#u116)"/><rect x="1100" y="323" width="419" height="2.5" fill="url(#u117)"/><rect x="1101" y="325" width="416" height="2.5" fill="url(#u118)"/><rect x="1103" y="327" width="412" height="2.5" fill="url(#u119)"/><rect x="1104" y="329" width="409" height="2.5" fill="url(#u120)"/><rect x="1105" y="331" width="406" height="2.5" fill="url(#u121)"/><rect x="1106" y="333" width="403" height="2.5" fill="url(#u122)"/><rect x="1107" y="335" width="400" height="2.5" fill="url(#u123)"/><rect x="1109" y="337" width="396" height="2.5" fill="url(#u124)"/><rect x="1110" y="339" width="393" height="2.5" fill="url(#u125)"/><rect x="1111" y="341" width="390" height="2.5" fill="url(#u126)"/><rect x="1112" y="343" width="387" height="2.5" fill="url(#u127)"/><rect x="1113" y="345" width="384" height="2.5" fill="url(#u128)"/><rect x="1115" y="347" width="380" height="2.5" fill="url(#u129)"/><rect x="1116" y="349" width="377" height="2.5" fill="url(#u130)"/><rect x="1117" y="351" width="374" height="2.5" fill="url(#u131)"/><rect x="1118" y="353" width="371" height="2.5" fill="url(#u132)"/><rect x="1120" y="355" width="367" height="2.5" fill="url(#u133)"/><rect x="1121" y="357" width="364" height="2.5" fill="url(#u134)"/><rect x="1122" y="359" width="361" height="2.5" fill="url(#u135)"/><rect x="1123" y="361" width="358" height="2.5" fill="url(#u136)"/><rect x="1125" y="363" width="354" height="2.5" fill="url(#u137)"/><rect x="1126" y="365" width="351" height="2.5" fill="url(#u138)"/><rect x="1127" y="367" width="348" height="2.5" fill="url(#u139)"/><rect x="1129" y="369" width="344" height="2.5" fill="url(#u140)"/><rect x="1130" y="371" width="341" height="2.5" fill="url(#u141)"/><rect x="1131" y="373" width="338" height="2.5" fill="url(#u142)"/><rect x="1132" y="375" width="335" height="2.5" fill="url(#u143)"/><rect x="1134" y="377" width="331" height="2.5" fill="url(#u144)"/><rect x="1135" y="379" width="328" height="2.5" fill="url(#u145)"/><rect x="1136" y="381" width="325" height="2.5" fill="url(#u146)"/><rect x="1138" y="383" width="321" height="2.5" fill="url(#u147)"/><rect x="1139" y="385" width="318" height="2.5" fill="url(#u148)"/><rect x="1140" y="387" width="315" height="2.5" fill="url(#u149)"/><rect x="1142" y="389" width="311" height="2.5" fill="url(#u150)"/><rect x="1143" y="391" width="308" height="2.5" fill="url(#u151)"/><rect x="1144" y="393" width="305" height="2.5" fill="url(#u152)"/><rect x="1146" y="395" width="301" height="2.5" fill="url(#u153)"/><rect x="1147" y="397" width="298" height="2.5" fill="url(#u154)"/><rect x="1149" y="399" width="294" height="2.5" fill="url(#u155)"/><rect x="1150" y="401" width="291" height="2.5" fill="url(#u156)"/><rect x="1151" y="403" width="288" height="2.5" fill="url(#u157)"/><rect x="1153" y="405" width="284" height="2.5" fill="url(#u158)"/><rect x="1154" y="407" width="281" height="2.5" fill="url(#u159)"/><rect x="1156" y="409" width="277" height="2.5" fill="url(#u160)"/><rect x="1157" y="411" width="274" height="2.5" fill="url(#u161)"/><rect x="1159" y="413" width="270" height="2.5" fill="url(#u162)"/><rect x="1160" y="415" width="267" height="2.5" fill="url(#u163)"/><rect x="1162" y="417" width="263" height="2.5" fill="url(#u164)"/><rect x="1163" y="419" width="260" height="2.5" fill="url(#u165)"/><rect x="1165" y="421" width="256" height="2.5" fill="url(#u166)"/><rect x="1166" y="423" width="253" height="2.5" fill="url(#u167)"/><rect x="1168" y="425" width="249" height="2.5" fill="url(#u168)"/><rect x="1169" y="427" width="246" height="2.5" fill="url(#u169)"/><rect x="1171" y="429" width="242" height="2.5" fill="url(#u170)"/><rect x="1172" y="431" width="239" height="2.5" fill="url(#u171)"/><rect x="1174" y="433" width="235" height="2.5" fill="url(#u172)"/><rect x="1175" y="435" width="232" height="2.5" fill="url(#u173)"/><rect x="1177" y="437" width="228" height="2.5" fill="url(#u174)"/><rect x="1179" y="439" width="224" height="2.5" fill="url(#u175)"/><rect x="1180" y="441" width="221" height="2.5" fill="url(#u176)"/><rect x="1182" y="443" width="217" height="2.5" fill="url(#u177)"/><rect x="1184" y="445" width="213" height="2.5" fill="url(#u178)"/><rect x="1185" y="447" width="210" height="2.5" fill="url(#u179)"/><rect x="1187" y="449" width="206" height="2.5" fill="url(#u180)"/><rect x="1189" y="451" width="202" height="2.5" fill="url(#u181)"/><rect x="1190" y="453" width="199" height="2.5" fill="url(#u182)"/><rect x="1192" y="455" width="195" height="2.5" fill="url(#u183)"/><rect x="1194" y="457" width="191" height="2.5" fill="url(#u184)"/><rect x="1196" y="459" width="187" height="2.5" fill="url(#u185)"/><rect x="1197" y="461" width="184" height="2.5" fill="url(#u186)"/><rect x="1199" y="463" width="180" height="2.5" fill="url(#u187)"/><rect x="1201" y="465" width="176" height="2.5" fill="url(#u188)"/><rect x="1203" y="467" width="172" height="2.5" fill="url(#u189)"/><rect x="1205" y="469" width="168" height="2.5" fill="url(#u190)"/><rect x="1207" y="471" width="164" height="2.5" fill="url(#u191)"/><rect x="1209" y="473" width="160" height="2.5" fill="url(#u192)"/><rect x="1211" y="475" width="155" height="2.5" fill="url(#u193)"/><rect x="1213" y="477" width="151" height="2.5" fill="url(#u194)"/><rect x="1215" y="479" width="147" height="2.5" fill="url(#u195)"/><rect x="1217" y="481" width="143" height="2.5" fill="url(#u196)"/><rect x="1219" y="483" width="139" height="2.5" fill="url(#u197)"/><rect x="1221" y="485" width="135" height="2.5" fill="url(#u198)"/><rect x="1223" y="487" width="131" height="2.5" fill="url(#u199)"/><rect x="1225" y="489" width="127" height="2.5" fill="url(#u200)"/><rect x="1228" y="491" width="122" height="2.5" fill="url(#u201)"/><rect x="1230" y="493" width="118" height="2.5" fill="url(#u202)"/><rect x="1232" y="495" width="114" height="2.5" fill="url(#u203)"/><rect x="1234" y="497" width="110" height="2.5" fill="url(#u204)"/><rect x="1237" y="499" width="105" height="2.5" fill="url(#u205)"/><rect x="1239" y="501" width="101" height="2.5" fill="url(#u206)"/><rect x="1242" y="503" width="96" height="2.5" fill="url(#u207)"/><rect x="1244" y="505" width="92" height="2.5" fill="url(#u208)"/><rect x="1247" y="507" width="87" height="2.5" fill="url(#u209)"/><rect x="1249" y="509" width="83" height="2.5" fill="url(#u210)"/><rect x="1252" y="511" width="78" height="2.5" fill="url(#u211)"/><rect x="1254" y="513" width="74" height="2.5" fill="url(#u212)"/><rect x="1257" y="515" width="69" height="2.5" fill="url(#u213)"/><rect x="1259" y="517" width="65" height="2.5" fill="url(#u214)"/><rect x="1262" y="519" width="60" height="2.5" fill="url(#u215)"/><rect x="1264" y="521" width="56" height="2.5" fill="url(#u216)"/><rect x="1267" y="523" width="51" height="2.5" fill="url(#u217)"/><rect x="1269" y="525" width="47" height="2.5" fill="url(#u218)"/><rect x="1272" y="527" width="42" height="2.5" fill="url(#u219)"/><rect x="1274" y="529" width="38" height="2.5" fill="url(#u220)"/><rect x="1276" y="531" width="34" height="2.5" fill="url(#u221)"/><rect x="1279" y="533" width="29" height="2.5" fill="url(#u222)"/><rect x="1281" y="535" width="25" height="2.5" fill="url(#u223)"/><rect x="1284" y="537" width="20" height="2.5" fill="url(#u224)"/><rect x="1287" y="539" width="15" height="2.5" fill="url(#u225)"/><rect x="1289" y="541" width="11" height="2.5" fill="url(#u226)"/></g><path d="M1297.5 542.3L1297.4 542.3L1297.3 542.3L1297.2 542.3L1297.1 542.4L1297.0 542.4L1296.8 542.4L1296.6 542.4L1296.5 542.5L1296.4 542.7L1296.3 542.8L1296.1 542.8L1295.9 542.8L1295.6 542.8L1295.2 542.8L1294.9 542.8L1294.6 542.8L1294.2 542.7L1293.8 542.6L1293.3 542.4L1292.5 542.0L1291.5 541.4L1290.4 540.7L1289.1 539.8L1287.7 538.7L1286.0 537.4L1284.0 536.0L1281.8 534.3L1279.4 532.3L1276.8 530.1L1273.9 527.7L1270.7 525.1L1267.2 522.3L1263.2 519.1L1258.9 515.6L1254.1 511.8L1248.9 507.6L1243.4 503.1L1237.3 498.1L1230.8 492.5L1223.8 486.2L1216.3 479.3L1208.3 471.2L1199.2 461.4L1188.8 449.4L1177.4 435.5L1165.3 419.9L1152.6 402.5L1139.3 383.2L1125.8 362.3L1112.1 340.4L1098.6 317.8L1085.6 294.8L1073.6 271.9L1063.1 249.7L1053.9 228.5L1045.9 208.7L1039.3 190.7L1034.1 174.5L1030.3 160.4L1027.6 148.0L1026.0 137.3L1025.4 128.2L1025.7 120.3L1026.8 113.5L1028.8 107.7L1031.6 102.9L1035.0 98.9L1039.1 95.9L1043.6 93.6L1048.5 92.0L1053.8 90.9L1059.4 90.2L1065.2 89.8L1071.2 89.6L1077.2 89.5L1083.3 89.5L1089.3 89.6L1095.5 89.8L1101.8 90.1L1108.3 90.4L1114.9 90.8L1121.8 91.3L1128.9 91.9L1136.3 92.5L1143.9 93.2L1151.9 94.0L1160.1 94.8L1168.7 95.7L1177.6 96.6L1187.0 97.6L1196.7 98.6L1206.8 99.7L1217.3 100.9L1228.2 102.1L1239.6 103.3L1251.5 104.6L1263.8 106.0L1276.5 107.4L1289.7 108.9L1303.3 110.4L1317.3 112.0L1331.7 113.6L1346.5 115.2L1361.6 116.9L1376.9 118.6L1392.5 120.3L1408.2 122.1L1423.6 123.8L1438.7 125.5L1453.6 127.2L1468.6 128.8L1483.2 130.5L1497.3 132.0L1510.7 133.5L1523.5 134.9L1535.8 136.3L1547.3 137.6L1558.2 138.8L1568.4 139.9L1577.9 141.0L1586.8 142.0L1595.0 142.9L1602.7 143.7L1609.8 144.5L1616.6 145.3L1623.0 146.0L1629.0 146.7L1634.7 147.3L1639.9 147.9L1644.8 148.4L1649.3 149.0L1653.5 149.4L1657.2 149.8L1660.5 150.2L1663.4 150.5L1666.1 150.8L1668.6 151.1L1670.7 151.3L1672.7 151.6L1674.4 151.7L1675.8 151.9L1677.0 152.0L1678.1 152.2L1679.1 152.3L1680.1 152.4L1681.0 152.5L1681.8 152.6L1682.5 152.7L1683.4 152.7L1684.1 152.8L1684.9 152.9L1685.6 153.0L1686.2 153.1L1686.6 153.1L1686.9 153.1L1687.2 153.2L1687.4 153.2L1687.6 153.2L1687.7 153.2L1687.8 153.2ZM1503.9 140.2L1157.0 108.8L1210.7 430.0Z" fill="#000" fill-opacity="0.4" fill-rule="evenodd"/></g>
<rect x="1023.9" y="79" width="639.4" height="476.4" fill="none" stroke="#a2a2a2" stroke-width="1.4"/>
<line x1="1023.9" y1="555.4" x2="1023.9" y2="561" stroke="#dcdcdc" stroke-width="1.7" />
<text x="1019.6" y="576.1" font-size="14" fill="#d4d4d4" textLength="8.6" lengthAdjust="spacingAndGlyphs" >0</text>
<line x1="1018" y1="555.4" x2="1023.9" y2="555.4" stroke="#dcdcdc" stroke-width="1.7" />
<text x="1009" y="560.6" font-size="14" fill="#d4d4d4" textLength="8.6" lengthAdjust="spacingAndGlyphs" >0</text>
<line x1="1077.15" y1="555.4" x2="1077.15" y2="561" stroke="#dcdcdc" stroke-width="1.7" />
<text x="1062.85" y="576.1" font-size="14" fill="#d4d4d4" textLength="28.6" lengthAdjust="spacingAndGlyphs" >0,05</text>
<line x1="1018" y1="515.7" x2="1023.9" y2="515.7" stroke="#dcdcdc" stroke-width="1.7" />
<text x="989" y="520.9" font-size="14" fill="#d4d4d4" textLength="28.6" lengthAdjust="spacingAndGlyphs" >0,05</text>
<line x1="1130.4" y1="555.4" x2="1130.4" y2="561" stroke="#dcdcdc" stroke-width="1.7" />
<text x="1120.1" y="576.1" font-size="14" fill="#d4d4d4" textLength="20.6" lengthAdjust="spacingAndGlyphs" >0,1</text>
<line x1="1018" y1="476" x2="1023.9" y2="476" stroke="#dcdcdc" stroke-width="1.7" />
<text x="997" y="481.2" font-size="14" fill="#d4d4d4" textLength="20.6" lengthAdjust="spacingAndGlyphs" >0,1</text>
<line x1="1183.65" y1="555.4" x2="1183.65" y2="561" stroke="#dcdcdc" stroke-width="1.7" />
<text x="1169.35" y="576.1" font-size="14" fill="#d4d4d4" textLength="28.6" lengthAdjust="spacingAndGlyphs" >0,15</text>
<line x1="1018" y1="436.3" x2="1023.9" y2="436.3" stroke="#dcdcdc" stroke-width="1.7" />
<text x="989" y="441.5" font-size="14" fill="#d4d4d4" textLength="28.6" lengthAdjust="spacingAndGlyphs" >0,15</text>
<line x1="1236.9" y1="555.4" x2="1236.9" y2="561" stroke="#dcdcdc" stroke-width="1.7" />
<text x="1226.6" y="576.1" font-size="14" fill="#d4d4d4" textLength="20.6" lengthAdjust="spacingAndGlyphs" >0,2</text>
<line x1="1018" y1="396.6" x2="1023.9" y2="396.6" stroke="#dcdcdc" stroke-width="1.7" />
<text x="997" y="401.8" font-size="14" fill="#d4d4d4" textLength="20.6" lengthAdjust="spacingAndGlyphs" >0,2</text>
<line x1="1290.15" y1="555.4" x2="1290.15" y2="561" stroke="#dcdcdc" stroke-width="1.7" />
<text x="1275.85" y="576.1" font-size="14" fill="#d4d4d4" textLength="28.6" lengthAdjust="spacingAndGlyphs" >0,25</text>
<line x1="1018" y1="356.9" x2="1023.9" y2="356.9" stroke="#dcdcdc" stroke-width="1.7" />
<text x="989" y="362.1" font-size="14" fill="#d4d4d4" textLength="28.6" lengthAdjust="spacingAndGlyphs" >0,25</text>
<line x1="1343.4" y1="555.4" x2="1343.4" y2="561" stroke="#dcdcdc" stroke-width="1.7" />
<text x="1333.1" y="576.1" font-size="14" fill="#d4d4d4" textLength="20.6" lengthAdjust="spacingAndGlyphs" >0,3</text>
<line x1="1018" y1="317.2" x2="1023.9" y2="317.2" stroke="#dcdcdc" stroke-width="1.7" />
<text x="997" y="322.4" font-size="14" fill="#d4d4d4" textLength="20.6" lengthAdjust="spacingAndGlyphs" >0,3</text>
<line x1="1396.65" y1="555.4" x2="1396.65" y2="561" stroke="#dcdcdc" stroke-width="1.7" />
<text x="1382.35" y="576.1" font-size="14" fill="#d4d4d4" textLength="28.6" lengthAdjust="spacingAndGlyphs" >0,35</text>
<line x1="1018" y1="277.5" x2="1023.9" y2="277.5" stroke="#dcdcdc" stroke-width="1.7" />
<text x="989" y="282.7" font-size="14" fill="#d4d4d4" textLength="28.6" lengthAdjust="spacingAndGlyphs" >0,35</text>
<line x1="1449.9" y1="555.4" x2="1449.9" y2="561" stroke="#dcdcdc" stroke-width="1.7" />
<text x="1439.6" y="576.1" font-size="14" fill="#d4d4d4" textLength="20.6" lengthAdjust="spacingAndGlyphs" >0,4</text>
<line x1="1018" y1="237.8" x2="1023.9" y2="237.8" stroke="#dcdcdc" stroke-width="1.7" />
<text x="997" y="243" font-size="14" fill="#d4d4d4" textLength="20.6" lengthAdjust="spacingAndGlyphs" >0,4</text>
<line x1="1503.15" y1="555.4" x2="1503.15" y2="561" stroke="#dcdcdc" stroke-width="1.7" />
<text x="1488.85" y="576.1" font-size="14" fill="#d4d4d4" textLength="28.6" lengthAdjust="spacingAndGlyphs" >0,45</text>
<line x1="1018" y1="198.1" x2="1023.9" y2="198.1" stroke="#dcdcdc" stroke-width="1.7" />
<text x="989" y="203.3" font-size="14" fill="#d4d4d4" textLength="28.6" lengthAdjust="spacingAndGlyphs" >0,45</text>
<line x1="1556.4" y1="555.4" x2="1556.4" y2="561" stroke="#dcdcdc" stroke-width="1.7" />
<text x="1546.1" y="576.1" font-size="14" fill="#d4d4d4" textLength="20.6" lengthAdjust="spacingAndGlyphs" >0,5</text>
<line x1="1018" y1="158.4" x2="1023.9" y2="158.4" stroke="#dcdcdc" stroke-width="1.7" />
<text x="997" y="163.6" font-size="14" fill="#d4d4d4" textLength="20.6" lengthAdjust="spacingAndGlyphs" >0,5</text>
<line x1="1609.65" y1="555.4" x2="1609.65" y2="561" stroke="#dcdcdc" stroke-width="1.7" />
<text x="1595.35" y="576.1" font-size="14" fill="#d4d4d4" textLength="28.6" lengthAdjust="spacingAndGlyphs" >0,55</text>
<line x1="1018" y1="118.7" x2="1023.9" y2="118.7" stroke="#dcdcdc" stroke-width="1.7" />
<text x="989" y="123.9" font-size="14" fill="#d4d4d4" textLength="28.6" lengthAdjust="spacingAndGlyphs" >0,55</text>
<rect x="1496.9" y="132.9" width="13.5" height="12.8" fill="none" stroke="#f4f4f4" stroke-width="1.5"/>
<rect x="1150.0" y="101.5" width="13.5" height="12.8" fill="none" stroke="#f4f4f4" stroke-width="1.5"/>
<rect x="1203.7" y="422.7" width="13.5" height="12.8" fill="none" stroke="#f4f4f4" stroke-width="1.5"/>
<rect x="1164.2" y="186.5" width="13.5" height="12.8" fill="none" stroke="#f4f4f4" stroke-width="1.5"/>
<rect x="1341.7" y="286.3" width="13.5" height="12.8" fill="none" stroke="#f4f4f4" stroke-width="1.5"/>
<rect x="1234.1" y="109.1" width="13.5" height="12.8" fill="none" stroke="#f4f4f4" stroke-width="1.5"/>
<rect x="1227.4" y="177.0" width="12.5" height="12" fill="none" stroke="#000" stroke-width="2"/>
<circle cx="1487.9" cy="136.3" r="4" fill="#b00000" stroke="#000" stroke-width="1.1"/>
<circle cx="1167.3" cy="104.9" r="4" fill="#10b000" stroke="#000" stroke-width="1.1"/>
<circle cx="1214.6" cy="435.6" r="4" fill="#0000a0" stroke="#000" stroke-width="1.1"/>
<circle cx="1180.1" cy="195.5" r="4" fill="#18b8c0" stroke="#000" stroke-width="1.1"/>
<circle cx="1327.8" cy="312.3" r="4" fill="#a000b0" stroke="#000" stroke-width="1.1"/>
<circle cx="1235.1" cy="111.3" r="4" fill="#b0a800" stroke="#000" stroke-width="1.1"/>
<circle cx="1230.6" cy="184.9" r="4" fill="#ffffff" stroke="#000" stroke-width="1.1"/>
<rect x="1408.5" y="524" width="252" height="26" fill="#333" fill-opacity="0.92"/>
<text x="1408.7" y="544.3" font-size="19.5" fill="#f0f0f0" textLength="221.5" lengthAdjust="spacingAndGlyphs" >Gamut Coverage:  92,1%</text>
<text x="19.9" y="652.4" font-size="28.5" fill="#f0f0f0" textLength="219.1" lengthAdjust="spacingAndGlyphs" >Current Reading</text>
<text x="19.9" y="721.2" font-size="24" fill="#f0f0f0" textLength="88.4" lengthAdjust="spacingAndGlyphs" >x: 0,307</text>
<text x="177.1" y="721.2" font-size="24" fill="#f0f0f0" textLength="88.8" lengthAdjust="spacingAndGlyphs" >y: 0,326</text>
<text x="19.9" y="759.5" font-size="24" fill="#f0f0f0" textLength="111.3" lengthAdjust="spacingAndGlyphs" >fL: 145,59</text>
<text x="19.9" y="799.6" font-size="24" fill="#f0f0f0" textLength="159.1" lengthAdjust="spacingAndGlyphs" >cd/m²: 498,84</text>
<text x="431.2" y="622.2" font-size="13.5" fill="#d4d4d4" textLength="82.8" lengthAdjust="spacingAndGlyphs" >RGB Balance</text>
<rect x="350.5" y="626.5" width="262" height="174" fill="#262626" />
<line x1="345" y1="642.5" x2="612.5" y2="642.5" stroke="#9c9c9c" stroke-width="1" />
<text x="337" y="647.6" font-size="13.2" fill="#d4d4d4" textLength="7.4" lengthAdjust="spacingAndGlyphs" >5</text>
<line x1="345" y1="714.5" x2="612.5" y2="714.5" stroke="#9c9c9c" stroke-width="1" />
<text x="337" y="719.6" font-size="13.2" fill="#d4d4d4" textLength="7.4" lengthAdjust="spacingAndGlyphs" >0</text>
<line x1="345" y1="787.5" x2="612.5" y2="787.5" stroke="#9c9c9c" stroke-width="1" />
<text x="331.6" y="792.6" font-size="13.2" fill="#d4d4d4" textLength="12.8" lengthAdjust="spacingAndGlyphs" >-5</text>
<rect x="350.5" y="626.5" width="262" height="174" fill="none" stroke="#9c9c9c"/>
<line x1="350.5" y1="800" x2="350.5" y2="806.5" stroke="#c8c8c8" stroke-width="1" />
<line x1="612.5" y1="800" x2="612.5" y2="806.5" stroke="#c8c8c8" stroke-width="1" />
<text x="462.8" y="816.8" font-size="13.2" fill="#d4d4d4" textLength="37.6" lengthAdjust="spacingAndGlyphs" >100W</text>
<rect x="376.5" y="714.5" width="69" height="81" fill="url(#gR)" stroke="#000" stroke-width="1.2"/>
<rect x="445.5" y="697.5" width="69" height="17" fill="url(#gG)" stroke="#000" stroke-width="1.2"/>
<rect x="514.5" y="650.5" width="69.5" height="64" fill="url(#gB)" stroke="#000" stroke-width="1.2"/>
<text x="774.9" y="614.2" font-size="13.5" fill="#d4d4d4" textLength="75.7" lengthAdjust="spacingAndGlyphs" >CIE 1931 xy</text>
<g clip-path="url(#cpXY)"><rect x="642" y="618" width="342" height="2.5" fill="url(#x0)"/><rect x="642" y="620" width="342" height="2.5" fill="url(#x1)"/><rect x="642" y="622" width="342" height="2.5" fill="url(#x2)"/><rect x="642" y="624" width="342" height="2.5" fill="url(#x3)"/><rect x="642" y="626" width="342" height="2.5" fill="url(#x4)"/><rect x="642" y="628" width="342" height="2.5" fill="url(#x5)"/><rect x="642" y="630" width="342" height="2.5" fill="url(#x6)"/><rect x="642" y="632" width="342" height="2.5" fill="url(#x7)"/><rect x="642" y="634" width="342" height="2.5" fill="url(#x8)"/><rect x="642" y="636" width="342" height="2.5" fill="url(#x9)"/><rect x="642" y="638" width="342" height="2.5" fill="url(#x10)"/><rect x="642" y="640" width="342" height="2.5" fill="url(#x11)"/><rect x="642" y="642" width="342" height="2.5" fill="url(#x12)"/><rect x="642" y="644" width="342" height="2.5" fill="url(#x13)"/><rect x="642" y="646" width="342" height="2.5" fill="url(#x14)"/><rect x="642" y="648" width="342" height="2.5" fill="url(#x15)"/><rect x="642" y="650" width="342" height="2.5" fill="url(#x16)"/><rect x="642" y="652" width="342" height="2.5" fill="url(#x17)"/><rect x="642" y="654" width="342" height="2.5" fill="url(#x18)"/><rect x="642" y="656" width="342" height="2.5" fill="url(#x19)"/><rect x="642" y="658" width="342" height="2.5" fill="url(#x20)"/><rect x="642" y="660" width="342" height="2.5" fill="url(#x21)"/><rect x="642" y="662" width="342" height="2.5" fill="url(#x22)"/><rect x="642" y="664" width="342" height="2.5" fill="url(#x23)"/><rect x="642" y="666" width="342" height="2.5" fill="url(#x24)"/><rect x="642" y="668" width="342" height="2.5" fill="url(#x25)"/><rect x="642" y="670" width="342" height="2.5" fill="url(#x26)"/><rect x="642" y="672" width="342" height="2.5" fill="url(#x27)"/><rect x="642" y="674" width="342" height="2.5" fill="url(#x28)"/><rect x="642" y="676" width="342" height="2.5" fill="url(#x29)"/><rect x="642" y="678" width="342" height="2.5" fill="url(#x30)"/><rect x="642" y="680" width="342" height="2.5" fill="url(#x31)"/><rect x="642" y="682" width="342" height="2.5" fill="url(#x32)"/><rect x="642" y="684" width="342" height="2.5" fill="url(#x33)"/><rect x="642" y="686" width="342" height="2.5" fill="url(#x34)"/><rect x="642" y="688" width="342" height="2.5" fill="url(#x35)"/><rect x="642" y="690" width="342" height="2.5" fill="url(#x36)"/><rect x="642" y="692" width="342" height="2.5" fill="url(#x37)"/><rect x="642" y="694" width="342" height="2.5" fill="url(#x38)"/><rect x="642" y="696" width="342" height="2.5" fill="url(#x39)"/><rect x="642" y="698" width="342" height="2.5" fill="url(#x40)"/><rect x="642" y="700" width="342" height="2.5" fill="url(#x41)"/><rect x="642" y="702" width="342" height="2.5" fill="url(#x42)"/><rect x="642" y="704" width="342" height="2.5" fill="url(#x43)"/><rect x="642" y="706" width="342" height="2.5" fill="url(#x44)"/><rect x="642" y="708" width="342" height="2.5" fill="url(#x45)"/><rect x="642" y="710" width="342" height="2.5" fill="url(#x46)"/><rect x="642" y="712" width="342" height="2.5" fill="url(#x47)"/><rect x="642" y="714" width="342" height="2.5" fill="url(#x48)"/><rect x="642" y="716" width="342" height="2.5" fill="url(#x49)"/><rect x="642" y="718" width="342" height="2.5" fill="url(#x50)"/><rect x="642" y="720" width="342" height="2.5" fill="url(#x51)"/><rect x="642" y="722" width="342" height="2.5" fill="url(#x52)"/><rect x="642" y="724" width="342" height="2.5" fill="url(#x53)"/><rect x="642" y="726" width="342" height="2.5" fill="url(#x54)"/><rect x="642" y="728" width="342" height="2.5" fill="url(#x55)"/><rect x="642" y="730" width="342" height="2.5" fill="url(#x56)"/><rect x="642" y="732" width="342" height="2.5" fill="url(#x57)"/><rect x="642" y="734" width="342" height="2.5" fill="url(#x58)"/><rect x="642" y="736" width="342" height="2.5" fill="url(#x59)"/><rect x="642" y="738" width="342" height="2.5" fill="url(#x60)"/><rect x="642" y="740" width="342" height="2.5" fill="url(#x61)"/><rect x="642" y="742" width="342" height="2.5" fill="url(#x62)"/><rect x="642" y="744" width="342" height="2.5" fill="url(#x63)"/><rect x="642" y="746" width="342" height="2.5" fill="url(#x64)"/><rect x="642" y="748" width="342" height="2.5" fill="url(#x65)"/><rect x="642" y="750" width="342" height="2.5" fill="url(#x66)"/><rect x="642" y="752" width="342" height="2.5" fill="url(#x67)"/><rect x="642" y="754" width="342" height="2.5" fill="url(#x68)"/><rect x="642" y="756" width="342" height="2.5" fill="url(#x69)"/><rect x="642" y="758" width="342" height="2.5" fill="url(#x70)"/><rect x="642" y="760" width="342" height="2.5" fill="url(#x71)"/><rect x="642" y="762" width="342" height="2.5" fill="url(#x72)"/><rect x="642" y="764" width="342" height="2.5" fill="url(#x73)"/><rect x="642" y="766" width="342" height="2.5" fill="url(#x74)"/><rect x="642" y="768" width="342" height="2.5" fill="url(#x75)"/><rect x="642" y="770" width="342" height="2.5" fill="url(#x76)"/><rect x="642" y="772" width="342" height="2.5" fill="url(#x77)"/><rect x="642" y="774" width="342" height="2.5" fill="url(#x78)"/><rect x="642" y="776" width="342" height="2.5" fill="url(#x79)"/><rect x="642" y="778" width="342" height="2.5" fill="url(#x80)"/><rect x="642" y="780" width="342" height="2.5" fill="url(#x81)"/><rect x="642" y="782" width="342" height="2.5" fill="url(#x82)"/><rect x="642" y="784" width="342" height="2.5" fill="url(#x83)"/><rect x="642" y="786" width="342" height="2.5" fill="url(#x84)"/><rect x="642" y="788" width="342" height="2.5" fill="url(#x85)"/><rect x="642" y="790" width="342" height="2.5" fill="url(#x86)"/><rect x="642" y="792" width="342" height="2.5" fill="url(#x87)"/><rect x="642" y="794" width="342" height="2.5" fill="url(#x88)"/><rect x="642" y="796" width="342" height="2.5" fill="url(#x89)"/><rect x="642" y="798" width="342" height="2.5" fill="url(#x90)"/><rect x="642" y="800" width="342" height="2.5" fill="url(#x91)"/><rect x="642" y="802" width="342" height="2.5" fill="url(#x92)"/><rect x="642" y="804" width="342" height="2.5" fill="url(#x93)"/><rect x="642" y="806" width="342" height="2.5" fill="url(#x94)"/><rect x="642" y="808" width="342" height="2.5" fill="url(#x95)"/><rect x="642" y="810" width="342" height="1.5" fill="url(#x96)"/></g>
<rect x="642.5" y="618.5" width="341.5" height="192" fill="none" stroke="#a0a0a0" stroke-opacity="0.8"/>
<rect x="805.5" y="707.2" width="13.2" height="12.8" fill="#fff" stroke="#000" stroke-width="2"/>
<circle cx="773.4" cy="725.4" r="3.9" fill="#fff" stroke="#000" stroke-width="1.1"/>
<circle cx="755.4" cy="733.3" r="3.9" fill="#b4b4b4" stroke="#000" stroke-width="1.1"/>
<g clip-path="url(#cpTab)"><rect x="1001" y="605" width="634" height="38" fill="url(#gTH)"/><rect x="1001" y="642.8" width="634" height="35" fill="#3d3d3d"/><rect x="1001" y="677.8" width="634" height="34.2" fill="#7b7b7b"/><rect x="1001" y="712" width="634" height="34.8" fill="#3d3d3d"/><rect x="1001" y="746.8" width="634" height="35.2" fill="#7b7b7b"/><rect x="1001" y="782" width="634" height="35" fill="#3d3d3d"/><rect x="1001" y="642.8" width="15" height="160" fill="url(#gTL)"/><rect x="1001" y="605" width="15" height="37.8" fill="#000"/>
<text x="1092.6" y="630.6" font-size="19" fill="#f2f0ec" textLength="41.8" lengthAdjust="spacingAndGlyphs" stroke="#f2f0ec" stroke-width="0.25">White</text>
<text x="1172.2" y="630.6" font-size="19" fill="#f2f0ec" textLength="25.3" lengthAdjust="spacingAndGlyphs" stroke="#f2f0ec" stroke-width="0.25">Red</text>
<text x="1241.7" y="630.6" font-size="19" fill="#f2f0ec" textLength="41.9" lengthAdjust="spacingAndGlyphs" stroke="#f2f0ec" stroke-width="0.25">Green</text>
<text x="1320.9" y="630.6" font-size="19" fill="#f2f0ec" textLength="30.3" lengthAdjust="spacingAndGlyphs" stroke="#f2f0ec" stroke-width="0.25">Blue</text>
<text x="1390.5" y="630.6" font-size="19" fill="#f2f0ec" textLength="33.7" lengthAdjust="spacingAndGlyphs" stroke="#f2f0ec" stroke-width="0.25">Cyan</text>
<text x="1469.9" y="630.6" font-size="19" fill="#f2f0ec" textLength="61.3" lengthAdjust="spacingAndGlyphs" stroke="#f2f0ec" stroke-width="0.25">Magenta</text>
<text x="1541" y="630.6" font-size="19" fill="#f2f0ec" textLength="44.5" lengthAdjust="spacingAndGlyphs" stroke="#f2f0ec" stroke-width="0.25">Yellow</text>
<text x="1620.4" y="630.6" font-size="19" fill="#f2f0ec" textLength="41" lengthAdjust="spacingAndGlyphs" stroke="#f2f0ec" stroke-width="0.25">100W</text>
<text x="1020.2" y="667.7" font-size="19.3" fill="#f2f0ec" textLength="57.6" lengthAdjust="spacingAndGlyphs" stroke="#f2f0ec" stroke-width="0.25">x: CIE31</text>
<text x="1092.6" y="667.7" font-size="19.3" fill="#f2f0ec" textLength="49.7" lengthAdjust="spacingAndGlyphs" stroke="#f2f0ec" stroke-width="0.25">0,3043</text>
<text x="1172.2" y="667.7" font-size="19.3" fill="#f2f0ec" textLength="49.7" lengthAdjust="spacingAndGlyphs" stroke="#f2f0ec" stroke-width="0.25">0,6342</text>
<text x="1241.7" y="667.7" font-size="19.3" fill="#f2f0ec" textLength="49.7" lengthAdjust="spacingAndGlyphs" stroke="#f2f0ec" stroke-width="0.25">0,3236</text>
<text x="1320.9" y="667.7" font-size="19.3" fill="#f2f0ec" textLength="49.7" lengthAdjust="spacingAndGlyphs" stroke="#f2f0ec" stroke-width="0.25">0,1510</text>
<text x="1390.5" y="667.7" font-size="19.3" fill="#f2f0ec" textLength="49.7" lengthAdjust="spacingAndGlyphs" stroke="#f2f0ec" stroke-width="0.25">0,2340</text>
<text x="1469.9" y="667.7" font-size="19.3" fill="#f2f0ec" textLength="49.7" lengthAdjust="spacingAndGlyphs" stroke="#f2f0ec" stroke-width="0.25">0,2909</text>
<text x="1541" y="667.7" font-size="19.3" fill="#f2f0ec" textLength="49.7" lengthAdjust="spacingAndGlyphs" stroke="#f2f0ec" stroke-width="0.25">0,4195</text>
<text x="1620.4" y="667.7" font-size="19.3" fill="#f2f0ec" textLength="49.7" lengthAdjust="spacingAndGlyphs" stroke="#f2f0ec" stroke-width="0.25">0,3127</text>
<text x="1020.2" y="702.75" font-size="19.3" fill="#f2f0ec" textLength="57.6" lengthAdjust="spacingAndGlyphs" stroke="#f2f0ec" stroke-width="0.25">y: CIE31</text>
<text x="1092.6" y="702.75" font-size="19.3" fill="#f2f0ec" textLength="49.7" lengthAdjust="spacingAndGlyphs" stroke="#f2f0ec" stroke-width="0.25">0,3240</text>
<text x="1172.2" y="702.75" font-size="19.3" fill="#f2f0ec" textLength="49.7" lengthAdjust="spacingAndGlyphs" stroke="#f2f0ec" stroke-width="0.25">0,3409</text>
<text x="1241.7" y="702.75" font-size="19.3" fill="#f2f0ec" textLength="49.7" lengthAdjust="spacingAndGlyphs" stroke="#f2f0ec" stroke-width="0.25">0,6053</text>
<text x="1320.9" y="702.75" font-size="19.3" fill="#f2f0ec" textLength="49.7" lengthAdjust="spacingAndGlyphs" stroke="#f2f0ec" stroke-width="0.25">0,0562</text>
<text x="1390.5" y="702.75" font-size="19.3" fill="#f2f0ec" textLength="49.7" lengthAdjust="spacingAndGlyphs" stroke="#f2f0ec" stroke-width="0.25">0,3207</text>
<text x="1469.9" y="702.75" font-size="19.3" fill="#f2f0ec" textLength="49.7" lengthAdjust="spacingAndGlyphs" stroke="#f2f0ec" stroke-width="0.25">0,1383</text>
<text x="1541" y="702.75" font-size="19.3" fill="#f2f0ec" textLength="49.7" lengthAdjust="spacingAndGlyphs" stroke="#f2f0ec" stroke-width="0.25">0,5249</text>
<text x="1620.4" y="702.75" font-size="19.3" fill="#f2f0ec" textLength="49.7" lengthAdjust="spacingAndGlyphs" stroke="#f2f0ec" stroke-width="0.25">0,3290</text>
<text x="1020.2" y="737.8" font-size="19.3" fill="#f2f0ec" textLength="9" lengthAdjust="spacingAndGlyphs" stroke="#f2f0ec" stroke-width="0.25">Y</text>
<text x="1092.6" y="737.8" font-size="19.3" fill="#f2f0ec" textLength="67.86" lengthAdjust="spacingAndGlyphs" stroke="#f2f0ec" stroke-width="0.25">265,4531</text>
<text x="1172.2" y="737.8" font-size="19.3" fill="#f2f0ec" textLength="58.78" lengthAdjust="spacingAndGlyphs" stroke="#f2f0ec" stroke-width="0.25">48,9850</text>
<text x="1241.7" y="737.8" font-size="19.3" fill="#f2f0ec" textLength="67.86" lengthAdjust="spacingAndGlyphs" stroke="#f2f0ec" stroke-width="0.25">196,7183</text>
<text x="1320.9" y="737.8" font-size="19.3" fill="#f2f0ec" textLength="58.78" lengthAdjust="spacingAndGlyphs" stroke="#f2f0ec" stroke-width="0.25">19,7169</text>
<text x="1390.5" y="737.8" font-size="19.3" fill="#f2f0ec" textLength="67.86" lengthAdjust="spacingAndGlyphs" stroke="#f2f0ec" stroke-width="0.25">216,5278</text>
<text x="1469.9" y="737.8" font-size="19.3" fill="#f2f0ec" textLength="58.78" lengthAdjust="spacingAndGlyphs" stroke="#f2f0ec" stroke-width="0.25">68,3792</text>
<text x="1541" y="737.8" font-size="19.3" fill="#f2f0ec" textLength="67.86" lengthAdjust="spacingAndGlyphs" stroke="#f2f0ec" stroke-width="0.25">245,4348</text>
<text x="1620.4" y="737.8" font-size="19.3" fill="#f2f0ec" textLength="67.86" lengthAdjust="spacingAndGlyphs" stroke="#f2f0ec" stroke-width="0.25">498,8400</text>
<text x="1020.2" y="772.85" font-size="19.3" fill="#f2f0ec" textLength="60.4" lengthAdjust="spacingAndGlyphs" stroke="#f2f0ec" stroke-width="0.25">Target Y</text>
<text x="1092.6" y="772.85" font-size="19.3" fill="#f2f0ec" textLength="67.86" lengthAdjust="spacingAndGlyphs" stroke="#f2f0ec" stroke-width="0.25">265,4531</text>
<text x="1172.2" y="772.85" font-size="19.3" fill="#f2f0ec" textLength="58.78" lengthAdjust="spacingAndGlyphs" stroke="#f2f0ec" stroke-width="0.25">56,4502</text>
<text x="1241.7" y="772.85" font-size="19.3" fill="#f2f0ec" textLength="67.86" lengthAdjust="spacingAndGlyphs" stroke="#f2f0ec" stroke-width="0.25">189,8410</text>
<text x="1320.9" y="772.85" font-size="19.3" fill="#f2f0ec" textLength="58.78" lengthAdjust="spacingAndGlyphs" stroke="#f2f0ec" stroke-width="0.25">19,1619</text>
<text x="1390.5" y="772.85" font-size="19.3" fill="#f2f0ec" textLength="67.86" lengthAdjust="spacingAndGlyphs" stroke="#f2f0ec" stroke-width="0.25">209,0029</text>
<text x="1469.9" y="772.85" font-size="19.3" fill="#f2f0ec" textLength="58.78" lengthAdjust="spacingAndGlyphs" stroke="#f2f0ec" stroke-width="0.25">75,6121</text>
<text x="1541" y="772.85" font-size="19.3" fill="#f2f0ec" textLength="67.86" lengthAdjust="spacingAndGlyphs" stroke="#f2f0ec" stroke-width="0.25">246,2912</text>
<text x="1620.4" y="772.85" font-size="19.3" fill="#f2f0ec" textLength="67.86" lengthAdjust="spacingAndGlyphs" stroke="#f2f0ec" stroke-width="0.25">498,8400</text>
<text x="1020.2" y="807.9" font-size="19.3" fill="#f2f0ec" textLength="60" lengthAdjust="spacingAndGlyphs" stroke="#f2f0ec" stroke-width="0.25">ΔE 2000</text>
<text x="1092.6" y="807.9" font-size="19.3" fill="#f2f0ec" textLength="49.7" lengthAdjust="spacingAndGlyphs" stroke="#f2f0ec" stroke-width="0.25">3,4271</text>
<text x="1172.2" y="807.9" font-size="19.3" fill="#f2f0ec" textLength="49.7" lengthAdjust="spacingAndGlyphs" stroke="#f2f0ec" stroke-width="0.25">3,5439</text>
<text x="1241.7" y="807.9" font-size="19.3" fill="#f2f0ec" textLength="49.7" lengthAdjust="spacingAndGlyphs" stroke="#f2f0ec" stroke-width="0.25">3,7756</text>
<text x="1320.9" y="807.9" font-size="19.3" fill="#f2f0ec" textLength="49.7" lengthAdjust="spacingAndGlyphs" stroke="#f2f0ec" stroke-width="0.25">1,5435</text>
<text x="1390.5" y="807.9" font-size="19.3" fill="#f2f0ec" textLength="49.7" lengthAdjust="spacingAndGlyphs" stroke="#f2f0ec" stroke-width="0.25">3,3397</text>
<text x="1469.9" y="807.9" font-size="19.3" fill="#f2f0ec" textLength="49.7" lengthAdjust="spacingAndGlyphs" stroke="#f2f0ec" stroke-width="0.25">3,5465</text>
<text x="1541" y="807.9" font-size="19.3" fill="#f2f0ec" textLength="49.7" lengthAdjust="spacingAndGlyphs" stroke="#f2f0ec" stroke-width="0.25">2,3941</text>
<text x="1620.4" y="807.9" font-size="19.3" fill="#f2f0ec" textLength="49.7" lengthAdjust="spacingAndGlyphs" stroke="#f2f0ec" stroke-width="0.25">2,9900</text>
</g>
<rect x="1635.5" y="643" width="16.2" height="153" fill="#5c5c5c" />
<rect x="1637" y="664" width="13.2" height="85.5" rx="6.5" fill="#474747"/>
<rect x="1636.5" y="644.5" width="14.2" height="18" rx="3" fill="#727272" stroke="#808080" stroke-width="0.8"/>
<path d="M1638.8 657.5h9.6l-4.8 -6.8Z" fill="#3a3a3a"/>
<rect x="1636.5" y="777" width="14.2" height="18" rx="3" fill="#727272" stroke="#808080" stroke-width="0.8"/>
<path d="M1638.8 782.5h9.6l-4.8 6.8Z" fill="#3a3a3a"/>
<rect x="1016" y="796" width="619" height="21.7" fill="#5c5c5c" />
<rect x="1034" y="798.3" width="530.5" height="17.4" rx="8.7" fill="#424242"/>
<rect x="1017.5" y="798.3" width="13.5" height="17.4" rx="3" fill="#727272" stroke="#808080" stroke-width="0.8"/>
<path d="M1028 802v10l-7 -5Z" fill="#3a3a3a"/>
<rect x="1619.5" y="798.3" width="13.5" height="17.4" rx="3" fill="#727272" stroke="#808080" stroke-width="0.8"/>
<path d="M1623 802v10l7 -5Z" fill="#3a3a3a"/>
<rect x="6.2" y="826.5" width="155.8" height="76" rx="4.5" fill="url(#gBB)"/>
<rect x="12.6" y="832.5" width="143.4" height="45.6" rx="4.5" fill="#777777"/>
<rect x="13.1" y="833.6" width="142.4" height="44.4" rx="4" fill="#c0c0c0"/>
<text x="65.75" y="896.5" font-size="11.8" fill="#2a2a2a" textLength="36.9" lengthAdjust="spacingAndGlyphs" stroke="#2a2a2a" stroke-width="0.6">White</text>
<rect x="164.2" y="826.5" width="155.8" height="76" rx="4.5" fill="url(#gBB)"/>
<rect x="170.6" y="832.5" width="143.4" height="45.6" rx="4.5" fill="#790000"/>
<rect x="171.1" y="833.6" width="142.4" height="44.4" rx="4" fill="#c40000"/>
<text x="230.7" y="896.5" font-size="11.8" fill="#2a2a2a" textLength="23" lengthAdjust="spacingAndGlyphs" stroke="#2a2a2a" stroke-width="0.6">Red</text>
<rect x="322.2" y="826.5" width="155.8" height="76" rx="4.5" fill="url(#gBB)"/>
<rect x="328.6" y="832.5" width="143.4" height="45.6" rx="4.5" fill="#007900"/>
<rect x="329.1" y="833.6" width="142.4" height="44.4" rx="4" fill="#00c400"/>
<text x="381.7" y="896.5" font-size="11.8" fill="#2a2a2a" textLength="37" lengthAdjust="spacingAndGlyphs" stroke="#2a2a2a" stroke-width="0.6">Green</text>
<rect x="480.2" y="826.5" width="155.8" height="76" rx="4.5" fill="url(#gBB)"/>
<rect x="486.6" y="832.5" width="143.4" height="45.6" rx="4.5" fill="#000079"/>
<rect x="487.1" y="833.6" width="142.4" height="44.4" rx="4" fill="#0000c4"/>
<text x="544.85" y="896.5" font-size="11.8" fill="#2a2a2a" textLength="26.7" lengthAdjust="spacingAndGlyphs" stroke="#2a2a2a" stroke-width="0.6">Blue</text>
<rect x="638.2" y="826.5" width="155.8" height="76" rx="4.5" fill="url(#gBB)"/>
<rect x="644.6" y="832.5" width="143.4" height="45.6" rx="4.5" fill="#007979"/>
<rect x="645.1" y="833.6" width="142.4" height="44.4" rx="4" fill="#00c4c4"/>
<text x="701.4" y="896.5" font-size="11.8" fill="#2a2a2a" textLength="29.6" lengthAdjust="spacingAndGlyphs" stroke="#2a2a2a" stroke-width="0.6">Cyan</text>
<rect x="796.2" y="826.5" width="155.8" height="76" rx="4.5" fill="url(#gBB)"/>
<rect x="802.6" y="832.5" width="143.4" height="45.6" rx="4.5" fill="#790079"/>
<rect x="803.1" y="833.6" width="142.4" height="44.4" rx="4" fill="#c400c4"/>
<text x="847.95" y="896.5" font-size="11.8" fill="#2a2a2a" textLength="52.5" lengthAdjust="spacingAndGlyphs" stroke="#2a2a2a" stroke-width="0.6">Magenta</text>
<rect x="954.2" y="826.5" width="155.8" height="76" rx="4.5" fill="url(#gBB)"/>
<rect x="960.6" y="832.5" width="143.4" height="45.6" rx="4.5" fill="#797900"/>
<rect x="961.1" y="833.6" width="142.4" height="44.4" rx="4" fill="#c4c400"/>
<text x="1012.35" y="896.5" font-size="11.8" fill="#2a2a2a" textLength="39.7" lengthAdjust="spacingAndGlyphs" stroke="#2a2a2a" stroke-width="0.6">Yellow</text>
<rect x="1112.2" y="826.5" width="155.8" height="76" rx="4.5" fill="url(#gBS)"/>
<rect x="1118.6" y="832.5" width="143.4" height="45.6" rx="4.5" fill="#777"/>
<rect x="1119.1" y="833.6" width="142.4" height="44.4" rx="4" fill="#ffffff"/>
<text x="1171.9" y="897.3" font-size="12.2" fill="#fff" textLength="35.7" lengthAdjust="spacingAndGlyphs" font-weight="bold" >100W</text>
<path d="M1275.5 826.5H1331.3V848.8H1271V831a4.5 4.5 0 0 1 4.5 -4.5Z" fill="url(#gCB)"/>
<path d="M1271 850H1331.3V902.3H1275.5a4.5 4.5 0 0 1 -4.5 -4.5Z" fill="url(#gCB2)"/>
<line x1="1271" y1="849.4" x2="1331.3" y2="849.4" stroke="#4a4a4a" stroke-width="1" />
<circle cx="1301.4" cy="838.2" r="9.4" fill="url(#gKn2)"/>
<path d="M1295.6 840.4h11.6l-5.8 -6.3Z" fill="#383838"/>
<rect x="1282.8" y="858.6" width="36.2" height="35.6" rx="4.5" fill="url(#gSq)" stroke="#161616" stroke-width="2.4"/>
<rect x="1292.9" y="868" width="17.1" height="16.9" fill="url(#gSq2)" />
<rect x="1332.5" y="826" width="57.1" height="38" fill="url(#gCT)" />
<rect x="1390.6" y="826" width="55.4" height="38" fill="url(#gCT)" />
<rect x="1447" y="826" width="55.4" height="38" fill="url(#gCT)" />
<rect x="1503.4" y="826" width="55.5" height="38" fill="url(#gCT)" />
<rect x="1559.9" y="826" width="55.4" height="38" fill="url(#gCT)" />
<circle cx="1361.2" cy="845.1" r="12.4" fill="url(#gKn2)"/>
<circle cx="1418.5" cy="845.1" r="12.4" fill="url(#gKn2)"/>
<circle cx="1474.3" cy="845.1" r="12.4" fill="url(#gKn2)"/>
<circle cx="1530.8" cy="845.1" r="12.4" fill="url(#gKn2)"/>
<circle cx="1587.1" cy="845.1" r="12.4" fill="url(#gKn2)"/>
<rect x="1356.3" y="840.3" width="9.8" height="9.8" fill="#3c3c3c" />
<path d="M1414.3 838.6V851.6L1424.8 845.1Z" fill="#3c3c3c"/>
<path d="M1469.8 839.6h-2.6v11h2.6M1478.8 839.6h2.6v11h-2.6" fill="none" stroke="#3c3c3c" stroke-width="1.7"/>
<path d="M1470.6 845.1h7.4M1472.3 843.4l-1.7 1.7 1.7 1.7M1476.3 843.4l1.7 1.7 -1.7 1.7" fill="none" stroke="#3c3c3c" stroke-width="1.1"/>
<path d="M1530.8 844.3c-1.6 -2.4 -3.2 -3.4 -5 -3.4a3.4 3.4 0 0 0 0 6.8c1.8 0 3.4 -1 5 -3.4c1.6 -2.4 3.2 -3.4 5 -3.4a3.4 3.4 0 0 1 0 6.8c-1.8 0 -3.4 -1 -5 -3.4Z" fill="none" stroke="#3c3c3c" stroke-width="1.7"/>
<path d="M1581.3 843.6a6 6 0 0 1 10.6 -2.6M1592.9 846.6a6 6 0 0 1 -10.6 2.6" fill="none" stroke="#3c3c3c" stroke-width="2.4"/>
<path d="M1594 837v6h-6ZM1580.2 853.2v-6h6Z" fill="#3c3c3c"/>
<path d="M1337 865H1502.4V902.4H1332.8V869a4 4 0 0 1 4.2 -4Z" fill="url(#gBN)"/>
<path d="M1503.9 865H1668.5a4.5 4.5 0 0 1 4.5 4.5V898a4.5 4.5 0 0 1 -4.5 4.4H1503.9Z" fill="url(#gBN)"/>
<circle cx="1371.1" cy="884.1" r="12.4" fill="url(#gKn2)"/>
<circle cx="1637.7" cy="884.1" r="12.4" fill="url(#gKn2)"/>
<path d="M1370.4 879.3l-4.6 4.8 4.6 4.8M1376 879.3l-4.6 4.8 4.6 4.8" fill="none" stroke="#3c3c3c" stroke-width="1.8"/>
<path d="M1633 879.3l4.6 4.8 -4.6 4.8M1638.6 879.3l4.6 4.8 -4.6 4.8" fill="none" stroke="#3c3c3c" stroke-width="1.8"/>
<text x="1405" y="893.5" font-size="27" fill="#363636" textLength="61.9" lengthAdjust="spacingAndGlyphs" stroke="#363636" stroke-width="0.7" filter="url(#fSoft)">Back</text>
<text x="1538.4" y="893.5" font-size="27" fill="#363636" textLength="63.5" lengthAdjust="spacingAndGlyphs" stroke="#363636" stroke-width="0.7" filter="url(#fSoft)">Next</text>
<g filter="url(#fSh)" opacity="0.75"><path transform="translate(1644 845) rotate(0)" d="M-3.3 -16.6H3.3L2.1 0 3.3 16.6H-3.3L-2.1 0Z" fill="#000" stroke="#000" stroke-width="1.2" stroke-linejoin="round"/><path transform="translate(1644 845) rotate(60)" d="M-3.3 -16.6H3.3L2.1 0 3.3 16.6H-3.3L-2.1 0Z" fill="#000" stroke="#000" stroke-width="1.2" stroke-linejoin="round"/><path transform="translate(1644 845) rotate(120)" d="M-3.3 -16.6H3.3L2.1 0 3.3 16.6H-3.3L-2.1 0Z" fill="#000" stroke="#000" stroke-width="1.2" stroke-linejoin="round"/></g>
<g ><path transform="translate(1642.4 843.2) rotate(0)" d="M-3.3 -16.6H3.3L2.1 0 3.3 16.6H-3.3L-2.1 0Z" fill="#e20c0c" stroke="#e20c0c" stroke-width="1.2" stroke-linejoin="round"/><path transform="translate(1642.4 843.2) rotate(60)" d="M-3.3 -16.6H3.3L2.1 0 3.3 16.6H-3.3L-2.1 0Z" fill="#e20c0c" stroke="#e20c0c" stroke-width="1.2" stroke-linejoin="round"/><path transform="translate(1642.4 843.2) rotate(120)" d="M-3.3 -16.6H3.3L2.1 0 3.3 16.6H-3.3L-2.1 0Z" fill="#e20c0c" stroke="#e20c0c" stroke-width="1.2" stroke-linejoin="round"/></g>
<line x1="1669.5" y1="903" x2="1669.5" y2="911" stroke="#b0b0b0" stroke-width="1" /></svg></body></html>
